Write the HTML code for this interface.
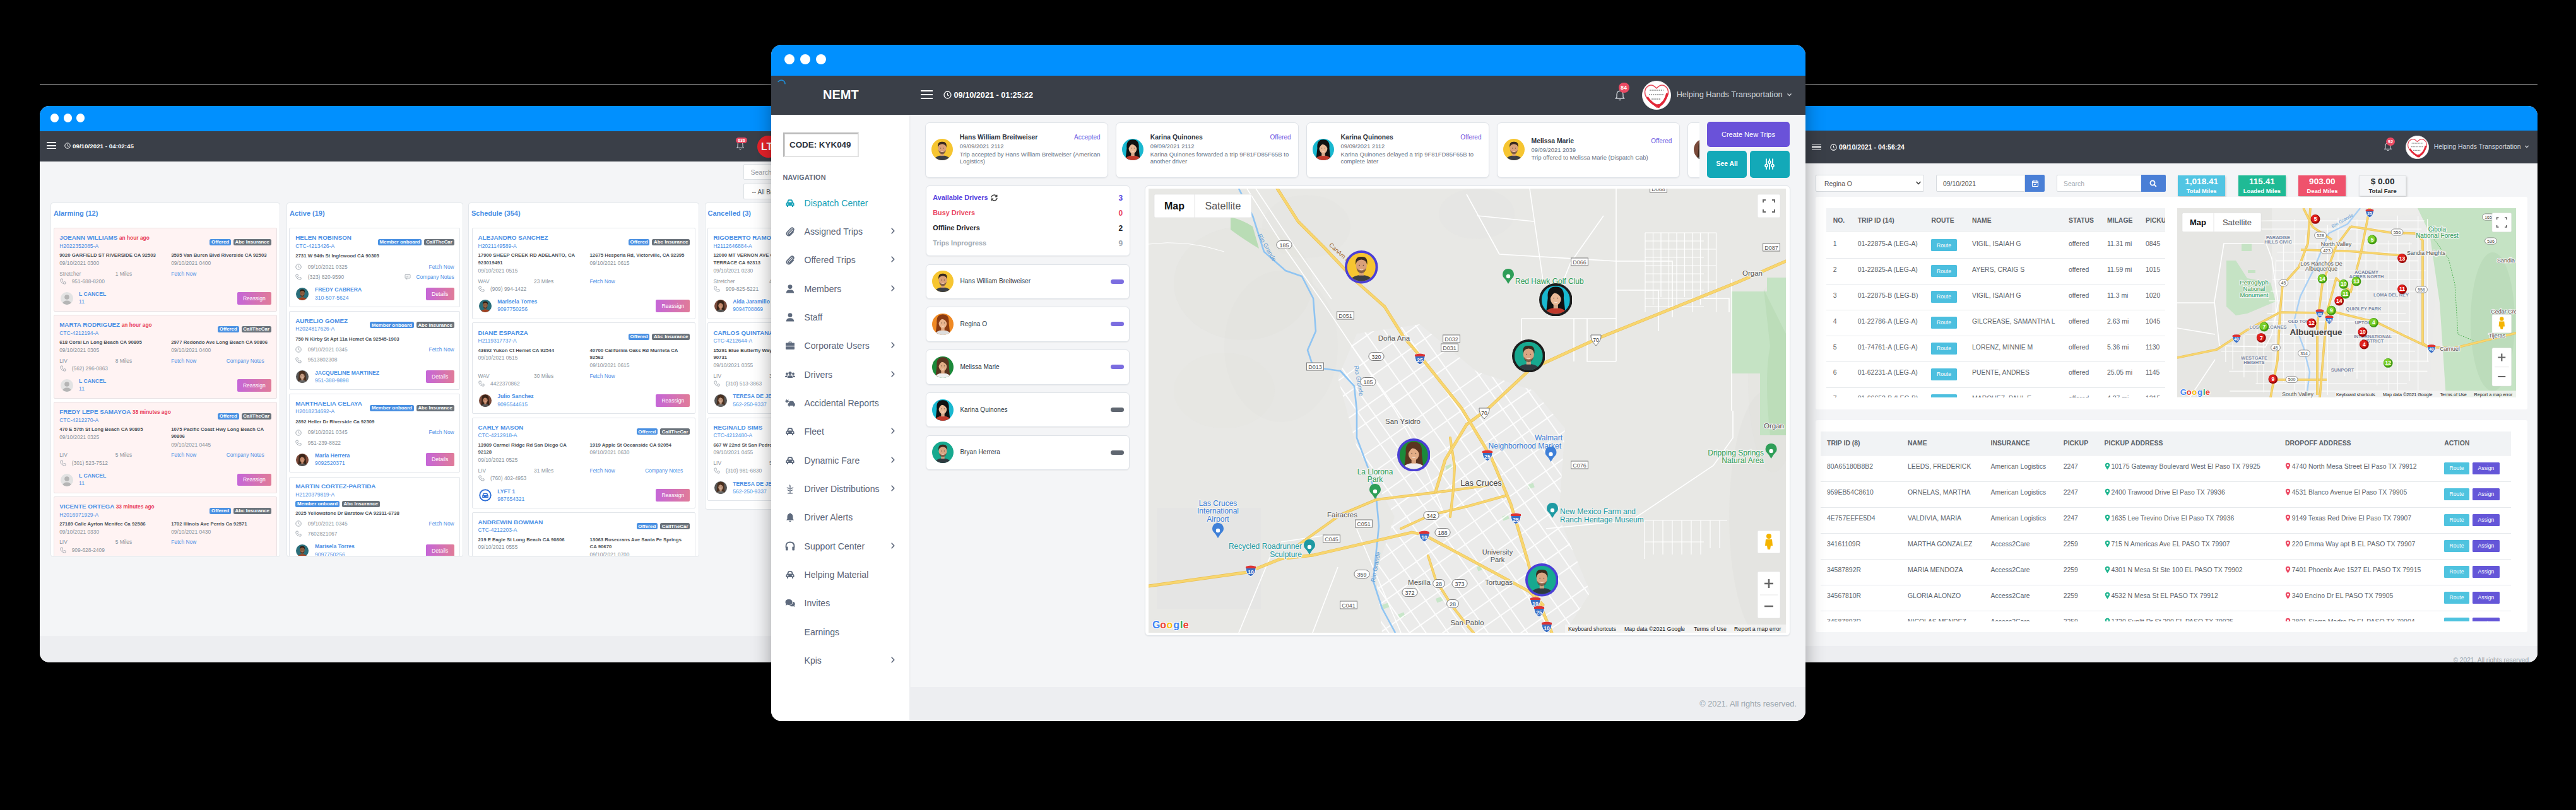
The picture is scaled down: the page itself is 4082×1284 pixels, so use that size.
<!DOCTYPE html>
<html><head><meta charset="utf-8">
<style>
*{box-sizing:border-box;margin:0;padding:0}
html,body{width:4082px;height:1284px;overflow:hidden;background:#000;font-family:"Liberation Sans",sans-serif}
.abs{position:absolute}
.win{position:absolute;overflow:hidden}
.tb{position:absolute;left:0;right:0;top:0;background:#0190fe}
.dot{position:absolute;border-radius:50%;background:#fff}
.hdr{position:absolute;left:0;right:0;background:#3a3f48}
.t{position:absolute;white-space:nowrap}
.card{position:absolute;background:#fff;border:1px solid #dfe3e8;border-radius:7px;box-shadow:0 1px 2px rgba(0,0,0,.06)}
</style></head><body>

<div class="abs" style="left:63px;top:133px;width:3958px;height:1px;background:#a9a9a9"></div>
<div id="lw" class="win" style="left:63px;top:168px;width:1239px;height:882px;border-radius:15px;background:#f4f5f7">
<div class="tb" style="height:39.5px"></div>
<div class="dot" style="left:17.1px;top:12.4px;width:13.2px;height:13.2px"></div>
<div class="dot" style="left:37.8px;top:12.4px;width:13.2px;height:13.2px"></div>
<div class="dot" style="left:58.2px;top:12.4px;width:13.2px;height:13.2px"></div>
<div class="hdr" style="top:39.5px;height:48px"></div>
<div class="abs" style="left:-1px;top:0;width:1240px;height:881px">
<div class="abs" style="left:12.0px;top:57.2px;width:15.0px;height:1.7px;background:#fff;"></div>
<div class="abs" style="left:12.0px;top:61.9px;width:15.0px;height:1.7px;background:#fff;"></div>
<div class="abs" style="left:12.0px;top:66.6px;width:15.0px;height:1.7px;background:#fff;"></div>
<svg class="abs" style="left:40px;top:57.7px" width="10" height="10" viewBox="0 0 10 10"><circle cx="5" cy="5" r="4.2" fill="none" stroke="#fff" stroke-width="1"/><path d="M5 2.5 V5.3 L6.8 6.3" fill="none" stroke="#fff" stroke-width=".9"/></svg>
<div class="t" style="left:53.0px;top:58.5px;font-size:9.8px;line-height:9.8px;color:#fff;font-weight:bold;">09/10/2021 - 04:02:45</div>
<svg class="abs" style="left:1103px;top:54px" width="16" height="17" viewBox="0 0 16 17"><path d="M8 2.5 Q12 3 12 7.5 V10.5 L13.2 12.3 H2.8 L4 10.5 V7.5 Q4 3 8 2.5Z" fill="none" stroke="#c9cdd3" stroke-width="1.1"/><path d="M6.5 14 Q8 15.6 9.5 14" fill="none" stroke="#c9cdd3" stroke-width="1"/></svg>
<div class="abs" style="left:1104px;top:49.8px;width:18px;height:9px;border-radius:4.5px;background:#ea4a63"></div>
<div class="t" style="left:1113.0px;top:51.1px;font-size:7px;line-height:7px;color:#fff;font-weight:bold;transform:translateX(-50%);">636</div>
<div class="abs" style="left:1138.4px;top:47px;width:35px;height:35px;border-radius:50%;background:#e8222a"></div>
<div class="t" style="left:1144.0px;top:56.5px;font-size:16px;line-height:16px;color:#fff;font-weight:bold;">LT</div>
<div class="abs" style="left:1116px;top:92px;width:120px;height:25px;background:#fff;border:1px solid #dde1e5;border-radius:2px"></div>
<div class="t" style="left:1127.5px;top:100.1px;font-size:10.5px;line-height:10.5px;color:#9aa1a8;font-weight:normal;">Search</div>
<div class="abs" style="left:1116px;top:122.8px;width:120px;height:25.7px;background:#fff;border:1px solid #dde1e5;border-radius:2px"></div>
<div class="t" style="left:1129.5px;top:131.5px;font-size:10px;line-height:10px;color:#555;font-weight:normal;">-- All Br</div>
<div class="abs" style="left:18px;top:153px;width:364px;height:561.5px;background:#fff;border:1px solid #e3e7eb;border-radius:4px"></div>
<div class="t" style="left:23.0px;top:165.3px;font-size:11px;line-height:11px;color:#4a8fe5;font-weight:bold;">Alarming (12)</div>
<div class="abs" style="left:392px;top:153px;width:280px;height:561.5px;background:#fff;border:1px solid #e3e7eb;border-radius:4px"></div>
<div class="t" style="left:397.0px;top:165.3px;font-size:11px;line-height:11px;color:#4a8fe5;font-weight:bold;">Active (19)</div>
<div class="abs" style="left:680px;top:153px;width:366px;height:561.5px;background:#fff;border:1px solid #e3e7eb;border-radius:4px"></div>
<div class="t" style="left:685.0px;top:165.3px;font-size:11px;line-height:11px;color:#4a8fe5;font-weight:bold;">Schedule (354)</div>
<div class="abs" style="left:1054.5px;top:153px;width:300px;height:487px;background:#fff;border:1px solid #e3e7eb;border-radius:4px"></div>
<div class="t" style="left:1059.5px;top:165.3px;font-size:11px;line-height:11px;color:#4a8fe5;font-weight:bold;">Cancelled (3)</div>
<div class="abs" style="left:18px;top:153px;width:364px;height:560px;overflow:hidden">
<div class="abs" style="left:5.0px;top:40.3px;width:354.0px;height:132.9px;background:#fff3f3;border:1px solid #e8e1e3;border-radius:2px"></div>
<div class="t" style="left:14.2px;top:51.4px;font-size:9.8px;line-height:9.8px;color:#4a8fe5;font-weight:bold;">JOEANN WILLIAMS <span style="color:#e8405a;font-size:8.4px">an hour ago</span></div>
<div class="t" style="left:14.2px;top:64.8px;font-size:8.5px;line-height:8.5px;color:#4a8fe5;font-weight:normal;">H2022352085-A</div>
<div class="abs" style="left:289.9px;top:58.0px;width:59.9px;height:10px;border-radius:2.5px;background:#6b737b"></div><div class="t" style="left:319.8px;top:59.3px;font-size:7.9px;line-height:7.9px;color:#fff;font-weight:bold;transform:translateX(-50%);">Abc Insurance</div><div class="abs" style="left:252.3px;top:58.0px;width:33.6px;height:10px;border-radius:2.5px;background:#4a90e2"></div><div class="t" style="left:269.1px;top:59.3px;font-size:7.9px;line-height:7.9px;color:#fff;font-weight:bold;transform:translateX(-50%);">Offered</div>
<div class="t" style="left:14.2px;top:80.4px;font-size:7.8px;line-height:7.8px;color:#4d535a;font-weight:bold;">9020 GARFIELD ST RIVERSIDE CA 92503</div>
<div class="t" style="left:14.2px;top:91.9px;font-size:8.4px;line-height:8.4px;color:#8b949c;font-weight:normal;">09/10/2021 0300</div>
<div class="t" style="left:191.2px;top:80.4px;font-size:7.8px;line-height:7.8px;color:#4d535a;font-weight:bold;">3595 Van Buren Blvd Riverside CA 92503</div>
<div class="t" style="left:191.2px;top:91.9px;font-size:8.4px;line-height:8.4px;color:#8b949c;font-weight:normal;">09/10/2021 0400</div>
<div class="t" style="left:14.2px;top:108.6px;font-size:8.4px;line-height:8.4px;color:#8b949c;font-weight:normal;">Stretcher</div>
<div class="t" style="left:102.7px;top:108.6px;font-size:8.4px;line-height:8.4px;color:#8b949c;font-weight:normal;">1 Miles</div>
<div class="t" style="left:191.2px;top:108.6px;font-size:8.4px;line-height:8.4px;color:#4a8fe5;font-weight:normal;">Fetch Now</div>
<svg class="abs" style="left:14.5px;top:120.1px" width="10" height="10" viewBox="0 0 10 10"><path d="M2.2 1 L3.8 1 L4.6 3.2 L3.5 4.2 Q4.4 6 6 6.6 L7 5.5 L9.1 6.3 V7.9 Q9 9.3 7.6 9.2 Q4.2 8.8 2.1 6.4 Q0.7 4.5 0.8 2.4 Q0.9 1.1 2.2 1Z" fill="none" stroke="#9aa2aa" stroke-width=".9"/></svg>
<div class="t" style="left:33.7px;top:120.8px;font-size:8.4px;line-height:8.4px;color:#8b949c;font-weight:normal;">951-688-8200</div>
<svg class="abs" style="left:15.5px;top:141.9px" width="20.0" height="20.0" viewBox="-50 -50 100 100"><clipPath id="cgen225151"><circle r="50"/></clipPath><g clip-path="url(#cgen225151)"><rect x="-50" y="-50" width="100" height="100" fill="#e3e3e3"/><circle cy="-10" r="19" fill="#b5b5b5"/><ellipse cy="42" rx="34" ry="24" fill="#b5b5b5"/></g></svg>
<div class="t" style="left:45.0px;top:141.3px;font-size:8.6px;line-height:8.6px;color:#4a8fe5;font-weight:bold;">L CANCEL</div>
<div class="t" style="left:45.0px;top:153.4px;font-size:8.6px;line-height:8.6px;color:#4a8fe5;font-weight:normal;">11</div>
<div class="abs" style="left:295.7px;top:142.1px;width:54.3px;height:19.5px;border-radius:2px;background:linear-gradient(90deg,#c566d8,#e07b98)"></div><div class="t" style="left:322.8px;top:147.6px;font-size:8.6px;line-height:8.6px;color:#fff;font-weight:normal;transform:translateX(-50%);">Reassign</div>
<div class="abs" style="left:5.0px;top:178.2px;width:354.0px;height:132.9px;background:#fff3f3;border:1px solid #e8e1e3;border-radius:2px"></div>
<div class="t" style="left:14.2px;top:189.3px;font-size:9.8px;line-height:9.8px;color:#4a8fe5;font-weight:bold;">MARTA RODRIGUEZ <span style="color:#e8405a;font-size:8.4px">an hour ago</span></div>
<div class="t" style="left:14.2px;top:202.7px;font-size:8.5px;line-height:8.5px;color:#4a8fe5;font-weight:normal;">CTC-4212194-A</div>
<div class="abs" style="left:302.6px;top:195.9px;width:47.2px;height:10px;border-radius:2.5px;background:#6b737b"></div><div class="t" style="left:326.2px;top:197.2px;font-size:7.9px;line-height:7.9px;color:#fff;font-weight:bold;transform:translateX(-50%);">CallTheCar</div><div class="abs" style="left:265.0px;top:195.9px;width:33.6px;height:10px;border-radius:2.5px;background:#4a90e2"></div><div class="t" style="left:281.8px;top:197.2px;font-size:7.9px;line-height:7.9px;color:#fff;font-weight:bold;transform:translateX(-50%);">Offered</div>
<div class="t" style="left:14.2px;top:218.3px;font-size:7.8px;line-height:7.8px;color:#4d535a;font-weight:bold;">618 Coral Ln Long Beach CA 90805</div>
<div class="t" style="left:14.2px;top:229.8px;font-size:8.4px;line-height:8.4px;color:#8b949c;font-weight:normal;">09/10/2021 0305</div>
<div class="t" style="left:191.2px;top:218.3px;font-size:7.8px;line-height:7.8px;color:#4d535a;font-weight:bold;">2977 Redondo Ave Long Beach CA 90806</div>
<div class="t" style="left:191.2px;top:229.8px;font-size:8.4px;line-height:8.4px;color:#8b949c;font-weight:normal;">09/10/2021 0400</div>
<div class="t" style="left:14.2px;top:246.5px;font-size:8.4px;line-height:8.4px;color:#8b949c;font-weight:normal;">LIV</div>
<div class="t" style="left:102.7px;top:246.5px;font-size:8.4px;line-height:8.4px;color:#8b949c;font-weight:normal;">8 Miles</div>
<div class="t" style="left:191.2px;top:246.5px;font-size:8.4px;line-height:8.4px;color:#4a8fe5;font-weight:normal;">Fetch Now</div>
<div class="t" style="left:338.7px;top:246.5px;font-size:8.4px;line-height:8.4px;color:#4a8fe5;font-weight:normal;transform:translateX(-100%);">Company Notes</div>
<svg class="abs" style="left:14.5px;top:258.0px" width="10" height="10" viewBox="0 0 10 10"><path d="M2.2 1 L3.8 1 L4.6 3.2 L3.5 4.2 Q4.4 6 6 6.6 L7 5.5 L9.1 6.3 V7.9 Q9 9.3 7.6 9.2 Q4.2 8.8 2.1 6.4 Q0.7 4.5 0.8 2.4 Q0.9 1.1 2.2 1Z" fill="none" stroke="#9aa2aa" stroke-width=".9"/></svg>
<div class="t" style="left:33.7px;top:258.7px;font-size:8.4px;line-height:8.4px;color:#8b949c;font-weight:normal;">(562) 296-0863</div>
<svg class="abs" style="left:15.5px;top:279.8px" width="20.0" height="20.0" viewBox="-50 -50 100 100"><clipPath id="cgen225289"><circle r="50"/></clipPath><g clip-path="url(#cgen225289)"><rect x="-50" y="-50" width="100" height="100" fill="#e3e3e3"/><circle cy="-10" r="19" fill="#b5b5b5"/><ellipse cy="42" rx="34" ry="24" fill="#b5b5b5"/></g></svg>
<div class="t" style="left:45.0px;top:279.2px;font-size:8.6px;line-height:8.6px;color:#4a8fe5;font-weight:bold;">L CANCEL</div>
<div class="t" style="left:45.0px;top:291.3px;font-size:8.6px;line-height:8.6px;color:#4a8fe5;font-weight:normal;">11</div>
<div class="abs" style="left:295.7px;top:280.0px;width:54.3px;height:19.5px;border-radius:2px;background:linear-gradient(90deg,#c566d8,#e07b98)"></div><div class="t" style="left:322.8px;top:285.5px;font-size:8.6px;line-height:8.6px;color:#fff;font-weight:normal;transform:translateX(-50%);">Reassign</div>
<div class="abs" style="left:5.0px;top:316.1px;width:354.0px;height:144.9px;background:#fff3f3;border:1px solid #e8e1e3;border-radius:2px"></div>
<div class="t" style="left:14.2px;top:327.2px;font-size:9.8px;line-height:9.8px;color:#4a8fe5;font-weight:bold;">FREDY LEPE SAMAYOA <span style="color:#e8405a;font-size:8.4px">38 minutes ago</span></div>
<div class="t" style="left:14.2px;top:340.6px;font-size:8.5px;line-height:8.5px;color:#4a8fe5;font-weight:normal;">CTC-4212270-A</div>
<div class="abs" style="left:302.6px;top:333.8px;width:47.2px;height:10px;border-radius:2.5px;background:#6b737b"></div><div class="t" style="left:326.2px;top:335.1px;font-size:7.9px;line-height:7.9px;color:#fff;font-weight:bold;transform:translateX(-50%);">CallTheCar</div><div class="abs" style="left:265.0px;top:333.8px;width:33.6px;height:10px;border-radius:2.5px;background:#4a90e2"></div><div class="t" style="left:281.8px;top:335.1px;font-size:7.9px;line-height:7.9px;color:#fff;font-weight:bold;transform:translateX(-50%);">Offered</div>
<div class="t" style="left:14.2px;top:356.2px;font-size:7.8px;line-height:7.8px;color:#4d535a;font-weight:bold;">470 E 57th St Long Beach CA 90805</div>
<div class="t" style="left:14.2px;top:367.7px;font-size:8.4px;line-height:8.4px;color:#8b949c;font-weight:normal;">09/10/2021 0325</div>
<div class="t" style="left:191.2px;top:356.2px;font-size:7.8px;line-height:7.8px;color:#4d535a;font-weight:bold;">1075 Pacific Coast Hwy Long Beach CA</div>
<div class="t" style="left:191.2px;top:367.4px;font-size:7.8px;line-height:7.8px;color:#4d535a;font-weight:bold;">90806</div>
<div class="t" style="left:191.2px;top:379.7px;font-size:8.4px;line-height:8.4px;color:#8b949c;font-weight:normal;">09/10/2021 0445</div>
<div class="t" style="left:14.2px;top:396.4px;font-size:8.4px;line-height:8.4px;color:#8b949c;font-weight:normal;">LIV</div>
<div class="t" style="left:102.7px;top:396.4px;font-size:8.4px;line-height:8.4px;color:#8b949c;font-weight:normal;">5 Miles</div>
<div class="t" style="left:191.2px;top:396.4px;font-size:8.4px;line-height:8.4px;color:#4a8fe5;font-weight:normal;">Fetch Now</div>
<div class="t" style="left:338.7px;top:396.4px;font-size:8.4px;line-height:8.4px;color:#4a8fe5;font-weight:normal;transform:translateX(-100%);">Company Notes</div>
<svg class="abs" style="left:14.5px;top:407.9px" width="10" height="10" viewBox="0 0 10 10"><path d="M2.2 1 L3.8 1 L4.6 3.2 L3.5 4.2 Q4.4 6 6 6.6 L7 5.5 L9.1 6.3 V7.9 Q9 9.3 7.6 9.2 Q4.2 8.8 2.1 6.4 Q0.7 4.5 0.8 2.4 Q0.9 1.1 2.2 1Z" fill="none" stroke="#9aa2aa" stroke-width=".9"/></svg>
<div class="t" style="left:33.7px;top:408.6px;font-size:8.4px;line-height:8.4px;color:#8b949c;font-weight:normal;">(301) 523-7512</div>
<svg class="abs" style="left:15.5px;top:429.7px" width="20.0" height="20.0" viewBox="-50 -50 100 100"><clipPath id="cgen225439"><circle r="50"/></clipPath><g clip-path="url(#cgen225439)"><rect x="-50" y="-50" width="100" height="100" fill="#e3e3e3"/><circle cy="-10" r="19" fill="#b5b5b5"/><ellipse cy="42" rx="34" ry="24" fill="#b5b5b5"/></g></svg>
<div class="t" style="left:45.0px;top:429.1px;font-size:8.6px;line-height:8.6px;color:#4a8fe5;font-weight:bold;">L CANCEL</div>
<div class="t" style="left:45.0px;top:441.2px;font-size:8.6px;line-height:8.6px;color:#4a8fe5;font-weight:normal;">11</div>
<div class="abs" style="left:295.7px;top:429.9px;width:54.3px;height:19.5px;border-radius:2px;background:linear-gradient(90deg,#c566d8,#e07b98)"></div><div class="t" style="left:322.8px;top:435.4px;font-size:8.6px;line-height:8.6px;color:#fff;font-weight:normal;transform:translateX(-50%);">Reassign</div>
<div class="abs" style="left:5.0px;top:466.0px;width:354.0px;height:132.9px;background:#fff3f3;border:1px solid #e8e1e3;border-radius:2px"></div>
<div class="t" style="left:14.2px;top:477.1px;font-size:9.8px;line-height:9.8px;color:#4a8fe5;font-weight:bold;">VICENTE ORTEGA <span style="color:#e8405a;font-size:8.4px">33 minutes ago</span></div>
<div class="t" style="left:14.2px;top:490.5px;font-size:8.5px;line-height:8.5px;color:#4a8fe5;font-weight:normal;">H2016971929-A</div>
<div class="abs" style="left:289.9px;top:483.7px;width:59.9px;height:10px;border-radius:2.5px;background:#6b737b"></div><div class="t" style="left:319.8px;top:485.0px;font-size:7.9px;line-height:7.9px;color:#fff;font-weight:bold;transform:translateX(-50%);">Abc Insurance</div><div class="abs" style="left:252.3px;top:483.7px;width:33.6px;height:10px;border-radius:2.5px;background:#4a90e2"></div><div class="t" style="left:269.1px;top:485.0px;font-size:7.9px;line-height:7.9px;color:#fff;font-weight:bold;transform:translateX(-50%);">Offered</div>
<div class="t" style="left:14.2px;top:506.1px;font-size:7.8px;line-height:7.8px;color:#4d535a;font-weight:bold;">27189 Calle Ayrton Menifee Ca 92586</div>
<div class="t" style="left:14.2px;top:517.6px;font-size:8.4px;line-height:8.4px;color:#8b949c;font-weight:normal;">09/10/2021 0330</div>
<div class="t" style="left:191.2px;top:506.1px;font-size:7.8px;line-height:7.8px;color:#4d535a;font-weight:bold;">1702 Illinois Ave Perris Ca 92571</div>
<div class="t" style="left:191.2px;top:517.6px;font-size:8.4px;line-height:8.4px;color:#8b949c;font-weight:normal;">09/10/2021 0430</div>
<div class="t" style="left:14.2px;top:534.3px;font-size:8.4px;line-height:8.4px;color:#8b949c;font-weight:normal;">LIV</div>
<div class="t" style="left:102.7px;top:534.3px;font-size:8.4px;line-height:8.4px;color:#8b949c;font-weight:normal;">5 Miles</div>
<div class="t" style="left:191.2px;top:534.3px;font-size:8.4px;line-height:8.4px;color:#4a8fe5;font-weight:normal;">Fetch Now</div>
<svg class="abs" style="left:14.5px;top:545.8px" width="10" height="10" viewBox="0 0 10 10"><path d="M2.2 1 L3.8 1 L4.6 3.2 L3.5 4.2 Q4.4 6 6 6.6 L7 5.5 L9.1 6.3 V7.9 Q9 9.3 7.6 9.2 Q4.2 8.8 2.1 6.4 Q0.7 4.5 0.8 2.4 Q0.9 1.1 2.2 1Z" fill="none" stroke="#9aa2aa" stroke-width=".9"/></svg>
<div class="t" style="left:33.7px;top:546.5px;font-size:8.4px;line-height:8.4px;color:#8b949c;font-weight:normal;">909-628-2409</div>
<svg class="abs" style="left:15.5px;top:567.6px" width="20.0" height="20.0" viewBox="-50 -50 100 100"><clipPath id="cgen225577"><circle r="50"/></clipPath><g clip-path="url(#cgen225577)"><rect x="-50" y="-50" width="100" height="100" fill="#e3e3e3"/><circle cy="-10" r="19" fill="#b5b5b5"/><ellipse cy="42" rx="34" ry="24" fill="#b5b5b5"/></g></svg>
<div class="t" style="left:45.0px;top:567.0px;font-size:8.6px;line-height:8.6px;color:#4a8fe5;font-weight:bold;">L CANCEL</div>
<div class="t" style="left:45.0px;top:579.1px;font-size:8.6px;line-height:8.6px;color:#4a8fe5;font-weight:normal;">11</div>
<div class="abs" style="left:295.7px;top:567.8px;width:54.3px;height:19.5px;border-radius:2px;background:linear-gradient(90deg,#c566d8,#e07b98)"></div><div class="t" style="left:322.8px;top:573.3px;font-size:8.6px;line-height:8.6px;color:#fff;font-weight:normal;transform:translateX(-50%);">Reassign</div>
</div>
<div class="abs" style="left:392px;top:153px;width:280px;height:560px;overflow:hidden">
<div class="abs" style="left:4.4px;top:40.3px;width:270.5px;height:125.4px;background:#fff;border:1px solid #e1e5ea;border-radius:2px"></div>
<div class="t" style="left:14.2px;top:51.2px;font-size:9.8px;line-height:9.8px;color:#4a8fe5;font-weight:bold;">HELEN ROBINSON</div>
<div class="t" style="left:14.2px;top:64.5px;font-size:8.5px;line-height:8.5px;color:#4a8fe5;font-weight:normal;">CTC-4213426-A</div>
<div class="abs" style="left:218.4px;top:57.9px;width:47.2px;height:10px;border-radius:2.5px;background:#6b737b"></div><div class="t" style="left:242.0px;top:59.2px;font-size:7.9px;line-height:7.9px;color:#fff;font-weight:bold;transform:translateX(-50%);">CallTheCar</div><div class="abs" style="left:144.8px;top:57.9px;width:69.6px;height:10px;border-radius:2.5px;background:#4a90e2"></div><div class="t" style="left:179.6px;top:59.2px;font-size:7.9px;line-height:7.9px;color:#fff;font-weight:bold;transform:translateX(-50%);">Member onboard</div>
<div class="t" style="left:14.2px;top:81.3px;font-size:7.8px;line-height:7.8px;color:#4d535a;font-weight:bold;">2731 W 94th St Inglewood CA 90305</div>
<svg class="abs" style="left:14.2px;top:96.9px" width="10" height="10" viewBox="0 0 10 10"><circle cx="5" cy="5" r="4.2" fill="none" stroke="#9aa2aa" stroke-width=".9"/><path d="M5 2.6 V5.2 L6.6 6.2" fill="none" stroke="#9aa2aa" stroke-width=".9"/></svg>
<div class="t" style="left:33.8px;top:97.6px;font-size:8.4px;line-height:8.4px;color:#8b949c;font-weight:normal;">09/10/2021 0325</div>
<div class="t" style="left:265.6px;top:97.6px;font-size:8.4px;line-height:8.4px;color:#4a8fe5;font-weight:normal;transform:translateX(-100%);">Fetch Now</div>
<svg class="abs" style="left:14.2px;top:113.1px" width="10" height="10" viewBox="0 0 10 10"><path d="M2.2 1 L3.8 1 L4.6 3.2 L3.5 4.2 Q4.4 6 6 6.6 L7 5.5 L9.1 6.3 V7.9 Q9 9.3 7.6 9.2 Q4.2 8.8 2.1 6.4 Q0.7 4.5 0.8 2.4 Q0.9 1.1 2.2 1Z" fill="none" stroke="#9aa2aa" stroke-width=".9"/></svg>
<div class="t" style="left:33.8px;top:113.8px;font-size:8.4px;line-height:8.4px;color:#8b949c;font-weight:normal;">(323) 820-9590</div>
<svg class="abs" style="left:186.6px;top:113.1px" width="10" height="10" viewBox="0 0 10 10"><path d="M1 1.5 H9 V7 H5.5 L3.5 8.8 V7 H1Z M2.8 3.5 H7.2 M2.8 5 H6" fill="none" stroke="#9aa2aa" stroke-width=".8"/></svg>
<div class="t" style="left:265.6px;top:113.8px;font-size:8.4px;line-height:8.4px;color:#4a8fe5;font-weight:normal;transform:translateX(-100%);">Company Notes</div>
<svg class="abs" style="left:15.3px;top:134.9px" width="20.0" height="20.0" viewBox="-50 -50 100 100"><clipPath id="cgen125144"><circle r="50"/></clipPath><g clip-path="url(#cgen125144)"><rect x="-50" y="-50" width="100" height="100" fill="#2a6e7a"/><ellipse cx="0" cy="52" rx="40" ry="24" fill="#a04020"/><rect x="-8" y="10" width="16" height="20" fill="#8a5a3c" opacity=".9"/><ellipse cx="0" cy="-5" rx="19" ry="24" fill="#8a5a3c"/><path d="M-20 -8 Q-24 -38 0 -36 Q24 -38 20 -8 Q18 -24 0 -26 Q-18 -24 -20 -8Z" fill="#2a1a10"/><path d="M-17 2 Q-16 20 0 22 Q16 20 17 2 Q12 12 0 12 Q-12 12 -17 2Z" fill="#2a1a10" opacity=".55"/><circle cx="-7" cy="-6" r="1.8" fill="#222" opacity=".7"/><circle cx="7" cy="-6" r="1.8" fill="#222" opacity=".7"/><path d="M-6 8 Q0 12 6 8" fill="none" stroke="#fff" stroke-width="2" opacity=".7"/></g></svg>
<div class="t" style="left:44.9px;top:134.2px;font-size:8.6px;line-height:8.6px;color:#4a8fe5;font-weight:bold;">FREDY CABRERA</div>
<div class="t" style="left:44.9px;top:146.5px;font-size:8.6px;line-height:8.6px;color:#4a8fe5;font-weight:normal;">310-507-5624</div>
<div class="abs" style="left:220.9px;top:134.6px;width:44.7px;height:20.4px;border-radius:2px;background:linear-gradient(90deg,#c566d8,#e07b98)"></div><div class="t" style="left:243.2px;top:140.5px;font-size:8.6px;line-height:8.6px;color:#fff;font-weight:normal;transform:translateX(-50%);">Details</div>
<div class="abs" style="left:4.4px;top:171.7px;width:270.5px;height:125.4px;background:#fff;border:1px solid #e1e5ea;border-radius:2px"></div>
<div class="t" style="left:14.2px;top:182.6px;font-size:9.8px;line-height:9.8px;color:#4a8fe5;font-weight:bold;">AURELIO GOMEZ</div>
<div class="t" style="left:14.2px;top:195.9px;font-size:8.5px;line-height:8.5px;color:#4a8fe5;font-weight:normal;">H2024817626-A</div>
<div class="abs" style="left:205.7px;top:189.3px;width:59.9px;height:10px;border-radius:2.5px;background:#6b737b"></div><div class="t" style="left:235.6px;top:190.6px;font-size:7.9px;line-height:7.9px;color:#fff;font-weight:bold;transform:translateX(-50%);">Abc Insurance</div><div class="abs" style="left:132.1px;top:189.3px;width:69.6px;height:10px;border-radius:2.5px;background:#4a90e2"></div><div class="t" style="left:166.9px;top:190.6px;font-size:7.9px;line-height:7.9px;color:#fff;font-weight:bold;transform:translateX(-50%);">Member onboard</div>
<div class="t" style="left:14.2px;top:212.7px;font-size:7.8px;line-height:7.8px;color:#4d535a;font-weight:bold;">750 N Kirby St Apt 11a Hemet Ca 92545-1903</div>
<svg class="abs" style="left:14.2px;top:228.3px" width="10" height="10" viewBox="0 0 10 10"><circle cx="5" cy="5" r="4.2" fill="none" stroke="#9aa2aa" stroke-width=".9"/><path d="M5 2.6 V5.2 L6.6 6.2" fill="none" stroke="#9aa2aa" stroke-width=".9"/></svg>
<div class="t" style="left:33.8px;top:229.0px;font-size:8.4px;line-height:8.4px;color:#8b949c;font-weight:normal;">09/10/2021 0345</div>
<div class="t" style="left:265.6px;top:229.0px;font-size:8.4px;line-height:8.4px;color:#4a8fe5;font-weight:normal;transform:translateX(-100%);">Fetch Now</div>
<svg class="abs" style="left:14.2px;top:244.5px" width="10" height="10" viewBox="0 0 10 10"><path d="M2.2 1 L3.8 1 L4.6 3.2 L3.5 4.2 Q4.4 6 6 6.6 L7 5.5 L9.1 6.3 V7.9 Q9 9.3 7.6 9.2 Q4.2 8.8 2.1 6.4 Q0.7 4.5 0.8 2.4 Q0.9 1.1 2.2 1Z" fill="none" stroke="#9aa2aa" stroke-width=".9"/></svg>
<div class="t" style="left:33.8px;top:245.2px;font-size:8.4px;line-height:8.4px;color:#8b949c;font-weight:normal;">9513802308</div>
<svg class="abs" style="left:15.3px;top:266.3px" width="20.0" height="20.0" viewBox="-50 -50 100 100"><clipPath id="cgen325276"><circle r="50"/></clipPath><g clip-path="url(#cgen325276)"><rect x="-50" y="-50" width="100" height="100" fill="#555"/><path d="M-28 -6 Q-32 -46 0 -46 Q32 -46 28 -6 L34 46 L-34 46 Z" fill="#4a3020"/><ellipse cx="0" cy="52" rx="40" ry="24" fill="#666"/><rect x="-8" y="10" width="16" height="20" fill="#c49a80" opacity=".9"/><ellipse cx="0" cy="-5" rx="19" ry="24" fill="#c49a80"/><path d="M-20 -2 Q-20 -34 2 -32 Q22 -32 20 -2 Q14 -22 -4 -24 Q-14 -20 -20 -2Z" fill="#4a3020"/><circle cx="-7" cy="-6" r="1.8" fill="#222" opacity=".7"/><circle cx="7" cy="-6" r="1.8" fill="#222" opacity=".7"/><path d="M-6 8 Q0 12 6 8" fill="none" stroke="#fff" stroke-width="2" opacity=".7"/></g></svg>
<div class="t" style="left:44.9px;top:265.6px;font-size:8.6px;line-height:8.6px;color:#4a8fe5;font-weight:bold;">JACQUELINE MARTINEZ</div>
<div class="t" style="left:44.9px;top:277.9px;font-size:8.6px;line-height:8.6px;color:#4a8fe5;font-weight:normal;">951-388-9898</div>
<div class="abs" style="left:220.9px;top:266.0px;width:44.7px;height:20.4px;border-radius:2px;background:linear-gradient(90deg,#c566d8,#e07b98)"></div><div class="t" style="left:243.2px;top:271.9px;font-size:8.6px;line-height:8.6px;color:#fff;font-weight:normal;transform:translateX(-50%);">Details</div>
<div class="abs" style="left:4.4px;top:303.1px;width:270.5px;height:125.4px;background:#fff;border:1px solid #e1e5ea;border-radius:2px"></div>
<div class="t" style="left:14.2px;top:314.0px;font-size:9.8px;line-height:9.8px;color:#4a8fe5;font-weight:bold;">MARTHAELIA CELAYA</div>
<div class="t" style="left:14.2px;top:327.3px;font-size:8.5px;line-height:8.5px;color:#4a8fe5;font-weight:normal;">H2018234692-A</div>
<div class="abs" style="left:205.7px;top:320.7px;width:59.9px;height:10px;border-radius:2.5px;background:#6b737b"></div><div class="t" style="left:235.6px;top:322.0px;font-size:7.9px;line-height:7.9px;color:#fff;font-weight:bold;transform:translateX(-50%);">Abc Insurance</div><div class="abs" style="left:132.1px;top:320.7px;width:69.6px;height:10px;border-radius:2.5px;background:#4a90e2"></div><div class="t" style="left:166.9px;top:322.0px;font-size:7.9px;line-height:7.9px;color:#fff;font-weight:bold;transform:translateX(-50%);">Member onboard</div>
<div class="t" style="left:14.2px;top:344.1px;font-size:7.8px;line-height:7.8px;color:#4d535a;font-weight:bold;">2892 Heller Dr Riverside Ca 92509</div>
<svg class="abs" style="left:14.2px;top:359.7px" width="10" height="10" viewBox="0 0 10 10"><circle cx="5" cy="5" r="4.2" fill="none" stroke="#9aa2aa" stroke-width=".9"/><path d="M5 2.6 V5.2 L6.6 6.2" fill="none" stroke="#9aa2aa" stroke-width=".9"/></svg>
<div class="t" style="left:33.8px;top:360.4px;font-size:8.4px;line-height:8.4px;color:#8b949c;font-weight:normal;">09/10/2021 0345</div>
<div class="t" style="left:265.6px;top:360.4px;font-size:8.4px;line-height:8.4px;color:#4a8fe5;font-weight:normal;transform:translateX(-100%);">Fetch Now</div>
<svg class="abs" style="left:14.2px;top:375.9px" width="10" height="10" viewBox="0 0 10 10"><path d="M2.2 1 L3.8 1 L4.6 3.2 L3.5 4.2 Q4.4 6 6 6.6 L7 5.5 L9.1 6.3 V7.9 Q9 9.3 7.6 9.2 Q4.2 8.8 2.1 6.4 Q0.7 4.5 0.8 2.4 Q0.9 1.1 2.2 1Z" fill="none" stroke="#9aa2aa" stroke-width=".9"/></svg>
<div class="t" style="left:33.8px;top:376.6px;font-size:8.4px;line-height:8.4px;color:#8b949c;font-weight:normal;">951-239-8822</div>
<svg class="abs" style="left:15.3px;top:397.7px" width="20.0" height="20.0" viewBox="-50 -50 100 100"><clipPath id="cgen425407"><circle r="50"/></clipPath><g clip-path="url(#cgen425407)"><rect x="-50" y="-50" width="100" height="100" fill="#7a4a3a"/><path d="M-28 -6 Q-32 -46 0 -46 Q32 -46 28 -6 L34 46 L-34 46 Z" fill="#3a2418"/><ellipse cx="0" cy="52" rx="40" ry="24" fill="#555"/><rect x="-8" y="10" width="16" height="20" fill="#c68a6a" opacity=".9"/><ellipse cx="0" cy="-5" rx="19" ry="24" fill="#c68a6a"/><path d="M-20 -2 Q-20 -34 2 -32 Q22 -32 20 -2 Q14 -22 -4 -24 Q-14 -20 -20 -2Z" fill="#3a2418"/><circle cx="-7" cy="-6" r="1.8" fill="#222" opacity=".7"/><circle cx="7" cy="-6" r="1.8" fill="#222" opacity=".7"/><path d="M-6 8 Q0 12 6 8" fill="none" stroke="#fff" stroke-width="2" opacity=".7"/></g></svg>
<div class="t" style="left:44.9px;top:397.0px;font-size:8.6px;line-height:8.6px;color:#4a8fe5;font-weight:bold;">Maria Herrera</div>
<div class="t" style="left:44.9px;top:409.3px;font-size:8.6px;line-height:8.6px;color:#4a8fe5;font-weight:normal;">9092520371</div>
<div class="abs" style="left:220.9px;top:397.4px;width:44.7px;height:20.4px;border-radius:2px;background:linear-gradient(90deg,#c566d8,#e07b98)"></div><div class="t" style="left:243.2px;top:403.3px;font-size:8.6px;line-height:8.6px;color:#fff;font-weight:normal;transform:translateX(-50%);">Details</div>
<div class="abs" style="left:4.4px;top:434.5px;width:270.5px;height:147.8px;background:#fff;border:1px solid #e1e5ea;border-radius:2px"></div>
<div class="t" style="left:14.2px;top:445.4px;font-size:9.8px;line-height:9.8px;color:#4a8fe5;font-weight:bold;">MARTIN CORTEZ-PARTIDA</div>
<div class="t" style="left:14.2px;top:458.7px;font-size:8.5px;line-height:8.5px;color:#4a8fe5;font-weight:normal;">H2120379819-A</div>
<div class="abs" style="left:14.2px;top:472.6px;width:69.6px;height:10px;border-radius:2.5px;background:#4a90e2"></div><div class="t" style="left:49.0px;top:473.9px;font-size:7.9px;line-height:7.9px;color:#fff;font-weight:bold;transform:translateX(-50%);">Member onboard</div><div class="abs" style="left:87.8px;top:472.6px;width:59.9px;height:10px;border-radius:2.5px;background:#6b737b"></div><div class="t" style="left:117.7px;top:473.9px;font-size:7.9px;line-height:7.9px;color:#fff;font-weight:bold;transform:translateX(-50%);">Abc Insurance</div>
<div class="t" style="left:14.2px;top:488.6px;font-size:7.8px;line-height:7.8px;color:#4d535a;font-weight:bold;">2025 Yellowstone Dr Barstow CA 92311-6738</div>
<svg class="abs" style="left:14.2px;top:504.1px" width="10" height="10" viewBox="0 0 10 10"><circle cx="5" cy="5" r="4.2" fill="none" stroke="#9aa2aa" stroke-width=".9"/><path d="M5 2.6 V5.2 L6.6 6.2" fill="none" stroke="#9aa2aa" stroke-width=".9"/></svg>
<div class="t" style="left:33.8px;top:504.8px;font-size:8.4px;line-height:8.4px;color:#8b949c;font-weight:normal;">09/10/2021 0345</div>
<div class="t" style="left:265.6px;top:504.8px;font-size:8.4px;line-height:8.4px;color:#4a8fe5;font-weight:normal;transform:translateX(-100%);">Fetch Now</div>
<svg class="abs" style="left:14.2px;top:519.8px" width="10" height="10" viewBox="0 0 10 10"><path d="M2.2 1 L3.8 1 L4.6 3.2 L3.5 4.2 Q4.4 6 6 6.6 L7 5.5 L9.1 6.3 V7.9 Q9 9.3 7.6 9.2 Q4.2 8.8 2.1 6.4 Q0.7 4.5 0.8 2.4 Q0.9 1.1 2.2 1Z" fill="none" stroke="#9aa2aa" stroke-width=".9"/></svg>
<div class="t" style="left:33.8px;top:520.5px;font-size:8.4px;line-height:8.4px;color:#8b949c;font-weight:normal;">7602821067</div>
<svg class="abs" style="left:15.3px;top:542.1px" width="20.0" height="20.0" viewBox="-50 -50 100 100"><clipPath id="cgen125552"><circle r="50"/></clipPath><g clip-path="url(#cgen125552)"><rect x="-50" y="-50" width="100" height="100" fill="#2a6e7a"/><ellipse cx="0" cy="52" rx="40" ry="24" fill="#a04020"/><rect x="-8" y="10" width="16" height="20" fill="#8a5a3c" opacity=".9"/><ellipse cx="0" cy="-5" rx="19" ry="24" fill="#8a5a3c"/><path d="M-20 -8 Q-24 -38 0 -36 Q24 -38 20 -8 Q18 -24 0 -26 Q-18 -24 -20 -8Z" fill="#2a1a10"/><path d="M-17 2 Q-16 20 0 22 Q16 20 17 2 Q12 12 0 12 Q-12 12 -17 2Z" fill="#2a1a10" opacity=".55"/><circle cx="-7" cy="-6" r="1.8" fill="#222" opacity=".7"/><circle cx="7" cy="-6" r="1.8" fill="#222" opacity=".7"/><path d="M-6 8 Q0 12 6 8" fill="none" stroke="#fff" stroke-width="2" opacity=".7"/></g></svg>
<div class="t" style="left:44.9px;top:541.4px;font-size:8.6px;line-height:8.6px;color:#4a8fe5;font-weight:bold;">Marisela Torres</div>
<div class="t" style="left:44.9px;top:553.7px;font-size:8.6px;line-height:8.6px;color:#4a8fe5;font-weight:normal;">9097750256</div>
<div class="abs" style="left:220.9px;top:541.8px;width:44.7px;height:20.4px;border-radius:2px;background:linear-gradient(90deg,#c566d8,#e07b98)"></div><div class="t" style="left:243.2px;top:547.7px;font-size:8.6px;line-height:8.6px;color:#fff;font-weight:normal;transform:translateX(-50%);">Details</div>
</div>
<div class="abs" style="left:680px;top:153px;width:366px;height:560px;overflow:hidden">
<div class="abs" style="left:6.3px;top:40.3px;width:354.2px;height:144.9px;background:#fff;border:1px solid #e1e5ea;border-radius:2px"></div>
<div class="t" style="left:15.5px;top:51.4px;font-size:9.8px;line-height:9.8px;color:#4a8fe5;font-weight:bold;">ALEJANDRO SANCHEZ</div>
<div class="t" style="left:15.5px;top:64.8px;font-size:8.5px;line-height:8.5px;color:#4a8fe5;font-weight:normal;">H2021149589-A</div>
<div class="abs" style="left:291.4px;top:58.0px;width:59.9px;height:10px;border-radius:2.5px;background:#6b737b"></div><div class="t" style="left:321.3px;top:59.3px;font-size:7.9px;line-height:7.9px;color:#fff;font-weight:bold;transform:translateX(-50%);">Abc Insurance</div><div class="abs" style="left:253.8px;top:58.0px;width:33.6px;height:10px;border-radius:2.5px;background:#4a90e2"></div><div class="t" style="left:270.6px;top:59.3px;font-size:7.9px;line-height:7.9px;color:#fff;font-weight:bold;transform:translateX(-50%);">Offered</div>
<div class="t" style="left:15.5px;top:80.4px;font-size:7.8px;line-height:7.8px;color:#4d535a;font-weight:bold;">17900 SHEEP CREEK RD ADELANTO, CA</div>
<div class="t" style="left:15.5px;top:91.6px;font-size:7.8px;line-height:7.8px;color:#4d535a;font-weight:bold;">923019491</div>
<div class="t" style="left:15.5px;top:103.9px;font-size:8.4px;line-height:8.4px;color:#8b949c;font-weight:normal;">09/10/2021 0515</div>
<div class="t" style="left:192.5px;top:80.4px;font-size:7.8px;line-height:7.8px;color:#4d535a;font-weight:bold;">12675 Hesperia Rd, Victorville, CA 92395</div>
<div class="t" style="left:192.5px;top:91.9px;font-size:8.4px;line-height:8.4px;color:#8b949c;font-weight:normal;">09/10/2021 0615</div>
<div class="t" style="left:15.5px;top:120.6px;font-size:8.4px;line-height:8.4px;color:#8b949c;font-weight:normal;">WAV</div>
<div class="t" style="left:104.0px;top:120.6px;font-size:8.4px;line-height:8.4px;color:#8b949c;font-weight:normal;">23 Miles</div>
<div class="t" style="left:192.5px;top:120.6px;font-size:8.4px;line-height:8.4px;color:#4a8fe5;font-weight:normal;">Fetch Now</div>
<svg class="abs" style="left:15.8px;top:132.1px" width="10" height="10" viewBox="0 0 10 10"><path d="M2.2 1 L3.8 1 L4.6 3.2 L3.5 4.2 Q4.4 6 6 6.6 L7 5.5 L9.1 6.3 V7.9 Q9 9.3 7.6 9.2 Q4.2 8.8 2.1 6.4 Q0.7 4.5 0.8 2.4 Q0.9 1.1 2.2 1Z" fill="none" stroke="#9aa2aa" stroke-width=".9"/></svg>
<div class="t" style="left:35.0px;top:132.8px;font-size:8.4px;line-height:8.4px;color:#8b949c;font-weight:normal;">(909) 994-1422</div>
<svg class="abs" style="left:16.8px;top:153.9px" width="20.0" height="20.0" viewBox="-50 -50 100 100"><clipPath id="cgen126163"><circle r="50"/></clipPath><g clip-path="url(#cgen126163)"><rect x="-50" y="-50" width="100" height="100" fill="#2a6e7a"/><ellipse cx="0" cy="52" rx="40" ry="24" fill="#a04020"/><rect x="-8" y="10" width="16" height="20" fill="#8a5a3c" opacity=".9"/><ellipse cx="0" cy="-5" rx="19" ry="24" fill="#8a5a3c"/><path d="M-20 -8 Q-24 -38 0 -36 Q24 -38 20 -8 Q18 -24 0 -26 Q-18 -24 -20 -8Z" fill="#2a1a10"/><path d="M-17 2 Q-16 20 0 22 Q16 20 17 2 Q12 12 0 12 Q-12 12 -17 2Z" fill="#2a1a10" opacity=".55"/><circle cx="-7" cy="-6" r="1.8" fill="#222" opacity=".7"/><circle cx="7" cy="-6" r="1.8" fill="#222" opacity=".7"/><path d="M-6 8 Q0 12 6 8" fill="none" stroke="#fff" stroke-width="2" opacity=".7"/></g></svg>
<div class="t" style="left:46.3px;top:153.3px;font-size:8.6px;line-height:8.6px;color:#4a8fe5;font-weight:bold;">Marisela Torres</div>
<div class="t" style="left:46.3px;top:165.4px;font-size:8.6px;line-height:8.6px;color:#4a8fe5;font-weight:normal;">9097750256</div>
<div class="abs" style="left:297.2px;top:154.1px;width:54.3px;height:19.5px;border-radius:2px;background:linear-gradient(90deg,#c566d8,#e07b98)"></div><div class="t" style="left:324.3px;top:159.6px;font-size:8.6px;line-height:8.6px;color:#fff;font-weight:normal;transform:translateX(-50%);">Reassign</div>
<div class="abs" style="left:6.3px;top:190.4px;width:354.2px;height:144.9px;background:#fff;border:1px solid #e1e5ea;border-radius:2px"></div>
<div class="t" style="left:15.5px;top:201.5px;font-size:9.8px;line-height:9.8px;color:#4a8fe5;font-weight:bold;">DIANE ESPARZA</div>
<div class="t" style="left:15.5px;top:214.9px;font-size:8.5px;line-height:8.5px;color:#4a8fe5;font-weight:normal;">H2119317737-A</div>
<div class="abs" style="left:291.4px;top:208.1px;width:59.9px;height:10px;border-radius:2.5px;background:#6b737b"></div><div class="t" style="left:321.3px;top:209.4px;font-size:7.9px;line-height:7.9px;color:#fff;font-weight:bold;transform:translateX(-50%);">Abc Insurance</div><div class="abs" style="left:253.8px;top:208.1px;width:33.6px;height:10px;border-radius:2.5px;background:#4a90e2"></div><div class="t" style="left:270.6px;top:209.4px;font-size:7.9px;line-height:7.9px;color:#fff;font-weight:bold;transform:translateX(-50%);">Offered</div>
<div class="t" style="left:15.5px;top:230.5px;font-size:7.8px;line-height:7.8px;color:#4d535a;font-weight:bold;">43692 Yukon Ct Hemet CA 92544</div>
<div class="t" style="left:15.5px;top:242.0px;font-size:8.4px;line-height:8.4px;color:#8b949c;font-weight:normal;">09/10/2021 0515</div>
<div class="t" style="left:192.5px;top:230.5px;font-size:7.8px;line-height:7.8px;color:#4d535a;font-weight:bold;">40700 California Oaks Rd Murrieta CA</div>
<div class="t" style="left:192.5px;top:241.7px;font-size:7.8px;line-height:7.8px;color:#4d535a;font-weight:bold;">92562</div>
<div class="t" style="left:192.5px;top:254.0px;font-size:8.4px;line-height:8.4px;color:#8b949c;font-weight:normal;">09/10/2021 0615</div>
<div class="t" style="left:15.5px;top:270.7px;font-size:8.4px;line-height:8.4px;color:#8b949c;font-weight:normal;">WAV</div>
<div class="t" style="left:104.0px;top:270.7px;font-size:8.4px;line-height:8.4px;color:#8b949c;font-weight:normal;">30 Miles</div>
<div class="t" style="left:192.5px;top:270.7px;font-size:8.4px;line-height:8.4px;color:#4a8fe5;font-weight:normal;">Fetch Now</div>
<svg class="abs" style="left:15.8px;top:282.2px" width="10" height="10" viewBox="0 0 10 10"><path d="M2.2 1 L3.8 1 L4.6 3.2 L3.5 4.2 Q4.4 6 6 6.6 L7 5.5 L9.1 6.3 V7.9 Q9 9.3 7.6 9.2 Q4.2 8.8 2.1 6.4 Q0.7 4.5 0.8 2.4 Q0.9 1.1 2.2 1Z" fill="none" stroke="#9aa2aa" stroke-width=".9"/></svg>
<div class="t" style="left:35.0px;top:282.9px;font-size:8.4px;line-height:8.4px;color:#8b949c;font-weight:normal;">4422370862</div>
<svg class="abs" style="left:16.8px;top:304.0px" width="20.0" height="20.0" viewBox="-50 -50 100 100"><clipPath id="cgen426314"><circle r="50"/></clipPath><g clip-path="url(#cgen426314)"><rect x="-50" y="-50" width="100" height="100" fill="#7a4a3a"/><path d="M-28 -6 Q-32 -46 0 -46 Q32 -46 28 -6 L34 46 L-34 46 Z" fill="#3a2418"/><ellipse cx="0" cy="52" rx="40" ry="24" fill="#555"/><rect x="-8" y="10" width="16" height="20" fill="#c68a6a" opacity=".9"/><ellipse cx="0" cy="-5" rx="19" ry="24" fill="#c68a6a"/><path d="M-20 -2 Q-20 -34 2 -32 Q22 -32 20 -2 Q14 -22 -4 -24 Q-14 -20 -20 -2Z" fill="#3a2418"/><circle cx="-7" cy="-6" r="1.8" fill="#222" opacity=".7"/><circle cx="7" cy="-6" r="1.8" fill="#222" opacity=".7"/><path d="M-6 8 Q0 12 6 8" fill="none" stroke="#fff" stroke-width="2" opacity=".7"/></g></svg>
<div class="t" style="left:46.3px;top:303.4px;font-size:8.6px;line-height:8.6px;color:#4a8fe5;font-weight:bold;">Julio Sanchez</div>
<div class="t" style="left:46.3px;top:315.5px;font-size:8.6px;line-height:8.6px;color:#4a8fe5;font-weight:normal;">9095544615</div>
<div class="abs" style="left:297.2px;top:304.2px;width:54.3px;height:19.5px;border-radius:2px;background:linear-gradient(90deg,#c566d8,#e07b98)"></div><div class="t" style="left:324.3px;top:309.7px;font-size:8.6px;line-height:8.6px;color:#fff;font-weight:normal;transform:translateX(-50%);">Reassign</div>
<div class="abs" style="left:6.3px;top:340.5px;width:354.2px;height:144.9px;background:#fff;border:1px solid #e1e5ea;border-radius:2px"></div>
<div class="t" style="left:15.5px;top:351.6px;font-size:9.8px;line-height:9.8px;color:#4a8fe5;font-weight:bold;">CARLY MASON</div>
<div class="t" style="left:15.5px;top:365.0px;font-size:8.5px;line-height:8.5px;color:#4a8fe5;font-weight:normal;">CTC-4212918-A</div>
<div class="abs" style="left:304.1px;top:358.2px;width:47.2px;height:10px;border-radius:2.5px;background:#6b737b"></div><div class="t" style="left:327.7px;top:359.5px;font-size:7.9px;line-height:7.9px;color:#fff;font-weight:bold;transform:translateX(-50%);">CallTheCar</div><div class="abs" style="left:266.5px;top:358.2px;width:33.6px;height:10px;border-radius:2.5px;background:#4a90e2"></div><div class="t" style="left:283.3px;top:359.5px;font-size:7.9px;line-height:7.9px;color:#fff;font-weight:bold;transform:translateX(-50%);">Offered</div>
<div class="t" style="left:15.5px;top:380.6px;font-size:7.8px;line-height:7.8px;color:#4d535a;font-weight:bold;">13989 Carmel Ridge Rd San Diego CA</div>
<div class="t" style="left:15.5px;top:391.8px;font-size:7.8px;line-height:7.8px;color:#4d535a;font-weight:bold;">92128</div>
<div class="t" style="left:15.5px;top:404.1px;font-size:8.4px;line-height:8.4px;color:#8b949c;font-weight:normal;">09/10/2021 0525</div>
<div class="t" style="left:192.5px;top:380.6px;font-size:7.8px;line-height:7.8px;color:#4d535a;font-weight:bold;">1919 Apple St Oceanside CA 92054</div>
<div class="t" style="left:192.5px;top:392.1px;font-size:8.4px;line-height:8.4px;color:#8b949c;font-weight:normal;">09/10/2021 0630</div>
<div class="t" style="left:15.5px;top:420.8px;font-size:8.4px;line-height:8.4px;color:#8b949c;font-weight:normal;">LIV</div>
<div class="t" style="left:104.0px;top:420.8px;font-size:8.4px;line-height:8.4px;color:#8b949c;font-weight:normal;">31 Miles</div>
<div class="t" style="left:192.5px;top:420.8px;font-size:8.4px;line-height:8.4px;color:#4a8fe5;font-weight:normal;">Fetch Now</div>
<div class="t" style="left:340.2px;top:420.8px;font-size:8.4px;line-height:8.4px;color:#4a8fe5;font-weight:normal;transform:translateX(-100%);">Company Notes</div>
<svg class="abs" style="left:15.8px;top:432.3px" width="10" height="10" viewBox="0 0 10 10"><path d="M2.2 1 L3.8 1 L4.6 3.2 L3.5 4.2 Q4.4 6 6 6.6 L7 5.5 L9.1 6.3 V7.9 Q9 9.3 7.6 9.2 Q4.2 8.8 2.1 6.4 Q0.7 4.5 0.8 2.4 Q0.9 1.1 2.2 1Z" fill="none" stroke="#9aa2aa" stroke-width=".9"/></svg>
<div class="t" style="left:35.0px;top:433.0px;font-size:8.4px;line-height:8.4px;color:#8b949c;font-weight:normal;">(760) 402-4953</div>
<svg class="abs" style="left:16.8px;top:454.1px" width="20.0" height="20.0" viewBox="-50 -50 100 100"><clipPath id="clyft26464"><circle r="50"/></clipPath><g clip-path="url(#clyft26464)"><rect x="-50" y="-50" width="100" height="100" fill="#fff"/><circle r="44" fill="none" stroke="#2f6fd6" stroke-width="10"/><path d="M-24 4 L-16 -16 H16 L24 4 V20 H-24Z" fill="#2f6fd6"/><rect x="-12" y="-10" width="24" height="9" fill="#fff"/><circle cx="-14" cy="10" r="4" fill="#fff"/><circle cx="14" cy="10" r="4" fill="#fff"/></g></svg>
<div class="t" style="left:46.3px;top:453.5px;font-size:8.6px;line-height:8.6px;color:#4a8fe5;font-weight:bold;">LYFT 1</div>
<div class="t" style="left:46.3px;top:465.6px;font-size:8.6px;line-height:8.6px;color:#4a8fe5;font-weight:normal;">987654321</div>
<div class="abs" style="left:297.2px;top:454.3px;width:54.3px;height:19.5px;border-radius:2px;background:linear-gradient(90deg,#c566d8,#e07b98)"></div><div class="t" style="left:324.3px;top:459.8px;font-size:8.6px;line-height:8.6px;color:#fff;font-weight:normal;transform:translateX(-50%);">Reassign</div>
<div class="abs" style="left:6.3px;top:490.6px;width:354.2px;height:144.9px;background:#fff;border:1px solid #e1e5ea;border-radius:2px"></div>
<div class="t" style="left:15.5px;top:501.7px;font-size:9.8px;line-height:9.8px;color:#4a8fe5;font-weight:bold;">ANDREWIN BOWMAN</div>
<div class="t" style="left:15.5px;top:515.1px;font-size:8.5px;line-height:8.5px;color:#4a8fe5;font-weight:normal;">CTC-4212203-A</div>
<div class="abs" style="left:304.1px;top:508.3px;width:47.2px;height:10px;border-radius:2.5px;background:#6b737b"></div><div class="t" style="left:327.7px;top:509.6px;font-size:7.9px;line-height:7.9px;color:#fff;font-weight:bold;transform:translateX(-50%);">CallTheCar</div><div class="abs" style="left:266.5px;top:508.3px;width:33.6px;height:10px;border-radius:2.5px;background:#4a90e2"></div><div class="t" style="left:283.3px;top:509.6px;font-size:7.9px;line-height:7.9px;color:#fff;font-weight:bold;transform:translateX(-50%);">Offered</div>
<div class="t" style="left:15.5px;top:530.7px;font-size:7.8px;line-height:7.8px;color:#4d535a;font-weight:bold;">219 E Eagle St Long Beach CA 90806</div>
<div class="t" style="left:15.5px;top:542.2px;font-size:8.4px;line-height:8.4px;color:#8b949c;font-weight:normal;">09/10/2021 0555</div>
<div class="t" style="left:192.5px;top:530.7px;font-size:7.8px;line-height:7.8px;color:#4d535a;font-weight:bold;">13063 Rosecrans Ave Santa Fe Springs</div>
<div class="t" style="left:192.5px;top:541.9px;font-size:7.8px;line-height:7.8px;color:#4d535a;font-weight:bold;">CA 90670</div>
<div class="t" style="left:192.5px;top:554.2px;font-size:8.4px;line-height:8.4px;color:#8b949c;font-weight:normal;">09/10/2021 0700</div>
<div class="t" style="left:15.5px;top:570.9px;font-size:8.4px;line-height:8.4px;color:#8b949c;font-weight:normal;">LIV</div>
<div class="t" style="left:104.0px;top:570.9px;font-size:8.4px;line-height:8.4px;color:#8b949c;font-weight:normal;">6 Miles</div>
<div class="t" style="left:192.5px;top:570.9px;font-size:8.4px;line-height:8.4px;color:#4a8fe5;font-weight:normal;">Fetch Now</div>
<svg class="abs" style="left:15.8px;top:582.4px" width="10" height="10" viewBox="0 0 10 10"><path d="M2.2 1 L3.8 1 L4.6 3.2 L3.5 4.2 Q4.4 6 6 6.6 L7 5.5 L9.1 6.3 V7.9 Q9 9.3 7.6 9.2 Q4.2 8.8 2.1 6.4 Q0.7 4.5 0.8 2.4 Q0.9 1.1 2.2 1Z" fill="none" stroke="#9aa2aa" stroke-width=".9"/></svg>
<div class="t" style="left:35.0px;top:583.1px;font-size:8.4px;line-height:8.4px;color:#8b949c;font-weight:normal;">(562) 310-1120</div>
<svg class="abs" style="left:16.8px;top:604.2px" width="20.0" height="20.0" viewBox="-50 -50 100 100"><clipPath id="cgen126614"><circle r="50"/></clipPath><g clip-path="url(#cgen126614)"><rect x="-50" y="-50" width="100" height="100" fill="#2a6e7a"/><ellipse cx="0" cy="52" rx="40" ry="24" fill="#a04020"/><rect x="-8" y="10" width="16" height="20" fill="#8a5a3c" opacity=".9"/><ellipse cx="0" cy="-5" rx="19" ry="24" fill="#8a5a3c"/><path d="M-20 -8 Q-24 -38 0 -36 Q24 -38 20 -8 Q18 -24 0 -26 Q-18 -24 -20 -8Z" fill="#2a1a10"/><path d="M-17 2 Q-16 20 0 22 Q16 20 17 2 Q12 12 0 12 Q-12 12 -17 2Z" fill="#2a1a10" opacity=".55"/><circle cx="-7" cy="-6" r="1.8" fill="#222" opacity=".7"/><circle cx="7" cy="-6" r="1.8" fill="#222" opacity=".7"/><path d="M-6 8 Q0 12 6 8" fill="none" stroke="#fff" stroke-width="2" opacity=".7"/></g></svg>
<div class="t" style="left:46.3px;top:603.6px;font-size:8.6px;line-height:8.6px;color:#4a8fe5;font-weight:bold;">Marisela Torres</div>
<div class="t" style="left:46.3px;top:615.7px;font-size:8.6px;line-height:8.6px;color:#4a8fe5;font-weight:normal;">9097750256</div>
<div class="abs" style="left:297.2px;top:604.4px;width:54.3px;height:19.5px;border-radius:2px;background:linear-gradient(90deg,#c566d8,#e07b98)"></div><div class="t" style="left:324.3px;top:609.9px;font-size:8.6px;line-height:8.6px;color:#fff;font-weight:normal;transform:translateX(-50%);">Reassign</div>
</div>
<div class="abs" style="left:1054.5px;top:153px;width:300px;height:486px;overflow:hidden">
<div class="abs" style="left:4.7px;top:40.3px;width:290.0px;height:144.9px;background:#fff;border:1px solid #e1e5ea;border-radius:2px"></div>
<div class="t" style="left:13.9px;top:51.4px;font-size:9.8px;line-height:9.8px;color:#4a8fe5;font-weight:bold;">RIGOBERTO RAMOS</div>
<div class="t" style="left:13.9px;top:64.8px;font-size:8.5px;line-height:8.5px;color:#4a8fe5;font-weight:normal;">H2112646884-A</div>
<div class="abs" style="left:225.6px;top:58.0px;width:59.9px;height:10px;border-radius:2.5px;background:#6b737b"></div><div class="t" style="left:255.5px;top:59.3px;font-size:7.9px;line-height:7.9px;color:#fff;font-weight:bold;transform:translateX(-50%);">Abc Insurance</div><div class="abs" style="left:188.0px;top:58.0px;width:33.6px;height:10px;border-radius:2.5px;background:#4a90e2"></div><div class="t" style="left:204.8px;top:59.3px;font-size:7.9px;line-height:7.9px;color:#fff;font-weight:bold;transform:translateX(-50%);">Offered</div>
<div class="t" style="left:13.9px;top:80.4px;font-size:7.8px;line-height:7.8px;color:#4d535a;font-weight:bold;">12000 MT VERNON AVE GRAND</div>
<div class="t" style="left:13.9px;top:91.6px;font-size:7.8px;line-height:7.8px;color:#4d535a;font-weight:bold;">TERRACE CA 92313</div>
<div class="t" style="left:13.9px;top:103.9px;font-size:8.4px;line-height:8.4px;color:#8b949c;font-weight:normal;">09/10/2021 0230</div>
<div class="t" style="left:13.9px;top:120.6px;font-size:8.4px;line-height:8.4px;color:#8b949c;font-weight:normal;">Stretcher</div>
<div class="t" style="left:102.4px;top:120.6px;font-size:8.4px;line-height:8.4px;color:#8b949c;font-weight:normal;">4 Miles</div>
<svg class="abs" style="left:14.2px;top:132.1px" width="10" height="10" viewBox="0 0 10 10"><path d="M2.2 1 L3.8 1 L4.6 3.2 L3.5 4.2 Q4.4 6 6 6.6 L7 5.5 L9.1 6.3 V7.9 Q9 9.3 7.6 9.2 Q4.2 8.8 2.1 6.4 Q0.7 4.5 0.8 2.4 Q0.9 1.1 2.2 1Z" fill="none" stroke="#9aa2aa" stroke-width=".9"/></svg>
<div class="t" style="left:33.4px;top:132.8px;font-size:8.4px;line-height:8.4px;color:#8b949c;font-weight:normal;">909-825-5221</div>
<svg class="abs" style="left:15.2px;top:153.9px" width="20.0" height="20.0" viewBox="-50 -50 100 100"><clipPath id="cgen425163"><circle r="50"/></clipPath><g clip-path="url(#cgen425163)"><rect x="-50" y="-50" width="100" height="100" fill="#7a4a3a"/><path d="M-28 -6 Q-32 -46 0 -46 Q32 -46 28 -6 L34 46 L-34 46 Z" fill="#3a2418"/><ellipse cx="0" cy="52" rx="40" ry="24" fill="#555"/><rect x="-8" y="10" width="16" height="20" fill="#c68a6a" opacity=".9"/><ellipse cx="0" cy="-5" rx="19" ry="24" fill="#c68a6a"/><path d="M-20 -2 Q-20 -34 2 -32 Q22 -32 20 -2 Q14 -22 -4 -24 Q-14 -20 -20 -2Z" fill="#3a2418"/><circle cx="-7" cy="-6" r="1.8" fill="#222" opacity=".7"/><circle cx="7" cy="-6" r="1.8" fill="#222" opacity=".7"/><path d="M-6 8 Q0 12 6 8" fill="none" stroke="#fff" stroke-width="2" opacity=".7"/></g></svg>
<div class="t" style="left:44.7px;top:153.3px;font-size:8.6px;line-height:8.6px;color:#4a8fe5;font-weight:bold;">Aida Jaramillo</div>
<div class="t" style="left:44.7px;top:165.4px;font-size:8.6px;line-height:8.6px;color:#4a8fe5;font-weight:normal;">9094708869</div>
<div class="abs" style="left:231.4px;top:154.1px;width:54.3px;height:19.5px;border-radius:2px;background:linear-gradient(90deg,#c566d8,#e07b98)"></div><div class="t" style="left:258.5px;top:159.6px;font-size:8.6px;line-height:8.6px;color:#fff;font-weight:normal;transform:translateX(-50%);">Reassign</div>
<div class="abs" style="left:4.7px;top:190.4px;width:290.0px;height:144.9px;background:#fff;border:1px solid #e1e5ea;border-radius:2px"></div>
<div class="t" style="left:13.9px;top:201.5px;font-size:9.8px;line-height:9.8px;color:#4a8fe5;font-weight:bold;">CARLOS QUINTANA</div>
<div class="t" style="left:13.9px;top:214.9px;font-size:8.5px;line-height:8.5px;color:#4a8fe5;font-weight:normal;">CTC-4212644-A</div>
<div class="abs" style="left:238.3px;top:208.1px;width:47.2px;height:10px;border-radius:2.5px;background:#6b737b"></div><div class="t" style="left:261.9px;top:209.4px;font-size:7.9px;line-height:7.9px;color:#fff;font-weight:bold;transform:translateX(-50%);">CallTheCar</div><div class="abs" style="left:200.7px;top:208.1px;width:33.6px;height:10px;border-radius:2.5px;background:#4a90e2"></div><div class="t" style="left:217.5px;top:209.4px;font-size:7.9px;line-height:7.9px;color:#fff;font-weight:bold;transform:translateX(-50%);">Offered</div>
<div class="t" style="left:13.9px;top:230.5px;font-size:7.8px;line-height:7.8px;color:#4d535a;font-weight:bold;">15291 Blue Butterfly Way Harbor City CA</div>
<div class="t" style="left:13.9px;top:241.7px;font-size:7.8px;line-height:7.8px;color:#4d535a;font-weight:bold;">90731</div>
<div class="t" style="left:13.9px;top:254.0px;font-size:8.4px;line-height:8.4px;color:#8b949c;font-weight:normal;">09/10/2021 0355</div>
<div class="t" style="left:13.9px;top:270.7px;font-size:8.4px;line-height:8.4px;color:#8b949c;font-weight:normal;">LIV</div>
<div class="t" style="left:102.4px;top:270.7px;font-size:8.4px;line-height:8.4px;color:#8b949c;font-weight:normal;">3 Miles</div>
<svg class="abs" style="left:14.2px;top:282.2px" width="10" height="10" viewBox="0 0 10 10"><path d="M2.2 1 L3.8 1 L4.6 3.2 L3.5 4.2 Q4.4 6 6 6.6 L7 5.5 L9.1 6.3 V7.9 Q9 9.3 7.6 9.2 Q4.2 8.8 2.1 6.4 Q0.7 4.5 0.8 2.4 Q0.9 1.1 2.2 1Z" fill="none" stroke="#9aa2aa" stroke-width=".9"/></svg>
<div class="t" style="left:33.4px;top:282.9px;font-size:8.4px;line-height:8.4px;color:#8b949c;font-weight:normal;">(310) 513-3863</div>
<svg class="abs" style="left:15.2px;top:304.0px" width="20.0" height="20.0" viewBox="-50 -50 100 100"><clipPath id="cgen325314"><circle r="50"/></clipPath><g clip-path="url(#cgen325314)"><rect x="-50" y="-50" width="100" height="100" fill="#555"/><path d="M-28 -6 Q-32 -46 0 -46 Q32 -46 28 -6 L34 46 L-34 46 Z" fill="#4a3020"/><ellipse cx="0" cy="52" rx="40" ry="24" fill="#666"/><rect x="-8" y="10" width="16" height="20" fill="#c49a80" opacity=".9"/><ellipse cx="0" cy="-5" rx="19" ry="24" fill="#c49a80"/><path d="M-20 -2 Q-20 -34 2 -32 Q22 -32 20 -2 Q14 -22 -4 -24 Q-14 -20 -20 -2Z" fill="#4a3020"/><circle cx="-7" cy="-6" r="1.8" fill="#222" opacity=".7"/><circle cx="7" cy="-6" r="1.8" fill="#222" opacity=".7"/><path d="M-6 8 Q0 12 6 8" fill="none" stroke="#fff" stroke-width="2" opacity=".7"/></g></svg>
<div class="t" style="left:44.7px;top:303.4px;font-size:8.6px;line-height:8.6px;color:#4a8fe5;font-weight:bold;">TERESA DE JESUS</div>
<div class="t" style="left:44.7px;top:315.5px;font-size:8.6px;line-height:8.6px;color:#4a8fe5;font-weight:normal;">562-250-9337</div>
<div class="abs" style="left:231.4px;top:304.2px;width:54.3px;height:19.5px;border-radius:2px;background:linear-gradient(90deg,#c566d8,#e07b98)"></div><div class="t" style="left:258.5px;top:309.7px;font-size:8.6px;line-height:8.6px;color:#fff;font-weight:normal;transform:translateX(-50%);">Reassign</div>
<div class="abs" style="left:4.7px;top:340.5px;width:290.0px;height:132.9px;background:#fff;border:1px solid #e1e5ea;border-radius:2px"></div>
<div class="t" style="left:13.9px;top:351.6px;font-size:9.8px;line-height:9.8px;color:#4a8fe5;font-weight:bold;">REGINALD SIMS</div>
<div class="t" style="left:13.9px;top:365.0px;font-size:8.5px;line-height:8.5px;color:#4a8fe5;font-weight:normal;">CTC-4212480-A</div>
<div class="abs" style="left:238.3px;top:358.2px;width:47.2px;height:10px;border-radius:2.5px;background:#6b737b"></div><div class="t" style="left:261.9px;top:359.5px;font-size:7.9px;line-height:7.9px;color:#fff;font-weight:bold;transform:translateX(-50%);">CallTheCar</div><div class="abs" style="left:200.7px;top:358.2px;width:33.6px;height:10px;border-radius:2.5px;background:#4a90e2"></div><div class="t" style="left:217.5px;top:359.5px;font-size:7.9px;line-height:7.9px;color:#fff;font-weight:bold;transform:translateX(-50%);">Offered</div>
<div class="t" style="left:13.9px;top:380.6px;font-size:7.8px;line-height:7.8px;color:#4d535a;font-weight:bold;">667 W 22nd St San Pedro CA 90731</div>
<div class="t" style="left:13.9px;top:392.1px;font-size:8.4px;line-height:8.4px;color:#8b949c;font-weight:normal;">09/10/2021 0455</div>
<div class="t" style="left:13.9px;top:408.8px;font-size:8.4px;line-height:8.4px;color:#8b949c;font-weight:normal;">LIV</div>
<div class="t" style="left:102.4px;top:408.8px;font-size:8.4px;line-height:8.4px;color:#8b949c;font-weight:normal;">5 Miles</div>
<svg class="abs" style="left:14.2px;top:420.3px" width="10" height="10" viewBox="0 0 10 10"><path d="M2.2 1 L3.8 1 L4.6 3.2 L3.5 4.2 Q4.4 6 6 6.6 L7 5.5 L9.1 6.3 V7.9 Q9 9.3 7.6 9.2 Q4.2 8.8 2.1 6.4 Q0.7 4.5 0.8 2.4 Q0.9 1.1 2.2 1Z" fill="none" stroke="#9aa2aa" stroke-width=".9"/></svg>
<div class="t" style="left:33.4px;top:421.0px;font-size:8.4px;line-height:8.4px;color:#8b949c;font-weight:normal;">(310) 981-6830</div>
<svg class="abs" style="left:15.2px;top:442.1px" width="20.0" height="20.0" viewBox="-50 -50 100 100"><clipPath id="cgen325452"><circle r="50"/></clipPath><g clip-path="url(#cgen325452)"><rect x="-50" y="-50" width="100" height="100" fill="#555"/><path d="M-28 -6 Q-32 -46 0 -46 Q32 -46 28 -6 L34 46 L-34 46 Z" fill="#4a3020"/><ellipse cx="0" cy="52" rx="40" ry="24" fill="#666"/><rect x="-8" y="10" width="16" height="20" fill="#c49a80" opacity=".9"/><ellipse cx="0" cy="-5" rx="19" ry="24" fill="#c49a80"/><path d="M-20 -2 Q-20 -34 2 -32 Q22 -32 20 -2 Q14 -22 -4 -24 Q-14 -20 -20 -2Z" fill="#4a3020"/><circle cx="-7" cy="-6" r="1.8" fill="#222" opacity=".7"/><circle cx="7" cy="-6" r="1.8" fill="#222" opacity=".7"/><path d="M-6 8 Q0 12 6 8" fill="none" stroke="#fff" stroke-width="2" opacity=".7"/></g></svg>
<div class="t" style="left:44.7px;top:441.5px;font-size:8.6px;line-height:8.6px;color:#4a8fe5;font-weight:bold;">TERESA DE JESUS</div>
<div class="t" style="left:44.7px;top:453.6px;font-size:8.6px;line-height:8.6px;color:#4a8fe5;font-weight:normal;">562-250-9337</div>
<div class="abs" style="left:231.4px;top:442.3px;width:54.3px;height:19.5px;border-radius:2px;background:linear-gradient(90deg,#c566d8,#e07b98)"></div><div class="t" style="left:258.5px;top:447.8px;font-size:8.6px;line-height:8.6px;color:#fff;font-weight:normal;transform:translateX(-50%);">Reassign</div>
</div>
<div class="abs" style="left:0.0px;top:840.0px;width:1240.0px;height:42.0px;background:#edeef1;"></div>
</div>
</div>
<div id="rw" class="win" style="left:2780px;top:168px;width:1241px;height:881.5px;border-radius:15px;background:#f4f5f7">
<div class="tb" style="height:39px"></div>
<div class="hdr" style="top:39px;height:51.5px"></div>
<div class="abs" style="left:91.0px;top:59.5px;width:15.0px;height:1.7px;background:#fff;"></div>
<div class="abs" style="left:91.0px;top:64.2px;width:15.0px;height:1.7px;background:#fff;"></div>
<div class="abs" style="left:91.0px;top:68.8px;width:15.0px;height:1.7px;background:#fff;"></div>
<svg class="abs" style="left:120px;top:59.5px" width="11" height="11" viewBox="0 0 11 11"><circle cx="5.5" cy="5.5" r="4.6" fill="none" stroke="#fff" stroke-width="1.1"/><path d="M5.5 2.8 V5.8 L7.3 6.9" fill="none" stroke="#fff" stroke-width="1"/></svg>
<div class="t" style="left:134.0px;top:60.1px;font-size:10.5px;line-height:10.5px;color:#fff;font-weight:bold;">09/10/2021 - 04:56:24</div>
<svg class="abs" style="left:996px;top:56px" width="16" height="17" viewBox="0 0 16 17"><path d="M8 2.5 Q12 3 12 7.5 V10.5 L13.2 12.3 H2.8 L4 10.5 V7.5 Q4 3 8 2.5Z" fill="none" stroke="#c9cdd3" stroke-width="1.1"/><path d="M6.5 14 Q8 15.6 9.5 14" fill="none" stroke="#c9cdd3" stroke-width="1"/></svg>
<div class="abs" style="left:1000.8px;top:50.0px;width:14.5px;height:13.0px;background:#ea4a63;border-radius:7px"></div>
<div class="t" style="left:1008.0px;top:53.2px;font-size:7.5px;line-height:7.5px;color:#fff;font-weight:bold;transform:translateX(-50%);">92</div>
<svg class="abs" style="left:1031.5px;top:46.80000000000001px" width="37" height="37" viewBox="0 0 46 46"><circle cx="23" cy="23" r="22.5" fill="#fff" stroke="#eee" stroke-width="1"/><path d="M23 12 Q14 2 6 12 Q1 22 12 32 L23 42 L34 32 Q45 22 40 12 Q32 2 23 12Z" fill="none" stroke="#e64a5a" stroke-width="1.5"/><path d="M8 26 Q16 38 26 40 Q36 36 40 20" fill="none" stroke="#e22838" stroke-width="3.5"/><path d="M12 15 H34 M11 22 H35 M15 29 H30" stroke="#555" stroke-width="1" stroke-dasharray="2 1"/><circle cx="26" cy="40" r="3" fill="#e22838"/></svg>
<div class="t" style="left:1076.7px;top:60.2px;font-size:10.43px;line-height:10.43px;color:#d3d6db;font-weight:normal;">Helping Hands Transportation</div>
<svg class="abs" style="left:1220px;top:61px" width="8" height="7" viewBox="0 0 8 7"><path d="M1.3 2 L4 4.7 L6.7 2" fill="none" stroke="#d3d6db" stroke-width="1.1"/></svg>
<div class="abs" style="left:97.0px;top:108.7px;width:172.0px;height:27.7px;background:#fff;border:1px solid #d6dade;border-radius:2px"></div>
<div class="t" style="left:111.0px;top:118.8px;font-size:10.4px;line-height:10.4px;color:#555;font-weight:normal;">Regina O</div>
<svg class="abs" style="left:255px;top:118px" width="10" height="8" viewBox="0 0 10 8"><path d="M1.5 2 L5 5.5 L8.5 2" fill="none" stroke="#444" stroke-width="1.6"/></svg>
<div class="abs" style="left:288.0px;top:108.7px;width:141.0px;height:27.7px;background:#fff;border:1px solid #d6dade;border-radius:2px 0 0 2px"></div>
<div class="t" style="left:299.0px;top:118.8px;font-size:10.4px;line-height:10.4px;color:#555;font-weight:normal;">09/10/2021</div>
<div class="abs" style="left:428.5px;top:108.7px;width:31.5px;height:27.7px;background:#4a7fd6;border-radius:0 2px 2px 0"></div>
<svg class="abs" style="left:438.5px;top:116.5px" width="12" height="12" viewBox="0 0 12 12"><rect x="1.5" y="2" width="9" height="8.5" rx="1" fill="none" stroke="#fff" stroke-width="1.2"/><path d="M1.5 4.5 H10.5 M3.8 1 V3 M8.2 1 V3 M4 7 L5.5 8.3 L8 5.8" fill="none" stroke="#fff" stroke-width="1.1"/></svg>
<div class="abs" style="left:479.0px;top:108.7px;width:135.0px;height:27.7px;background:#fff;border:1px solid #d6dade;border-radius:2px 0 0 2px"></div>
<div class="t" style="left:490.0px;top:118.8px;font-size:10.4px;line-height:10.4px;color:#a3a9af;font-weight:normal;">Search</div>
<div class="abs" style="left:613.0px;top:108.7px;width:38.5px;height:27.7px;background:#4a7fd6;border-radius:0 2px 2px 0"></div>
<svg class="abs" style="left:626px;top:116.5px" width="12" height="12" viewBox="0 0 12 12"><circle cx="5" cy="5" r="3.6" fill="none" stroke="#fff" stroke-width="1.7"/><path d="M7.7 7.7 L10.8 10.8" stroke="#fff" stroke-width="1.9"/></svg>
<div class="abs" style="left:671.1px;top:109.5px;width:75.2px;height:33.5px;background:#52c5e3;box-shadow:1px 2px 3px rgba(0,0,0,.18)"></div>
<div class="t" style="left:708.7px;top:113.1px;font-size:13.6px;line-height:13.6px;color:#fff;font-weight:bold;transform:translateX(-50%);">1,018.41</div>
<div class="t" style="left:708.7px;top:129.8px;font-size:9.4px;line-height:9.4px;color:#fff;font-weight:bold;transform:translateX(-50%);">Total Miles</div>
<div class="abs" style="left:766.8px;top:109.5px;width:75.1px;height:33.5px;background:#1fba95;box-shadow:1px 2px 3px rgba(0,0,0,.18)"></div>
<div class="t" style="left:804.4px;top:113.1px;font-size:13.6px;line-height:13.6px;color:#fff;font-weight:bold;transform:translateX(-50%);">115.41</div>
<div class="t" style="left:804.4px;top:129.8px;font-size:9.4px;line-height:9.4px;color:#fff;font-weight:bold;transform:translateX(-50%);">Loaded Miles</div>
<div class="abs" style="left:862.4px;top:109.5px;width:74.9px;height:33.5px;background:#ef526c;box-shadow:1px 2px 3px rgba(0,0,0,.18)"></div>
<div class="t" style="left:899.9px;top:113.1px;font-size:13.6px;line-height:13.6px;color:#fff;font-weight:bold;transform:translateX(-50%);">903.00</div>
<div class="t" style="left:899.9px;top:129.8px;font-size:9.4px;line-height:9.4px;color:#fff;font-weight:bold;transform:translateX(-50%);">Dead Miles</div>
<div class="abs" style="left:957.9px;top:109.5px;width:75.3px;height:33.5px;background:#f4f5f7;box-shadow:1px 2px 3px rgba(0,0,0,.18);border:1px solid #e2e4e7"></div>
<div class="t" style="left:995.6px;top:113.1px;font-size:13.6px;line-height:13.6px;color:#2a2f35;font-weight:bold;transform:translateX(-50%);">$ 0.00</div>
<div class="t" style="left:995.6px;top:129.8px;font-size:9.4px;line-height:9.4px;color:#2a2f35;font-weight:bold;transform:translateX(-50%);">Total Fare</div>
<div class="abs" style="left:97.0px;top:144.0px;width:1128.0px;height:336.8px;background:#fff;border-radius:3px"></div>
<div class="abs" style="left:114.4px;top:162.0px;width:536.6px;height:37.4px;background:#f1f3f5;border-bottom:1px solid #e3e6e9"></div>
<div class="abs" style="left:114.40000000000009px;top:162px;width:536.6px;height:299.6px;overflow:hidden">
<div class="t" style="left:10.4px;top:14.7px;font-size:10.4px;line-height:10.4px;color:#5b6168;font-weight:bold;">NO.</div>
<div class="t" style="left:49.3px;top:14.7px;font-size:10.4px;line-height:10.4px;color:#5b6168;font-weight:bold;">TRIP ID (14)</div>
<div class="t" style="left:166.0px;top:14.7px;font-size:10.4px;line-height:10.4px;color:#5b6168;font-weight:bold;">ROUTE</div>
<div class="t" style="left:230.6px;top:14.7px;font-size:10.4px;line-height:10.4px;color:#5b6168;font-weight:bold;">NAME</div>
<div class="t" style="left:383.6px;top:14.7px;font-size:10.4px;line-height:10.4px;color:#5b6168;font-weight:bold;">STATUS</div>
<div class="t" style="left:444.6px;top:14.7px;font-size:10.4px;line-height:10.4px;color:#5b6168;font-weight:bold;">MILAGE</div>
<div class="t" style="left:505.6px;top:14.7px;font-size:10.4px;line-height:10.4px;color:#5b6168;font-weight:bold;">PICKUP</div>
<div class="t" style="left:10.4px;top:51.7px;font-size:10.45px;line-height:10.45px;color:#5d646b;font-weight:normal;">1</div>
<div class="t" style="left:49.3px;top:51.7px;font-size:10.45px;line-height:10.45px;color:#5d646b;font-weight:normal;">01-22875-A (LEG-A)</div>
<div class="abs" style="left:165.8px;top:48.8px;width:40.5px;height:19.3px;background:#4cbfdf;border-radius:1.5px"></div>
<div class="t" style="left:186.1px;top:54.5px;font-size:8.6px;line-height:8.6px;color:#fff;font-weight:normal;transform:translateX(-50%);">Route</div>
<div class="t" style="left:230.6px;top:51.7px;font-size:10.45px;line-height:10.45px;color:#5d646b;font-weight:normal;">VIGIL, ISAIAH G</div>
<div class="t" style="left:383.6px;top:51.7px;font-size:10.45px;line-height:10.45px;color:#5d646b;font-weight:normal;">offered</div>
<div class="t" style="left:444.6px;top:51.7px;font-size:10.45px;line-height:10.45px;color:#5d646b;font-weight:normal;">11.31 mi</div>
<div class="t" style="left:505.6px;top:51.7px;font-size:10.45px;line-height:10.45px;color:#5d646b;font-weight:normal;">0845</div>
<div class="abs" style="left:0.0px;top:79.0px;width:536.6px;height:1.0px;background:#e6e9ec;"></div>
<div class="t" style="left:10.4px;top:92.6px;font-size:10.45px;line-height:10.45px;color:#5d646b;font-weight:normal;">2</div>
<div class="t" style="left:49.3px;top:92.6px;font-size:10.45px;line-height:10.45px;color:#5d646b;font-weight:normal;">01-22825-A (LEG-A)</div>
<div class="abs" style="left:165.8px;top:89.8px;width:40.5px;height:19.3px;background:#4cbfdf;border-radius:1.5px"></div>
<div class="t" style="left:186.1px;top:95.5px;font-size:8.6px;line-height:8.6px;color:#fff;font-weight:normal;transform:translateX(-50%);">Route</div>
<div class="t" style="left:230.6px;top:92.6px;font-size:10.45px;line-height:10.45px;color:#5d646b;font-weight:normal;">AYERS, CRAIG S</div>
<div class="t" style="left:383.6px;top:92.6px;font-size:10.45px;line-height:10.45px;color:#5d646b;font-weight:normal;">offered</div>
<div class="t" style="left:444.6px;top:92.6px;font-size:10.45px;line-height:10.45px;color:#5d646b;font-weight:normal;">11.59 mi</div>
<div class="t" style="left:505.6px;top:92.6px;font-size:10.45px;line-height:10.45px;color:#5d646b;font-weight:normal;">1015</div>
<div class="abs" style="left:0.0px;top:119.9px;width:536.6px;height:1.0px;background:#e6e9ec;"></div>
<div class="t" style="left:10.4px;top:133.6px;font-size:10.45px;line-height:10.45px;color:#5d646b;font-weight:normal;">3</div>
<div class="t" style="left:49.3px;top:133.6px;font-size:10.45px;line-height:10.45px;color:#5d646b;font-weight:normal;">01-22875-B (LEG-B)</div>
<div class="abs" style="left:165.8px;top:130.7px;width:40.5px;height:19.3px;background:#4cbfdf;border-radius:1.5px"></div>
<div class="t" style="left:186.1px;top:136.4px;font-size:8.6px;line-height:8.6px;color:#fff;font-weight:normal;transform:translateX(-50%);">Route</div>
<div class="t" style="left:230.6px;top:133.6px;font-size:10.45px;line-height:10.45px;color:#5d646b;font-weight:normal;">VIGIL, ISAIAH G</div>
<div class="t" style="left:383.6px;top:133.6px;font-size:10.45px;line-height:10.45px;color:#5d646b;font-weight:normal;">offered</div>
<div class="t" style="left:444.6px;top:133.6px;font-size:10.45px;line-height:10.45px;color:#5d646b;font-weight:normal;">11.3 mi</div>
<div class="t" style="left:505.6px;top:133.6px;font-size:10.45px;line-height:10.45px;color:#5d646b;font-weight:normal;">1020</div>
<div class="abs" style="left:0.0px;top:160.9px;width:536.6px;height:1.0px;background:#e6e9ec;"></div>
<div class="t" style="left:10.4px;top:174.5px;font-size:10.45px;line-height:10.45px;color:#5d646b;font-weight:normal;">4</div>
<div class="t" style="left:49.3px;top:174.5px;font-size:10.45px;line-height:10.45px;color:#5d646b;font-weight:normal;">01-22786-A (LEG-A)</div>
<div class="abs" style="left:165.8px;top:171.7px;width:40.5px;height:19.3px;background:#4cbfdf;border-radius:1.5px"></div>
<div class="t" style="left:186.1px;top:177.4px;font-size:8.6px;line-height:8.6px;color:#fff;font-weight:normal;transform:translateX(-50%);">Route</div>
<div class="t" style="left:230.6px;top:174.5px;font-size:10.45px;line-height:10.45px;color:#5d646b;font-weight:normal;">GILCREASE, SAMANTHA L</div>
<div class="t" style="left:383.6px;top:174.5px;font-size:10.45px;line-height:10.45px;color:#5d646b;font-weight:normal;">offered</div>
<div class="t" style="left:444.6px;top:174.5px;font-size:10.45px;line-height:10.45px;color:#5d646b;font-weight:normal;">2.63 mi</div>
<div class="t" style="left:505.6px;top:174.5px;font-size:10.45px;line-height:10.45px;color:#5d646b;font-weight:normal;">1045</div>
<div class="abs" style="left:0.0px;top:201.9px;width:536.6px;height:1.0px;background:#e6e9ec;"></div>
<div class="t" style="left:10.4px;top:215.5px;font-size:10.45px;line-height:10.45px;color:#5d646b;font-weight:normal;">5</div>
<div class="t" style="left:49.3px;top:215.5px;font-size:10.45px;line-height:10.45px;color:#5d646b;font-weight:normal;">01-74761-A (LEG-A)</div>
<div class="abs" style="left:165.8px;top:212.6px;width:40.5px;height:19.3px;background:#4cbfdf;border-radius:1.5px"></div>
<div class="t" style="left:186.1px;top:218.3px;font-size:8.6px;line-height:8.6px;color:#fff;font-weight:normal;transform:translateX(-50%);">Route</div>
<div class="t" style="left:230.6px;top:215.5px;font-size:10.45px;line-height:10.45px;color:#5d646b;font-weight:normal;">LORENZ, MINNIE M</div>
<div class="t" style="left:383.6px;top:215.5px;font-size:10.45px;line-height:10.45px;color:#5d646b;font-weight:normal;">offered</div>
<div class="t" style="left:444.6px;top:215.5px;font-size:10.45px;line-height:10.45px;color:#5d646b;font-weight:normal;">5.36 mi</div>
<div class="t" style="left:505.6px;top:215.5px;font-size:10.45px;line-height:10.45px;color:#5d646b;font-weight:normal;">1130</div>
<div class="abs" style="left:0.0px;top:242.8px;width:536.6px;height:1.0px;background:#e6e9ec;"></div>
<div class="t" style="left:10.4px;top:256.4px;font-size:10.45px;line-height:10.45px;color:#5d646b;font-weight:normal;">6</div>
<div class="t" style="left:49.3px;top:256.4px;font-size:10.45px;line-height:10.45px;color:#5d646b;font-weight:normal;">01-62231-A (LEG-A)</div>
<div class="abs" style="left:165.8px;top:253.5px;width:40.5px;height:19.3px;background:#4cbfdf;border-radius:1.5px"></div>
<div class="t" style="left:186.1px;top:259.3px;font-size:8.6px;line-height:8.6px;color:#fff;font-weight:normal;transform:translateX(-50%);">Route</div>
<div class="t" style="left:230.6px;top:256.4px;font-size:10.45px;line-height:10.45px;color:#5d646b;font-weight:normal;">PUENTE, ANDRES</div>
<div class="t" style="left:383.6px;top:256.4px;font-size:10.45px;line-height:10.45px;color:#5d646b;font-weight:normal;">offered</div>
<div class="t" style="left:444.6px;top:256.4px;font-size:10.45px;line-height:10.45px;color:#5d646b;font-weight:normal;">25.05 mi</div>
<div class="t" style="left:505.6px;top:256.4px;font-size:10.45px;line-height:10.45px;color:#5d646b;font-weight:normal;">1145</div>
<div class="abs" style="left:0.0px;top:283.8px;width:536.6px;height:1.0px;background:#e6e9ec;"></div>
<div class="t" style="left:10.4px;top:297.4px;font-size:10.45px;line-height:10.45px;color:#5d646b;font-weight:normal;">7</div>
<div class="t" style="left:49.3px;top:297.4px;font-size:10.45px;line-height:10.45px;color:#5d646b;font-weight:normal;">01-66652-B (LEG-B)</div>
<div class="abs" style="left:165.8px;top:294.5px;width:40.5px;height:19.3px;background:#4cbfdf;border-radius:1.5px"></div>
<div class="t" style="left:186.1px;top:300.2px;font-size:8.6px;line-height:8.6px;color:#fff;font-weight:normal;transform:translateX(-50%);">Route</div>
<div class="t" style="left:230.6px;top:297.4px;font-size:10.45px;line-height:10.45px;color:#5d646b;font-weight:normal;">MARQUEZ, PAUL E</div>
<div class="t" style="left:383.6px;top:297.4px;font-size:10.45px;line-height:10.45px;color:#5d646b;font-weight:normal;">offered</div>
<div class="t" style="left:444.6px;top:297.4px;font-size:10.45px;line-height:10.45px;color:#5d646b;font-weight:normal;">4.27 mi</div>
<div class="t" style="left:505.6px;top:297.4px;font-size:10.45px;line-height:10.45px;color:#5d646b;font-weight:normal;">1215</div>
<div class="abs" style="left:0.0px;top:324.7px;width:536.6px;height:1.0px;background:#e6e9ec;"></div>
</div>
<svg class="abs" style="left:670px;top:162px" width="537" height="299.6" viewBox="0 0 537 299.6" font-family="Liberation Sans, sans-serif">
<rect width="537" height="299.6" fill="#e6e6e3"/>
<polygon points="150,0 400,0 420,150 430,300 150,300" fill="#ececea"/>
<path d="M381 0 H537 V300 H426 L416 150 L400 40Z" fill="#c5e3c4"/>
<path d="M400 40 L430 80 L440 120 L445 200 L470 210" fill="none" stroke="#4caf50" stroke-width="1" stroke-dasharray="2 2"/>
<ellipse cx="500" cy="180" rx="35" ry="110" fill="#b3d6b1" opacity=".5"/>
<path d="M78 83 L93 83 L111 111 L148 118 L156 148 L111 167 L93 170 L78 156Z" fill="#c5e3c4"/>
<path d="M102 55 H118 V68 H102Z M112 98 H124 V103 H112Z" fill="#c5e3c4"/>
<path d="M74 56 H141 L150 80 L160 150 L150 200 L140 220 L67 218 L59 148Z" fill="none" stroke="#fff" stroke-width="1.6"/>
<clipPath id="rurb"><polygon points="120,20 400,10 410,120 400,300 60,300 60,230 140,180 160,60"/></clipPath>
<g clip-path="url(#rurb)" stroke="#fff" stroke-width="1.3" fill="none" opacity=".85">
<path d="M57.9 32.7 V262.2"/>
<path d="M76.8 37.5 V243.9"/>
<path d="M88.1 50.2 V255.6"/>
<path d="M105.9 59.7 V268.2"/>
<path d="M126.7 28.6 V278.3"/>
<path d="M137.2 38.1 V292.1"/>
<path d="M156.2 44.5 V280.3"/>
<path d="M168.5 45.5 V275.5"/>
<path d="M186.4 1.9 V291.9"/>
<path d="M203.8 43.1 V292.7"/>
<path d="M221.7 55.3 V263.7"/>
<path d="M238.4 26.7 V296.1"/>
<path d="M255.0 5.8 V248.2"/>
<path d="M265.7 57.9 V266.2"/>
<path d="M285.0 18.1 V270.4"/>
<path d="M299.1 21.1 V275.1"/>
<path d="M316.7 54.3 V280.9"/>
<path d="M335.4 51.4 V299.5"/>
<path d="M349.4 9.8 V291.6"/>
<path d="M367.7 54.3 V274.1"/>
<path d="M381.7 12.7 V289.9"/>
<path d="M396.6 17.1 V243.8"/>
<path d="M414.8 59.4 V245.3"/>
<path d="M430.4 24.6 V249.0"/>
<path d="M442.4 46.1 V292.4"/>
<path d="M456.4 36.9 V242.7"/>
<path d="M477.7 19.9 V292.9"/>
<path d="M495.8 30.3 V299.9"/>
<path d="M506.5 4.6 V276.0"/>
<path d="M520.3 11.8 V264.5"/>
<path d="M540.9 9.4 V242.5"/>
<path d="M558.9 18.8 V297.5"/>
<path d="M575.2 22.7 V267.6"/>
<path d="M588.2 38.6 V275.7"/>
<path d="M604.5 37.2 V296.4"/>
<path d="M620.1 25.9 V283.2"/>
<path d="M633.9 18.1 V298.7"/>
<path d="M652.2 32.9 V240.7"/>
<path d="M667.3 34.8 V241.2"/>
<path d="M684.9 37.9 V243.6"/>
<path d="M97.3 6.0 H387.5"/>
<path d="M116.6 19.8 H391.7"/>
<path d="M64.8 33.2 H387.3"/>
<path d="M80.1 56.7 H371.9"/>
<path d="M85.6 69.7 H365.5"/>
<path d="M89.5 83.5 H381.7"/>
<path d="M90.2 99.4 H394.1"/>
<path d="M105.5 113.2 H391.5"/>
<path d="M77.8 131.5 H396.3"/>
<path d="M75.0 146.9 H370.5"/>
<path d="M68.1 166.6 H362.5"/>
<path d="M126.7 179.7 H370.7"/>
<path d="M73.5 199.8 H363.6"/>
<path d="M130.8 214.2 H371.6"/>
<path d="M69.7 226.8 H377.1"/>
<path d="M124.5 242.5 H398.7"/>
<path d="M82.3 258.5 H396.5"/>
<path d="M124.5 278.1 H364.2"/>
<path d="M83.4 290.0 H395.6"/>
<path d="M87.7 307.2 H369.2"/>
</g>
<g stroke="#fff" stroke-width="1.6" fill="none"><path d="M0 150 H60 M20 300 L60 240 M60 200 L0 190"/></g>
<path d="M290 0 L270 25 L240 40 L215 100 L195 140 L185 180 L200 220 L210 260 L205 300" fill="none" stroke="#a9d0f5" stroke-width="2.4"/>
<path d="M0.0 237.0 L63.0 224.0 L111.0 193.0 L163.0 165.0 L226.0 166.0 L251.0 165.0 L316.0 181.0 L397.0 220.0 L438.0 222.0 L537.0 198.0" fill="none" stroke="#e8bf53" stroke-width="3.5999999999999996" stroke-linejoin="round"/><path d="M0.0 237.0 L63.0 224.0 L111.0 193.0 L163.0 165.0 L226.0 166.0 L251.0 165.0 L316.0 181.0 L397.0 220.0 L438.0 222.0 L537.0 198.0" fill="none" stroke="#f8d66f" stroke-width="2.4" stroke-linejoin="round"/>
<path d="M148.0 300.0 L159.0 241.0 L163.0 165.0 L167.0 122.0 L193.0 93.0 L207.0 56.0 L211.0 0.0" fill="none" stroke="#e8bf53" stroke-width="3.5999999999999996" stroke-linejoin="round"/><path d="M148.0 300.0 L159.0 241.0 L163.0 165.0 L167.0 122.0 L193.0 93.0 L207.0 56.0 L211.0 0.0" fill="none" stroke="#f8d66f" stroke-width="2.4" stroke-linejoin="round"/>
<path d="M152.0 272.0 L237.0 272.0" fill="none" stroke="#e8bf53" stroke-width="3.5999999999999996" stroke-linejoin="round"/><path d="M152.0 272.0 L237.0 272.0" fill="none" stroke="#f8d66f" stroke-width="2.4" stroke-linejoin="round"/>
<path d="M226.0 300.0 L237.0 167.0 L252.0 111.0 L275.0 133.0 L291.0 72.0 L305.0 0.0" fill="none" stroke="#e8bf53" stroke-width="3.5999999999999996" stroke-linejoin="round"/><path d="M226.0 300.0 L237.0 167.0 L252.0 111.0 L275.0 133.0 L291.0 72.0 L305.0 0.0" fill="none" stroke="#f8d66f" stroke-width="2.4" stroke-linejoin="round"/>
<path d="M222.0 296.0 L222.0 185.0 L230.0 120.0 L252.0 60.0 L275.0 29.0" fill="none" stroke="#e8bf53" stroke-width="3.5999999999999996" stroke-linejoin="round"/><path d="M222.0 296.0 L222.0 185.0 L230.0 120.0 L252.0 60.0 L275.0 29.0" fill="none" stroke="#f8d66f" stroke-width="2.4" stroke-linejoin="round"/>
<path d="M196.0 66.0 L270.0 68.0 L356.0 75.0" fill="none" stroke="#e8bf53" stroke-width="3.5999999999999996" stroke-linejoin="round"/><path d="M196.0 66.0 L270.0 68.0 L356.0 75.0" fill="none" stroke="#f8d66f" stroke-width="2.4" stroke-linejoin="round"/>
<path d="M275.0 29.0 L340.0 39.0 L377.0 40.0 L389.0 51.0 L389.0 214.0 L401.0 222.0" fill="none" stroke="#e8bf53" stroke-width="3.5999999999999996" stroke-linejoin="round"/><path d="M275.0 29.0 L340.0 39.0 L377.0 40.0 L389.0 51.0 L389.0 214.0 L401.0 222.0" fill="none" stroke="#f8d66f" stroke-width="2.4" stroke-linejoin="round"/>
<path d="M200.0 0.0 L215.0 30.0 L245.0 50.0" fill="none" stroke="#e8bf53" stroke-width="3.5999999999999996" stroke-linejoin="round"/><path d="M200.0 0.0 L215.0 30.0 L245.0 50.0" fill="none" stroke="#f8d66f" stroke-width="2.4" stroke-linejoin="round"/>
<g transform="translate(227,43) scale(.78) translate(-227,-43)"><rect x="214.9" y="36.5" width="24.2" height="13" rx="6.5" fill="#fff" stroke="#777" stroke-width="1"/><text x="227.0" y="46.6" font-size="9" fill="#444" text-anchor="middle">528</text></g>
<g transform="translate(237,67) scale(.78) translate(-237,-67)"><rect x="224.9" y="60.5" width="24.2" height="13" rx="6.5" fill="#fff" stroke="#777" stroke-width="1"/><text x="237.0" y="70.6" font-size="9" fill="#444" text-anchor="middle">423</text></g>
<g transform="translate(168.5,118.5) scale(.78) translate(-168.5,-118.5)"><rect x="159.1" y="112.0" width="18.8" height="13" rx="6.5" fill="#fff" stroke="#777" stroke-width="1"/><text x="168.5" y="122.1" font-size="9" fill="#444" text-anchor="middle">45</text></g>
<g transform="translate(226,167) scale(.78) translate(-226,-167)"><path d="M218 160 Q226 157 234 160 Q235 171 226 176 Q217 171 218 160Z" fill="#3a6fc4" stroke="#fff" stroke-width="1"/><path d="M218 160 Q226 157 234 160 L234.2 163 H217.8Z" fill="#d33"/><text x="226.0" y="171.5" font-size="8.5" font-weight="bold" fill="#fff" text-anchor="middle">40</text></g>
<g transform="translate(241,177) scale(.78) translate(-241,-177)"><path d="M233 170 Q241 167 249 170 Q250 181 241 186 Q232 181 233 170Z" fill="#3a6fc4" stroke="#fff" stroke-width="1"/><path d="M233 170 Q241 167 249 170 L249.2 173 H232.8Z" fill="#d33"/><text x="241.0" y="181.5" font-size="8.5" font-weight="bold" fill="#fff" text-anchor="middle">25</text></g>
<g transform="translate(94,207) scale(.78) translate(-94,-207)"><path d="M86 200 Q94 197 102 200 Q103 211 94 216 Q85 211 86 200Z" fill="#3a6fc4" stroke="#fff" stroke-width="1"/><path d="M86 200 Q94 197 102 200 L102.2 203 H85.8Z" fill="#d33"/><text x="94.0" y="211.5" font-size="8.5" font-weight="bold" fill="#fff" text-anchor="middle">40</text></g>
<g transform="translate(156,221) scale(.78) translate(-156,-221)"><rect x="146.6" y="214.5" width="18.8" height="13" rx="6.5" fill="#fff" stroke="#777" stroke-width="1"/><text x="156.0" y="224.6" font-size="9" fill="#444" text-anchor="middle">45</text></g>
<g transform="translate(201,230) scale(.78) translate(-201,-230)"><rect x="188.9" y="223.5" width="24.2" height="13" rx="6.5" fill="#fff" stroke="#777" stroke-width="1"/><text x="201.0" y="233.6" font-size="9" fill="#444" text-anchor="middle">314</text></g>
<g transform="translate(181.5,271.5) scale(.78) translate(-181.5,-271.5)"><rect x="169.4" y="265.0" width="24.2" height="13" rx="6.5" fill="#fff" stroke="#777" stroke-width="1"/><text x="181.5" y="275.1" font-size="9" fill="#444" text-anchor="middle">500</text></g>
<g transform="translate(305,8) scale(.78) translate(-305,-8)"><path d="M297 1 Q305 -2 313 1 Q314 12 305 17 Q296 12 297 1Z" fill="#3a6fc4" stroke="#fff" stroke-width="1"/><path d="M297 1 Q305 -2 313 1 L313.2 4 H296.8Z" fill="#d33"/><text x="305.0" y="12.5" font-size="8.5" font-weight="bold" fill="#fff" text-anchor="middle">25</text></g>
<g transform="translate(348.5,38) scale(.78) translate(-348.5,-38)"><rect x="336.4" y="31.5" width="24.2" height="13" rx="6.5" fill="#fff" stroke="#777" stroke-width="1"/><text x="348.5" y="41.6" font-size="9" fill="#444" text-anchor="middle">556</text></g>
<g transform="translate(387,129) scale(.78) translate(-387,-129)"><rect x="374.9" y="122.5" width="24.2" height="13" rx="6.5" fill="#fff" stroke="#777" stroke-width="1"/><text x="387.0" y="132.6" font-size="9" fill="#444" text-anchor="middle">556</text></g>
<g transform="translate(493,14) scale(.78) translate(-493,-14)"><rect x="480.9" y="7.5" width="24.2" height="13" rx="6.5" fill="#fff" stroke="#777" stroke-width="1"/><text x="493.0" y="17.6" font-size="9" fill="#444" text-anchor="middle">165</text></g>
<g transform="translate(497,52) scale(.78) translate(-497,-52)"><rect x="484.9" y="45.5" width="24.2" height="13" rx="6.5" fill="#fff" stroke="#777" stroke-width="1"/><text x="497.0" y="55.6" font-size="9" fill="#444" text-anchor="middle">536</text></g>
<g transform="translate(403,223) scale(.78) translate(-403,-223)"><path d="M395 216 Q403 213 411 216 Q412 227 403 232 Q394 227 395 216Z" fill="#3a6fc4" stroke="#fff" stroke-width="1"/><path d="M395 216 Q403 213 411 216 L411.2 219 H394.8Z" fill="#d33"/><text x="403.0" y="227.5" font-size="8.5" font-weight="bold" fill="#fff" text-anchor="middle">40</text></g>
<text x="160.0" y="49.0" font-size="7.5" fill="#7c8aa6" text-anchor="middle" font-weight="bold" stroke="#f2f2f0" stroke-width="2.5" paint-order="stroke">PARADISE</text>
<text x="160.0" y="56.0" font-size="7.5" fill="#7c8aa6" text-anchor="middle" font-weight="bold" stroke="#f2f2f0" stroke-width="2.5" paint-order="stroke">HILLS CIVIC</text>
<text x="252.0" y="60.0" font-size="9" fill="#555" text-anchor="middle" font-weight="normal" stroke="#f2f2f0" stroke-width="2.5" paint-order="stroke">North Valley</text>
<text x="228.5" y="91.0" font-size="9" fill="#555" text-anchor="middle" font-weight="normal" stroke="#f2f2f0" stroke-width="2.5" paint-order="stroke">Los Ranchos De</text>
<text x="228.5" y="99.5" font-size="9" fill="#555" text-anchor="middle" font-weight="normal" stroke="#f2f2f0" stroke-width="2.5" paint-order="stroke">Albuquerque</text>
<text x="122.0" y="121.0" font-size="9.5" fill="#2f9e58" text-anchor="middle" font-weight="normal" stroke="#f2f2f0" stroke-width="2.5" paint-order="stroke">Petroglyph</text>
<text x="122.0" y="131.0" font-size="9.5" fill="#2f9e58" text-anchor="middle" font-weight="normal" stroke="#f2f2f0" stroke-width="2.5" paint-order="stroke">National</text>
<text x="122.0" y="141.5" font-size="9.5" fill="#2f9e58" text-anchor="middle" font-weight="normal" stroke="#f2f2f0" stroke-width="2.5" paint-order="stroke">Monument</text>
<text x="144.0" y="191.0" font-size="7.5" fill="#7c8aa6" text-anchor="middle" font-weight="bold" stroke="#f2f2f0" stroke-width="2.5" paint-order="stroke">LOS VOLCANES</text>
<text x="196.0" y="182.5" font-size="7.5" fill="#7c8aa6" text-anchor="middle" font-weight="bold" stroke="#f2f2f0" stroke-width="2.5" paint-order="stroke">OLD TOWN</text>
<text x="220.0" y="201.0" font-size="13.5" fill="#444" text-anchor="middle" font-weight="bold" stroke="#f2f2f0" stroke-width="2.5" paint-order="stroke">Albuquerque</text>
<text x="122.0" y="240.0" font-size="7.5" fill="#7c8aa6" text-anchor="middle" font-weight="bold" stroke="#f2f2f0" stroke-width="2.5" paint-order="stroke">WESTGATE</text>
<text x="122.0" y="247.0" font-size="7.5" fill="#7c8aa6" text-anchor="middle" font-weight="bold" stroke="#f2f2f0" stroke-width="2.5" paint-order="stroke">HEIGHTS</text>
<text x="262.0" y="259.0" font-size="7.5" fill="#7c8aa6" text-anchor="middle" font-weight="bold" stroke="#f2f2f0" stroke-width="2.5" paint-order="stroke">SUNPORT</text>
<text x="191.0" y="298.0" font-size="9" fill="#555" text-anchor="middle" font-weight="normal" stroke="#f2f2f0" stroke-width="2.5" paint-order="stroke">South Valley</text>
<text x="412.0" y="37.0" font-size="10" fill="#2f9e58" text-anchor="middle" font-weight="normal" stroke="#f2f2f0" stroke-width="2.5" paint-order="stroke">Cibola</text>
<text x="412.0" y="47.5" font-size="10" fill="#2f9e58" text-anchor="middle" font-weight="normal" stroke="#f2f2f0" stroke-width="2.5" paint-order="stroke">National Forest</text>
<text x="394.5" y="74.5" font-size="9" fill="#555" text-anchor="middle" font-weight="normal" stroke="#f2f2f0" stroke-width="2.5" paint-order="stroke">Sandia Heights</text>
<text x="300.0" y="104.0" font-size="7.5" fill="#7c8aa6" text-anchor="middle" font-weight="bold" stroke="#f2f2f0" stroke-width="2.5" paint-order="stroke">ACADEMY</text>
<text x="300.0" y="111.0" font-size="7.5" fill="#7c8aa6" text-anchor="middle" font-weight="bold" stroke="#f2f2f0" stroke-width="2.5" paint-order="stroke">ACRES NORTH</text>
<text x="339.0" y="140.0" font-size="7.5" fill="#7c8aa6" text-anchor="middle" font-weight="bold" stroke="#f2f2f0" stroke-width="2.5" paint-order="stroke">LOMA DEL REY</text>
<text x="295.5" y="162.5" font-size="7.5" fill="#7c8aa6" text-anchor="middle" font-weight="bold" stroke="#f2f2f0" stroke-width="2.5" paint-order="stroke">QUIGLEY PARK</text>
<text x="298.0" y="184.5" font-size="7.5" fill="#7c8aa6" text-anchor="middle" font-weight="bold" stroke="#f2f2f0" stroke-width="2.5" paint-order="stroke">UPTOWN</text>
<text x="310.0" y="206.0" font-size="7.5" fill="#7c8aa6" text-anchor="middle" font-weight="bold" stroke="#f2f2f0" stroke-width="2.5" paint-order="stroke">INTERNATIONAL</text>
<text x="310.0" y="213.5" font-size="7.5" fill="#7c8aa6" text-anchor="middle" font-weight="bold" stroke="#f2f2f0" stroke-width="2.5" paint-order="stroke">DISTRICT</text>
<text x="521.0" y="86.5" font-size="9" fill="#555" text-anchor="middle" font-weight="normal" stroke="#f2f2f0" stroke-width="2.5" paint-order="stroke">Sandia</text>
<text x="518.0" y="167.5" font-size="9" fill="#555" text-anchor="middle" font-weight="normal" stroke="#f2f2f0" stroke-width="2.5" paint-order="stroke">Cedar Cre</text>
<text x="507.0" y="205.0" font-size="9" fill="#555" text-anchor="middle" font-weight="normal" stroke="#f2f2f0" stroke-width="2.5" paint-order="stroke">Tijeras</text>
<text x="432.0" y="226.0" font-size="9" fill="#555" text-anchor="middle" font-weight="normal" stroke="#f2f2f0" stroke-width="2.5" paint-order="stroke">Carnuel</text>
<g transform="translate(263,22) rotate(-30)"><text x="0.0" y="0.0" font-size="7.5" fill="#5f9bd5" text-anchor="middle" font-weight="normal">Rio Grande</text></g>
<circle cx="219.0" cy="17.4" r="7.4" fill="#9c0a0a"/><circle cx="218.0" cy="16.4" r="6" fill="#e0201c"/><text x="219.0" y="20.4" font-size="8.5" font-weight="bold" fill="#fff" text-anchor="middle">5</text>
<circle cx="230.0" cy="111.9" r="7.4" fill="#3f9a12"/><circle cx="229.0" cy="110.9" r="6" fill="#7ccf2a"/><text x="230.0" y="114.9" font-size="8.5" font-weight="bold" fill="#fff" text-anchor="middle">14</text>
<circle cx="263.7" cy="120.4" r="7.4" fill="#3f9a12"/><circle cx="262.7" cy="119.4" r="6" fill="#7ccf2a"/><text x="263.7" y="123.4" font-size="8.5" font-weight="bold" fill="#fff" text-anchor="middle">10</text>
<circle cx="266.7" cy="136.0" r="7.4" fill="#3f9a12"/><circle cx="265.7" cy="135.0" r="6" fill="#7ccf2a"/><text x="266.7" y="139.0" font-size="8.5" font-weight="bold" fill="#fff" text-anchor="middle">11</text>
<circle cx="256.7" cy="147.0" r="7.4" fill="#9c0a0a"/><circle cx="255.7" cy="146.0" r="6" fill="#e0201c"/><text x="256.7" y="150.0" font-size="8.5" font-weight="bold" fill="#fff" text-anchor="middle">14</text>
<circle cx="244.4" cy="162.2" r="7.4" fill="#3f9a12"/><circle cx="243.4" cy="161.2" r="6" fill="#7ccf2a"/><text x="244.4" y="165.2" font-size="8.5" font-weight="bold" fill="#fff" text-anchor="middle">9</text>
<circle cx="213.0" cy="182.2" r="7.4" fill="#9c0a0a"/><circle cx="212.0" cy="181.2" r="6" fill="#e0201c"/><text x="213.0" y="185.2" font-size="8.5" font-weight="bold" fill="#fff" text-anchor="middle">12</text>
<circle cx="137.8" cy="188.0" r="7.4" fill="#3f9a12"/><circle cx="136.8" cy="187.0" r="6" fill="#7ccf2a"/><text x="137.8" y="191.0" font-size="8.5" font-weight="bold" fill="#fff" text-anchor="middle">7</text>
<circle cx="133.3" cy="205.6" r="7.4" fill="#9c0a0a"/><circle cx="132.3" cy="204.6" r="6" fill="#e0201c"/><text x="133.3" y="208.6" font-size="8.5" font-weight="bold" fill="#fff" text-anchor="middle">7</text>
<circle cx="151.9" cy="271.0" r="7.4" fill="#9c0a0a"/><circle cx="150.9" cy="270.0" r="6" fill="#e0201c"/><text x="151.9" y="274.0" font-size="8.5" font-weight="bold" fill="#fff" text-anchor="middle">9</text>
<circle cx="309.0" cy="49.9" r="7.4" fill="#3f9a12"/><circle cx="308.0" cy="48.9" r="6" fill="#7ccf2a"/><text x="309.0" y="52.9" font-size="8.5" font-weight="bold" fill="#fff" text-anchor="middle">5</text>
<circle cx="356.6" cy="79.6" r="7.4" fill="#9c0a0a"/><circle cx="355.6" cy="78.6" r="6" fill="#e0201c"/><text x="356.6" y="82.6" font-size="8.5" font-weight="bold" fill="#fff" text-anchor="middle">13</text>
<circle cx="284.0" cy="115.9" r="7.4" fill="#3f9a12"/><circle cx="283.0" cy="114.9" r="6" fill="#7ccf2a"/><text x="284.0" y="118.9" font-size="8.5" font-weight="bold" fill="#fff" text-anchor="middle">13</text>
<circle cx="356.6" cy="128.5" r="7.4" fill="#9c0a0a"/><circle cx="355.6" cy="127.5" r="6" fill="#e0201c"/><text x="356.6" y="131.5" font-size="8.5" font-weight="bold" fill="#fff" text-anchor="middle">11</text>
<circle cx="311.4" cy="181.4" r="7.4" fill="#3f9a12"/><circle cx="310.4" cy="180.4" r="6" fill="#7ccf2a"/><text x="311.4" y="184.4" font-size="8.5" font-weight="bold" fill="#fff" text-anchor="middle">4</text>
<circle cx="293.9" cy="196.5" r="7.4" fill="#9c0a0a"/><circle cx="292.9" cy="195.5" r="6" fill="#e0201c"/><text x="293.9" y="199.5" font-size="8.5" font-weight="bold" fill="#fff" text-anchor="middle">10</text>
<circle cx="296.3" cy="216.0" r="7.4" fill="#9c0a0a"/><circle cx="295.3" cy="215.0" r="6" fill="#e0201c"/><text x="296.3" y="219.0" font-size="8.5" font-weight="bold" fill="#fff" text-anchor="middle">4</text>
<circle cx="334.2" cy="245.4" r="7.4" fill="#3f9a12"/><circle cx="333.2" cy="244.4" r="6" fill="#7ccf2a"/><text x="334.2" y="248.4" font-size="8.5" font-weight="bold" fill="#fff" text-anchor="middle">12</text>
<rect x="8" y="7.4" width="125" height="30" fill="#fff" rx="2" stroke="#ddd" stroke-width=".5"/>
<line x1="58" y1="7.4" x2="58" y2="37.4" stroke="#e6e6e6"/>
<text x="33" y="27" font-size="13" font-weight="bold" fill="#111" text-anchor="middle">Map</text>
<text x="95" y="27" font-size="13" fill="#565656" text-anchor="middle">Satellite</text>
<rect x="499" y="7.5" width="30.7" height="30.2" fill="#fff" rx="2" stroke="#ddd" stroke-width=".5"/>
<path d="M506.5 18 V15 H509.5 M519 15 H522 V18 M522 27 V30 H519 M509.5 30 H506.5 V27" fill="none" stroke="#666" stroke-width="1.7"/>
<rect x="499" y="168.4" width="30.7" height="29.3" fill="#fff" rx="2" stroke="#ddd" stroke-width=".5"/>
<circle cx="514.3" cy="175.5" r="3.2" fill="#f4b400"/><path d="M510.3 179.5 H518.3 L519 187.5 H516.8 L516 192 H512.6 L511.8 187.5 H509.6Z" fill="#f4b400"/>
<rect x="499" y="221.4" width="30.7" height="60.6" fill="#fff" rx="2" stroke="#ddd" stroke-width=".5"/>
<line x1="503" y1="251.7" x2="525.7" y2="251.7" stroke="#e6e6e6"/>
<path d="M508.3 236.5 H520.3 M514.3 230.5 V242.5 M508.3 267 H520.3" stroke="#666" stroke-width="2.2"/>
<g transform="translate(4.8,296) scale(0.82)" font-size="16" font-weight="bold" stroke="#fff" stroke-width="2" paint-order="stroke"><text x="0" y="0" fill="#4285f4">G</text><text x="12.2" y="0" fill="#ea4335">o</text><text x="22.5" y="0" fill="#fbbc05">o</text><text x="33.3" y="0" fill="#4285f4">g</text><text x="44" y="0" fill="#34a853">l</text><text x="48.7" y="0" fill="#ea4335">e</text></g>
<rect x="250.7" y="289.4" width="286.3" height="11" fill="#f5f5f5" opacity=".8"/>
<text y="298" font-size="7.2" fill="#222"><tspan x="252">Keyboard shortcuts</tspan><tspan x="326">Map data ©2021 Google</tspan><tspan x="416.5">Terms of Use</tspan><tspan x="470.6">Report a map error</tspan></text>
</svg>
<div class="abs" style="left:97.0px;top:498.0px;width:1128.0px;height:335.5px;background:#fff;border-radius:3px"></div>
<div class="abs" style="left:105px;top:516px;width:1094.4px;height:301px;overflow:hidden">
<div class="abs" style="left:0.0px;top:0.0px;width:1094.4px;height:37.5px;background:#f1f3f5;border-bottom:1px solid #e3e6e9"></div>
<div class="t" style="left:10.0px;top:13.9px;font-size:10.45px;line-height:10.45px;color:#5b6168;font-weight:bold;">TRIP ID (8)</div>
<div class="t" style="left:138.0px;top:13.9px;font-size:10.45px;line-height:10.45px;color:#5b6168;font-weight:bold;">NAME</div>
<div class="t" style="left:269.6px;top:13.9px;font-size:10.45px;line-height:10.45px;color:#5b6168;font-weight:bold;">INSURANCE</div>
<div class="t" style="left:384.7px;top:13.9px;font-size:10.45px;line-height:10.45px;color:#5b6168;font-weight:bold;">PICKUP</div>
<div class="t" style="left:449.6px;top:13.9px;font-size:10.45px;line-height:10.45px;color:#5b6168;font-weight:bold;">PICKUP ADDRESS</div>
<div class="t" style="left:736.0px;top:13.9px;font-size:10.45px;line-height:10.45px;color:#5b6168;font-weight:bold;">DROPOFF ADDRESS</div>
<div class="t" style="left:988.3px;top:13.9px;font-size:10.45px;line-height:10.45px;color:#5b6168;font-weight:bold;">ACTION</div>
<div class="t" style="left:10.0px;top:50.6px;font-size:10.45px;line-height:10.45px;color:#5d646b;font-weight:normal;">80A65180B8B2</div>
<div class="t" style="left:138.0px;top:50.6px;font-size:10.45px;line-height:10.45px;color:#5d646b;font-weight:normal;">LEEDS, FREDERICK</div>
<div class="t" style="left:269.6px;top:50.6px;font-size:10.45px;line-height:10.45px;color:#5d646b;font-weight:normal;">American Logistics</div>
<div class="t" style="left:384.7px;top:50.6px;font-size:10.45px;line-height:10.45px;color:#5d646b;font-weight:normal;">2247</div>
<svg class="abs" style="left:449.6px;top:49.1px" width="9" height="12" viewBox="0 0 9 12"><path d="M4.5 11.5 Q1 7 .8 4.5 A3.7 3.7 0 0 1 8.2 4.5 Q8 7 4.5 11.5Z" fill="#1fb58f"/><circle cx="4.5" cy="4.4" r="1.5" fill="#fff"/></svg>
<div class="t" style="left:460.5px;top:50.6px;font-size:10.45px;line-height:10.45px;color:#5d646b;font-weight:normal;">10175 Gateway Boulevard West El Paso TX 79925</div>
<svg class="abs" style="left:735.6px;top:49.1px" width="9" height="12" viewBox="0 0 9 12"><path d="M4.5 11.5 Q1 7 .8 4.5 A3.7 3.7 0 0 1 8.2 4.5 Q8 7 4.5 11.5Z" fill="#ec4a64"/><circle cx="4.5" cy="4.4" r="1.5" fill="#fff"/></svg>
<div class="t" style="left:746.8px;top:50.6px;font-size:10.45px;line-height:10.45px;color:#5d646b;font-weight:normal;">4740 North Mesa Street El Paso TX 79912</div>
<div class="abs" style="left:988.0px;top:49.0px;width:40.0px;height:19.3px;background:#4fc3df;border-radius:1.5px"></div>
<div class="t" style="left:1008.0px;top:54.1px;font-size:8.6px;line-height:8.6px;color:#fff;font-weight:normal;transform:translateX(-50%);">Route</div>
<div class="abs" style="left:1033.0px;top:49.0px;width:43.0px;height:19.3px;background:#6456d8;border-radius:1.5px"></div>
<div class="t" style="left:1054.5px;top:54.1px;font-size:8.6px;line-height:8.6px;color:#fff;font-weight:normal;transform:translateX(-50%);">Assign</div>
<div class="abs" style="left:0.0px;top:79.1px;width:1094.4px;height:1.0px;background:#e6e9ec;"></div>
<div class="t" style="left:10.0px;top:91.6px;font-size:10.45px;line-height:10.45px;color:#5d646b;font-weight:normal;">959EB54C8610</div>
<div class="t" style="left:138.0px;top:91.6px;font-size:10.45px;line-height:10.45px;color:#5d646b;font-weight:normal;">ORNELAS, MARTHA</div>
<div class="t" style="left:269.6px;top:91.6px;font-size:10.45px;line-height:10.45px;color:#5d646b;font-weight:normal;">American Logistics</div>
<div class="t" style="left:384.7px;top:91.6px;font-size:10.45px;line-height:10.45px;color:#5d646b;font-weight:normal;">2247</div>
<svg class="abs" style="left:449.6px;top:90.1px" width="9" height="12" viewBox="0 0 9 12"><path d="M4.5 11.5 Q1 7 .8 4.5 A3.7 3.7 0 0 1 8.2 4.5 Q8 7 4.5 11.5Z" fill="#1fb58f"/><circle cx="4.5" cy="4.4" r="1.5" fill="#fff"/></svg>
<div class="t" style="left:460.5px;top:91.6px;font-size:10.45px;line-height:10.45px;color:#5d646b;font-weight:normal;">2400 Trawood Drive El Paso TX 79936</div>
<svg class="abs" style="left:735.6px;top:90.1px" width="9" height="12" viewBox="0 0 9 12"><path d="M4.5 11.5 Q1 7 .8 4.5 A3.7 3.7 0 0 1 8.2 4.5 Q8 7 4.5 11.5Z" fill="#ec4a64"/><circle cx="4.5" cy="4.4" r="1.5" fill="#fff"/></svg>
<div class="t" style="left:746.8px;top:91.6px;font-size:10.45px;line-height:10.45px;color:#5d646b;font-weight:normal;">4531 Blanco Avenue El Paso TX 79905</div>
<div class="abs" style="left:988.0px;top:90.0px;width:40.0px;height:19.3px;background:#4fc3df;border-radius:1.5px"></div>
<div class="t" style="left:1008.0px;top:95.2px;font-size:8.6px;line-height:8.6px;color:#fff;font-weight:normal;transform:translateX(-50%);">Route</div>
<div class="abs" style="left:1033.0px;top:90.0px;width:43.0px;height:19.3px;background:#6456d8;border-radius:1.5px"></div>
<div class="t" style="left:1054.5px;top:95.2px;font-size:8.6px;line-height:8.6px;color:#fff;font-weight:normal;transform:translateX(-50%);">Assign</div>
<div class="abs" style="left:0.0px;top:120.1px;width:1094.4px;height:1.0px;background:#e6e9ec;"></div>
<div class="t" style="left:10.0px;top:132.7px;font-size:10.45px;line-height:10.45px;color:#5d646b;font-weight:normal;">4E757EEFE5D4</div>
<div class="t" style="left:138.0px;top:132.7px;font-size:10.45px;line-height:10.45px;color:#5d646b;font-weight:normal;">VALDIVIA, MARIA</div>
<div class="t" style="left:269.6px;top:132.7px;font-size:10.45px;line-height:10.45px;color:#5d646b;font-weight:normal;">American Logistics</div>
<div class="t" style="left:384.7px;top:132.7px;font-size:10.45px;line-height:10.45px;color:#5d646b;font-weight:normal;">2247</div>
<svg class="abs" style="left:449.6px;top:131.2px" width="9" height="12" viewBox="0 0 9 12"><path d="M4.5 11.5 Q1 7 .8 4.5 A3.7 3.7 0 0 1 8.2 4.5 Q8 7 4.5 11.5Z" fill="#1fb58f"/><circle cx="4.5" cy="4.4" r="1.5" fill="#fff"/></svg>
<div class="t" style="left:460.5px;top:132.7px;font-size:10.45px;line-height:10.45px;color:#5d646b;font-weight:normal;">1635 Lee Trevino Drive El Paso TX 79936</div>
<svg class="abs" style="left:735.6px;top:131.2px" width="9" height="12" viewBox="0 0 9 12"><path d="M4.5 11.5 Q1 7 .8 4.5 A3.7 3.7 0 0 1 8.2 4.5 Q8 7 4.5 11.5Z" fill="#ec4a64"/><circle cx="4.5" cy="4.4" r="1.5" fill="#fff"/></svg>
<div class="t" style="left:746.8px;top:132.7px;font-size:10.45px;line-height:10.45px;color:#5d646b;font-weight:normal;">9149 Texas Red Drive El Paso TX 79907</div>
<div class="abs" style="left:988.0px;top:131.1px;width:40.0px;height:19.3px;background:#4fc3df;border-radius:1.5px"></div>
<div class="t" style="left:1008.0px;top:136.2px;font-size:8.6px;line-height:8.6px;color:#fff;font-weight:normal;transform:translateX(-50%);">Route</div>
<div class="abs" style="left:1033.0px;top:131.1px;width:43.0px;height:19.3px;background:#6456d8;border-radius:1.5px"></div>
<div class="t" style="left:1054.5px;top:136.2px;font-size:8.6px;line-height:8.6px;color:#fff;font-weight:normal;transform:translateX(-50%);">Assign</div>
<div class="abs" style="left:0.0px;top:161.2px;width:1094.4px;height:1.0px;background:#e6e9ec;"></div>
<div class="t" style="left:10.0px;top:173.7px;font-size:10.45px;line-height:10.45px;color:#5d646b;font-weight:normal;">34161109R</div>
<div class="t" style="left:138.0px;top:173.7px;font-size:10.45px;line-height:10.45px;color:#5d646b;font-weight:normal;">MARTHA GONZALEZ</div>
<div class="t" style="left:269.6px;top:173.7px;font-size:10.45px;line-height:10.45px;color:#5d646b;font-weight:normal;">Access2Care</div>
<div class="t" style="left:384.7px;top:173.7px;font-size:10.45px;line-height:10.45px;color:#5d646b;font-weight:normal;">2259</div>
<svg class="abs" style="left:449.6px;top:172.2px" width="9" height="12" viewBox="0 0 9 12"><path d="M4.5 11.5 Q1 7 .8 4.5 A3.7 3.7 0 0 1 8.2 4.5 Q8 7 4.5 11.5Z" fill="#1fb58f"/><circle cx="4.5" cy="4.4" r="1.5" fill="#fff"/></svg>
<div class="t" style="left:460.5px;top:173.7px;font-size:10.45px;line-height:10.45px;color:#5d646b;font-weight:normal;">715 N Americas Ave EL PASO TX 79907</div>
<svg class="abs" style="left:735.6px;top:172.2px" width="9" height="12" viewBox="0 0 9 12"><path d="M4.5 11.5 Q1 7 .8 4.5 A3.7 3.7 0 0 1 8.2 4.5 Q8 7 4.5 11.5Z" fill="#ec4a64"/><circle cx="4.5" cy="4.4" r="1.5" fill="#fff"/></svg>
<div class="t" style="left:746.8px;top:173.7px;font-size:10.45px;line-height:10.45px;color:#5d646b;font-weight:normal;">220 Emma Way apt B EL PASO TX 79907</div>
<div class="abs" style="left:988.0px;top:172.1px;width:40.0px;height:19.3px;background:#4fc3df;border-radius:1.5px"></div>
<div class="t" style="left:1008.0px;top:177.3px;font-size:8.6px;line-height:8.6px;color:#fff;font-weight:normal;transform:translateX(-50%);">Route</div>
<div class="abs" style="left:1033.0px;top:172.1px;width:43.0px;height:19.3px;background:#6456d8;border-radius:1.5px"></div>
<div class="t" style="left:1054.5px;top:177.3px;font-size:8.6px;line-height:8.6px;color:#fff;font-weight:normal;transform:translateX(-50%);">Assign</div>
<div class="abs" style="left:0.0px;top:202.2px;width:1094.4px;height:1.0px;background:#e6e9ec;"></div>
<div class="t" style="left:10.0px;top:214.8px;font-size:10.45px;line-height:10.45px;color:#5d646b;font-weight:normal;">34587892R</div>
<div class="t" style="left:138.0px;top:214.8px;font-size:10.45px;line-height:10.45px;color:#5d646b;font-weight:normal;">MARIA MENDOZA</div>
<div class="t" style="left:269.6px;top:214.8px;font-size:10.45px;line-height:10.45px;color:#5d646b;font-weight:normal;">Access2Care</div>
<div class="t" style="left:384.7px;top:214.8px;font-size:10.45px;line-height:10.45px;color:#5d646b;font-weight:normal;">2259</div>
<svg class="abs" style="left:449.6px;top:213.3px" width="9" height="12" viewBox="0 0 9 12"><path d="M4.5 11.5 Q1 7 .8 4.5 A3.7 3.7 0 0 1 8.2 4.5 Q8 7 4.5 11.5Z" fill="#1fb58f"/><circle cx="4.5" cy="4.4" r="1.5" fill="#fff"/></svg>
<div class="t" style="left:460.5px;top:214.8px;font-size:10.45px;line-height:10.45px;color:#5d646b;font-weight:normal;">4301 N Mesa St Ste 100 EL PASO TX 79902</div>
<svg class="abs" style="left:735.6px;top:213.3px" width="9" height="12" viewBox="0 0 9 12"><path d="M4.5 11.5 Q1 7 .8 4.5 A3.7 3.7 0 0 1 8.2 4.5 Q8 7 4.5 11.5Z" fill="#ec4a64"/><circle cx="4.5" cy="4.4" r="1.5" fill="#fff"/></svg>
<div class="t" style="left:746.8px;top:214.8px;font-size:10.45px;line-height:10.45px;color:#5d646b;font-weight:normal;">7401 Phoenix Ave 1527 EL PASO TX 79915</div>
<div class="abs" style="left:988.0px;top:213.2px;width:40.0px;height:19.3px;background:#4fc3df;border-radius:1.5px"></div>
<div class="t" style="left:1008.0px;top:218.3px;font-size:8.6px;line-height:8.6px;color:#fff;font-weight:normal;transform:translateX(-50%);">Route</div>
<div class="abs" style="left:1033.0px;top:213.2px;width:43.0px;height:19.3px;background:#6456d8;border-radius:1.5px"></div>
<div class="t" style="left:1054.5px;top:218.3px;font-size:8.6px;line-height:8.6px;color:#fff;font-weight:normal;transform:translateX(-50%);">Assign</div>
<div class="abs" style="left:0.0px;top:243.3px;width:1094.4px;height:1.0px;background:#e6e9ec;"></div>
<div class="t" style="left:10.0px;top:255.8px;font-size:10.45px;line-height:10.45px;color:#5d646b;font-weight:normal;">34567810R</div>
<div class="t" style="left:138.0px;top:255.8px;font-size:10.45px;line-height:10.45px;color:#5d646b;font-weight:normal;">GLORIA ALONZO</div>
<div class="t" style="left:269.6px;top:255.8px;font-size:10.45px;line-height:10.45px;color:#5d646b;font-weight:normal;">Access2Care</div>
<div class="t" style="left:384.7px;top:255.8px;font-size:10.45px;line-height:10.45px;color:#5d646b;font-weight:normal;">2259</div>
<svg class="abs" style="left:449.6px;top:254.4px" width="9" height="12" viewBox="0 0 9 12"><path d="M4.5 11.5 Q1 7 .8 4.5 A3.7 3.7 0 0 1 8.2 4.5 Q8 7 4.5 11.5Z" fill="#1fb58f"/><circle cx="4.5" cy="4.4" r="1.5" fill="#fff"/></svg>
<div class="t" style="left:460.5px;top:255.8px;font-size:10.45px;line-height:10.45px;color:#5d646b;font-weight:normal;">4532 N Mesa St EL PASO TX 79912</div>
<svg class="abs" style="left:735.6px;top:254.4px" width="9" height="12" viewBox="0 0 9 12"><path d="M4.5 11.5 Q1 7 .8 4.5 A3.7 3.7 0 0 1 8.2 4.5 Q8 7 4.5 11.5Z" fill="#ec4a64"/><circle cx="4.5" cy="4.4" r="1.5" fill="#fff"/></svg>
<div class="t" style="left:746.8px;top:255.8px;font-size:10.45px;line-height:10.45px;color:#5d646b;font-weight:normal;">340 Encino Dr EL PASO TX 79905</div>
<div class="abs" style="left:988.0px;top:254.2px;width:40.0px;height:19.3px;background:#4fc3df;border-radius:1.5px"></div>
<div class="t" style="left:1008.0px;top:259.4px;font-size:8.6px;line-height:8.6px;color:#fff;font-weight:normal;transform:translateX(-50%);">Route</div>
<div class="abs" style="left:1033.0px;top:254.2px;width:43.0px;height:19.3px;background:#6456d8;border-radius:1.5px"></div>
<div class="t" style="left:1054.5px;top:259.4px;font-size:8.6px;line-height:8.6px;color:#fff;font-weight:normal;transform:translateX(-50%);">Assign</div>
<div class="abs" style="left:0.0px;top:284.4px;width:1094.4px;height:1.0px;background:#e6e9ec;"></div>
<div class="t" style="left:10.0px;top:296.9px;font-size:10.45px;line-height:10.45px;color:#5d646b;font-weight:normal;">34587893R</div>
<div class="t" style="left:138.0px;top:296.9px;font-size:10.45px;line-height:10.45px;color:#5d646b;font-weight:normal;">NICOLAS MENDEZ</div>
<div class="t" style="left:269.6px;top:296.9px;font-size:10.45px;line-height:10.45px;color:#5d646b;font-weight:normal;">Access2Care</div>
<div class="t" style="left:384.7px;top:296.9px;font-size:10.45px;line-height:10.45px;color:#5d646b;font-weight:normal;">2259</div>
<svg class="abs" style="left:449.6px;top:295.4px" width="9" height="12" viewBox="0 0 9 12"><path d="M4.5 11.5 Q1 7 .8 4.5 A3.7 3.7 0 0 1 8.2 4.5 Q8 7 4.5 11.5Z" fill="#1fb58f"/><circle cx="4.5" cy="4.4" r="1.5" fill="#fff"/></svg>
<div class="t" style="left:460.5px;top:296.9px;font-size:10.45px;line-height:10.45px;color:#5d646b;font-weight:normal;">1720 Sunlit Dr St 200 EL PASO TX 79925</div>
<svg class="abs" style="left:735.6px;top:295.4px" width="9" height="12" viewBox="0 0 9 12"><path d="M4.5 11.5 Q1 7 .8 4.5 A3.7 3.7 0 0 1 8.2 4.5 Q8 7 4.5 11.5Z" fill="#ec4a64"/><circle cx="4.5" cy="4.4" r="1.5" fill="#fff"/></svg>
<div class="t" style="left:746.8px;top:296.9px;font-size:10.45px;line-height:10.45px;color:#5d646b;font-weight:normal;">2801 Sierra Madre Dr EL PASO TX 79904</div>
<div class="abs" style="left:988.0px;top:295.3px;width:40.0px;height:19.3px;background:#4fc3df;border-radius:1.5px"></div>
<div class="t" style="left:1008.0px;top:300.4px;font-size:8.6px;line-height:8.6px;color:#fff;font-weight:normal;transform:translateX(-50%);">Route</div>
<div class="abs" style="left:1033.0px;top:295.3px;width:43.0px;height:19.3px;background:#6456d8;border-radius:1.5px"></div>
<div class="t" style="left:1054.5px;top:300.4px;font-size:8.6px;line-height:8.6px;color:#fff;font-weight:normal;transform:translateX(-50%);">Assign</div>
<div class="abs" style="left:0.0px;top:325.4px;width:1094.4px;height:1.0px;background:#e6e9ec;"></div>
</div>
<div class="abs" style="left:0.0px;top:856.0px;width:1241.0px;height:25.5px;background:#edeef1;"></div>
<div class="t" style="left:1230.0px;top:874.4px;font-size:10.2px;line-height:10.2px;color:#9ba6ae;font-weight:normal;transform:translateX(-100%);">&copy; 2021. All rights reserved.</div>
</div>
<div id="cw" class="win" style="left:1222px;top:71px;width:1639px;height:1072px;border-radius:16px;background:#f4f5f7;box-shadow:0 0 30px rgba(0,0,0,.35)">
<div class="tb" style="height:49px"></div>
<div class="dot" style="left:20.9px;top:15.4px;width:16px;height:16px"></div>
<div class="dot" style="left:45.9px;top:15.4px;width:16px;height:16px"></div>
<div class="dot" style="left:70.7px;top:15.4px;width:16px;height:16px"></div>
<div class="hdr" style="top:49px;height:61.6px"></div>
<svg class="abs" style="left:8px;top:53px" width="18" height="18" viewBox="0 0 18 18"><path d="M3.2 5.5 A6 6 0 0 1 14 8.8" fill="none" stroke="#1f8fd8" stroke-width="1.6" stroke-linecap="round"/></svg>
<div class="t" style="left:82.0px;top:69.3px;font-size:20px;line-height:20px;color:#fff;font-weight:bold;">NEMT</div>
<div class="abs" style="left:237.0px;top:72.2px;width:19.0px;height:2.1px;background:#fff;"></div>
<div class="abs" style="left:237.0px;top:78.0px;width:19.0px;height:2.1px;background:#fff;"></div>
<div class="abs" style="left:237.0px;top:83.8px;width:19.0px;height:2.1px;background:#fff;"></div>
<svg class="abs" style="left:273px;top:72.5px" width="13" height="13" viewBox="0 0 13 13"><circle cx="6.5" cy="6.5" r="5.5" fill="none" stroke="#fff" stroke-width="1.3"/><path d="M6.5 3.3 V6.8 L8.6 8" fill="none" stroke="#fff" stroke-width="1.2"/></svg>
<div class="t" style="left:289.5px;top:73.5px;font-size:12.7px;line-height:12.7px;color:#fff;font-weight:bold;">09/10/2021 - 01:25:22</div>
<svg class="abs" style="left:1335px;top:70px" width="20" height="20" viewBox="0 0 20 20"><path d="M10 3 Q15 3.5 15 9 V13 L16.5 15 H3.5 L5 13 V9 Q5 3.5 10 3Z" fill="none" stroke="#c9cdd3" stroke-width="1.4"/><path d="M8.3 16.8 Q10 18.6 11.7 16.8" fill="none" stroke="#c9cdd3" stroke-width="1.3"/></svg>
<div class="abs" style="left:1342.5px;top:60px;width:17px;height:16px;border-radius:8px;background:#ea4a63"></div>
<div class="t" style="left:1351.0px;top:63.8px;font-size:9px;line-height:9px;color:#fff;font-weight:bold;transform:translateX(-50%);">84</div>
<svg class="abs" style="left:1380px;top:56.7px" width="46" height="46" viewBox="0 0 46 46"><circle cx="23" cy="23" r="22.5" fill="#fff" stroke="#eee" stroke-width="1"/><path d="M23 12 Q14 2 6 12 Q1 22 12 32 L23 42 L34 32 Q45 22 40 12 Q32 2 23 12Z" fill="none" stroke="#e64a5a" stroke-width="1.5"/><path d="M8 26 Q16 38 26 40 Q36 36 40 20" fill="none" stroke="#e22838" stroke-width="3.5"/><path d="M12 15 H34 M11 22 H35 M15 29 H30" stroke="#555" stroke-width="1" stroke-dasharray="2 1"/><circle cx="26" cy="40" r="3" fill="#e22838"/></svg>
<div class="t" style="left:1434.7px;top:72.6px;font-size:12.7px;line-height:12.7px;color:#d3d6db;font-weight:normal;">Helping Hands Transportation</div>
<svg class="abs" style="left:1609px;top:75px" width="9" height="8" viewBox="0 0 9 8"><path d="M1.5 2.5 L4.5 5.5 L7.5 2.5" fill="none" stroke="#d3d6db" stroke-width="1.3"/></svg>
<div class="abs" style="left:0;top:110.6px;width:219px;height:962px;background:#fff;box-shadow:1px 0 3px rgba(0,0,0,.05)"></div>
<div class="abs" style="left:18.7px;top:138.6px;width:120.5px;height:39px;border:2px solid;border-color:#b9b9b9 #e3e3e3 #e3e3e3 #b9b9b9;background:#fff;box-shadow:inset 1px 1px 0 #d6d6d6"></div>
<div class="t" style="left:29.0px;top:152.3px;font-size:13.4px;line-height:13.4px;color:#2e3440;font-weight:bold;">CODE: KYK049</div>
<div class="t" style="left:18.5px;top:204.5px;font-size:10.8px;line-height:10.8px;color:#5e6a7d;font-weight:bold;letter-spacing:.2px">NAVIGATION</div>
<svg class="abs" style="left:20.6px;top:241.6px" width="18" height="18" viewBox="0 0 18 18" fill="#17a2b8"><path d="M4 8 L5.5 4.2 Q6 3.2 7 3.2 H11 Q12 3.2 12.5 4.2 L14 8 Q15.5 8.5 15.5 10 V13 H14 V15 H12 V13 H6 V15 H4 V13 H2.5 V10 Q2.5 8.5 4 8Z M6.2 7.6 H11.8 L10.9 5 H7.1Z" fill-rule="evenodd"/><circle cx="5.3" cy="10.5" r="1" fill="#fff"/><circle cx="12.7" cy="10.5" r="1" fill="#fff"/></svg>
<div class="t" style="left:52.5px;top:243.7px;font-size:14.1px;line-height:14.1px;color:#17a2b8;font-weight:normal;">Dispatch Center</div>
<svg class="abs" style="left:20.6px;top:286.9px" width="18" height="18" viewBox="0 0 18 18" fill="#5e6a7d"><path d="M12.5 5.5 L6.5 11.5 Q5.5 12.8 6.6 13.6 Q7.6 14.3 8.6 13.2 L14 7.6 Q15.8 5.5 14 3.8 Q12.2 2.2 10.2 4.2 L4.6 9.8 Q2.2 12.6 4.6 14.8 Q7 16.8 9.6 14.3 L14.2 9.6" fill="none" stroke="#5e6a7d" stroke-width="1.7" stroke-linecap="round"/></svg>
<div class="t" style="left:52.5px;top:289.0px;font-size:14.1px;line-height:14.1px;color:#5a6478;font-weight:normal;">Assigned Trips</div>
<svg class="abs" style="left:188.6px;top:289.9px" width="8" height="10" viewBox="0 0 8 10"><path d="M2.2 1.2 L5.8 5 L2.2 8.8" fill="none" stroke="#5a6478" stroke-width="1.6" stroke-linecap="round" stroke-linejoin="round"/></svg>
<svg class="abs" style="left:20.6px;top:332.3px" width="18" height="18" viewBox="0 0 18 18" fill="#5e6a7d"><path d="M12.5 5.5 L6.5 11.5 Q5.5 12.8 6.6 13.6 Q7.6 14.3 8.6 13.2 L14 7.6 Q15.8 5.5 14 3.8 Q12.2 2.2 10.2 4.2 L4.6 9.8 Q2.2 12.6 4.6 14.8 Q7 16.8 9.6 14.3 L14.2 9.6" fill="none" stroke="#5e6a7d" stroke-width="1.7" stroke-linecap="round"/></svg>
<div class="t" style="left:52.5px;top:334.3px;font-size:14.1px;line-height:14.1px;color:#5a6478;font-weight:normal;">Offered Trips</div>
<svg class="abs" style="left:188.6px;top:335.3px" width="8" height="10" viewBox="0 0 8 10"><path d="M2.2 1.2 L5.8 5 L2.2 8.8" fill="none" stroke="#5a6478" stroke-width="1.6" stroke-linecap="round" stroke-linejoin="round"/></svg>
<svg class="abs" style="left:20.6px;top:377.6px" width="18" height="18" viewBox="0 0 18 18" fill="#5e6a7d"><circle cx="9" cy="5.6" r="3.4"/><path d="M2.8 15.5 Q2.8 10.2 9 10.2 Q15.2 10.2 15.2 15.5Z"/></svg>
<div class="t" style="left:52.5px;top:379.7px;font-size:14.1px;line-height:14.1px;color:#5a6478;font-weight:normal;">Members</div>
<svg class="abs" style="left:188.6px;top:380.6px" width="8" height="10" viewBox="0 0 8 10"><path d="M2.2 1.2 L5.8 5 L2.2 8.8" fill="none" stroke="#5a6478" stroke-width="1.6" stroke-linecap="round" stroke-linejoin="round"/></svg>
<svg class="abs" style="left:20.6px;top:423.0px" width="18" height="18" viewBox="0 0 18 18" fill="#5e6a7d"><circle cx="9" cy="5.6" r="3.4"/><path d="M2.8 15.5 Q2.8 10.2 9 10.2 Q15.2 10.2 15.2 15.5Z"/></svg>
<div class="t" style="left:52.5px;top:425.0px;font-size:14.1px;line-height:14.1px;color:#5a6478;font-weight:normal;">Staff</div>
<svg class="abs" style="left:20.6px;top:468.3px" width="18" height="18" viewBox="0 0 18 18" fill="#5e6a7d"><path d="M6.5 4.5 V3.2 Q6.5 2.5 7.2 2.5 H10.8 Q11.5 2.5 11.5 3.2 V4.5 H15 Q16 4.5 16 5.5 V14 Q16 15 15 15 H3 Q2 15 2 14 V5.5 Q2 4.5 3 4.5Z M7.8 4.5 H10.2 V3.6 H7.8Z" fill-rule="evenodd"/><rect x="2" y="9" width="14" height="1.2" fill="#fff"/></svg>
<div class="t" style="left:52.5px;top:470.4px;font-size:14.1px;line-height:14.1px;color:#5a6478;font-weight:normal;">Corporate Users</div>
<svg class="abs" style="left:188.6px;top:471.3px" width="8" height="10" viewBox="0 0 8 10"><path d="M2.2 1.2 L5.8 5 L2.2 8.8" fill="none" stroke="#5a6478" stroke-width="1.6" stroke-linecap="round" stroke-linejoin="round"/></svg>
<svg class="abs" style="left:20.6px;top:513.6px" width="18" height="18" viewBox="0 0 18 18" fill="#5e6a7d"><circle cx="9" cy="6.5" r="2.6"/><circle cx="4" cy="7.5" r="1.9"/><circle cx="14" cy="7.5" r="1.9"/><path d="M4.8 14 Q4.8 10 9 10 Q13.2 10 13.2 14Z"/><path d="M0.8 13 Q0.8 10.2 4 10.2 Q5 10.2 5.5 10.6 Q4 11.8 4 13Z"/><path d="M17.2 13 Q17.2 10.2 14 10.2 Q13 10.2 12.5 10.6 Q14 11.8 14 13Z"/></svg>
<div class="t" style="left:52.5px;top:515.7px;font-size:14.1px;line-height:14.1px;color:#5a6478;font-weight:normal;">Drivers</div>
<svg class="abs" style="left:188.6px;top:516.6px" width="8" height="10" viewBox="0 0 8 10"><path d="M2.2 1.2 L5.8 5 L2.2 8.8" fill="none" stroke="#5a6478" stroke-width="1.6" stroke-linecap="round" stroke-linejoin="round"/></svg>
<svg class="abs" style="left:20.6px;top:559.0px" width="18" height="18" viewBox="0 0 18 18" fill="#5e6a7d"><path d="M7 9 L8 6.5 Q8.4 5.8 9.2 5.8 H13.2 Q14 5.8 14.4 6.5 L15.5 9 Q16.8 9.4 16.8 10.6 V13 H15.6 V14.6 H14 V13 H8.4 V14.6 H6.8 V13 H5.6 V10.6 Q5.6 9.4 7 9Z"/><path d="M1 4 L3 5 L3.5 2.5 L4.8 4.8 L6.8 3.2 L6 5.8 L8 6.5 L5.5 7 L6 9 L4 7.6 L2.6 9.2 L2.8 7 L1 7 L2.5 5.8Z"/></svg>
<div class="t" style="left:52.5px;top:561.0px;font-size:14.1px;line-height:14.1px;color:#5a6478;font-weight:normal;">Accidental Reports</div>
<svg class="abs" style="left:20.6px;top:604.3px" width="18" height="18" viewBox="0 0 18 18" fill="#5e6a7d"><path d="M4 8 L5.5 4.2 Q6 3.2 7 3.2 H11 Q12 3.2 12.5 4.2 L14 8 Q15.5 8.5 15.5 10 V13 H14 V15 H12 V13 H6 V15 H4 V13 H2.5 V10 Q2.5 8.5 4 8Z M6.2 7.6 H11.8 L10.9 5 H7.1Z" fill-rule="evenodd"/><circle cx="5.3" cy="10.5" r="1" fill="#fff"/><circle cx="12.7" cy="10.5" r="1" fill="#fff"/></svg>
<div class="t" style="left:52.5px;top:606.4px;font-size:14.1px;line-height:14.1px;color:#5a6478;font-weight:normal;">Fleet</div>
<svg class="abs" style="left:188.6px;top:607.3px" width="8" height="10" viewBox="0 0 8 10"><path d="M2.2 1.2 L5.8 5 L2.2 8.8" fill="none" stroke="#5a6478" stroke-width="1.6" stroke-linecap="round" stroke-linejoin="round"/></svg>
<svg class="abs" style="left:20.6px;top:649.7px" width="18" height="18" viewBox="0 0 18 18" fill="#5e6a7d"><path d="M4 8 L5.5 4.2 Q6 3.2 7 3.2 H11 Q12 3.2 12.5 4.2 L14 8 Q15.5 8.5 15.5 10 V13 H14 V15 H12 V13 H6 V15 H4 V13 H2.5 V10 Q2.5 8.5 4 8Z M6.2 7.6 H11.8 L10.9 5 H7.1Z" fill-rule="evenodd"/><circle cx="5.3" cy="10.5" r="1" fill="#fff"/><circle cx="12.7" cy="10.5" r="1" fill="#fff"/></svg>
<div class="t" style="left:52.5px;top:651.7px;font-size:14.1px;line-height:14.1px;color:#5a6478;font-weight:normal;">Dynamic Fare</div>
<svg class="abs" style="left:188.6px;top:652.7px" width="8" height="10" viewBox="0 0 8 10"><path d="M2.2 1.2 L5.8 5 L2.2 8.8" fill="none" stroke="#5a6478" stroke-width="1.6" stroke-linecap="round" stroke-linejoin="round"/></svg>
<svg class="abs" style="left:20.6px;top:695.0px" width="18" height="18" viewBox="0 0 18 18" fill="#5e6a7d"><path d="M9 16 V5" stroke="#5e6a7d" stroke-width="1.2" fill="none"/><path d="M9 9 Q5 9 3.5 6.5 Q7 6 9 9Z M9 9 Q13 9 14.5 6.5 Q11 6 9 9Z M9 12.5 Q5.5 12.5 4 10.2 Q7.2 9.8 9 12.5Z M9 12.5 Q12.5 12.5 14 10.2 Q10.8 9.8 9 12.5Z M9 6 Q7 4.5 8.2 2 Q10.8 4 9 6Z"/><path d="M5 16 H13" stroke="#5e6a7d" stroke-width="1.2"/></svg>
<div class="t" style="left:52.5px;top:697.1px;font-size:14.1px;line-height:14.1px;color:#5a6478;font-weight:normal;">Driver Distributions</div>
<svg class="abs" style="left:188.6px;top:698.0px" width="8" height="10" viewBox="0 0 8 10"><path d="M2.2 1.2 L5.8 5 L2.2 8.8" fill="none" stroke="#5a6478" stroke-width="1.6" stroke-linecap="round" stroke-linejoin="round"/></svg>
<svg class="abs" style="left:20.6px;top:740.3px" width="18" height="18" viewBox="0 0 18 18" fill="#5e6a7d"><path d="M9 2 Q9.8 2 9.8 2.9 Q13.5 3.8 13.5 8 V11.5 L15 13.5 H3 L4.5 11.5 V8 Q4.5 3.8 8.2 2.9 Q8.2 2 9 2Z"/><path d="M7.2 14.5 H10.8 Q10.5 16.2 9 16.2 Q7.5 16.2 7.2 14.5Z"/></svg>
<div class="t" style="left:52.5px;top:742.4px;font-size:14.1px;line-height:14.1px;color:#5a6478;font-weight:normal;">Driver Alerts</div>
<svg class="abs" style="left:20.6px;top:785.7px" width="18" height="18" viewBox="0 0 18 18" fill="#5e6a7d"><path d="M2.5 11 V9 Q2.5 2.5 9 2.5 Q15.5 2.5 15.5 9 V11" fill="none" stroke="#5e6a7d" stroke-width="1.8"/><rect x="2" y="9.5" width="3.6" height="6" rx="1"/><rect x="12.4" y="9.5" width="3.6" height="6" rx="1"/></svg>
<div class="t" style="left:52.5px;top:787.7px;font-size:14.1px;line-height:14.1px;color:#5a6478;font-weight:normal;">Support Center</div>
<svg class="abs" style="left:188.6px;top:788.7px" width="8" height="10" viewBox="0 0 8 10"><path d="M2.2 1.2 L5.8 5 L2.2 8.8" fill="none" stroke="#5a6478" stroke-width="1.6" stroke-linecap="round" stroke-linejoin="round"/></svg>
<svg class="abs" style="left:20.6px;top:831.0px" width="18" height="18" viewBox="0 0 18 18" fill="#5e6a7d"><path d="M4 8 L5.5 4.2 Q6 3.2 7 3.2 H11 Q12 3.2 12.5 4.2 L14 8 Q15.5 8.5 15.5 10 V13 H14 V15 H12 V13 H6 V15 H4 V13 H2.5 V10 Q2.5 8.5 4 8Z M6.2 7.6 H11.8 L10.9 5 H7.1Z" fill-rule="evenodd"/><circle cx="5.3" cy="10.5" r="1" fill="#fff"/><circle cx="12.7" cy="10.5" r="1" fill="#fff"/></svg>
<div class="t" style="left:52.5px;top:833.1px;font-size:14.1px;line-height:14.1px;color:#5a6478;font-weight:normal;">Helping Material</div>
<svg class="abs" style="left:20.6px;top:876.4px" width="18" height="18" viewBox="0 0 18 18" fill="#5e6a7d"><path d="M1.5 7.5 Q1.5 3 7 3 Q12.5 3 12.5 7.5 Q12.5 12 7 12 Q5.8 12 4.8 11.6 L2 13 L2.8 10.6 Q1.5 9.3 1.5 7.5Z"/><path d="M13.5 6.8 Q16.8 7.6 16.8 10.5 Q16.8 12 15.8 13 L16.5 15 L14 13.9 Q13 14.3 11.8 14.3 Q8.8 14.3 7.6 12.8 Q13.6 12.4 13.5 6.8Z"/></svg>
<div class="t" style="left:52.5px;top:878.4px;font-size:14.1px;line-height:14.1px;color:#5a6478;font-weight:normal;">Invites</div>
<div class="t" style="left:52.5px;top:923.8px;font-size:14.1px;line-height:14.1px;color:#5a6478;font-weight:normal;">Earnings</div>
<div class="t" style="left:52.5px;top:969.1px;font-size:14.1px;line-height:14.1px;color:#5a6478;font-weight:normal;">Kpis</div>
<svg class="abs" style="left:188.6px;top:970.0px" width="8" height="10" viewBox="0 0 8 10"><path d="M2.2 1.2 L5.8 5 L2.2 8.8" fill="none" stroke="#5a6478" stroke-width="1.6" stroke-linecap="round" stroke-linejoin="round"/></svg>
<div class="abs" style="left:219px;top:110.6px;width:1252px;height:110px;overflow:hidden">
<div class="card" style="left:25.0px;top:12.0px;width:290px;height:88px"></div>
<svg class="abs" style="left:35.3px;top:38.4px" width="34.0" height="34.0" viewBox="-50 -50 100 100"><clipPath id="chans5255"><circle r="50"/></clipPath><g clip-path="url(#chans5255)"><rect x="-50" y="-50" width="100" height="100" fill="#f6c531"/><ellipse cx="0" cy="52" rx="40" ry="24" fill="#3c3f44"/><rect x="-8" y="10" width="16" height="20" fill="#d9a07a" opacity=".9"/><ellipse cx="0" cy="-5" rx="19" ry="24" fill="#d9a07a"/><path d="M-20 -8 Q-24 -38 0 -36 Q24 -38 20 -8 Q18 -24 0 -26 Q-18 -24 -20 -8Z" fill="#3a2a20"/><path d="M-17 2 Q-16 20 0 22 Q16 20 17 2 Q12 12 0 12 Q-12 12 -17 2Z" fill="#3a2a20" opacity=".55"/><circle cx="-7" cy="-6" r="1.8" fill="#222" opacity=".7"/><circle cx="7" cy="-6" r="1.8" fill="#222" opacity=".7"/><path d="M-6 8 Q0 12 6 8" fill="none" stroke="#fff" stroke-width="2" opacity=".7"/></g></svg>
<div class="t" style="left:79.8px;top:31.6px;font-size:10.4px;line-height:10.4px;color:#2e3440;font-weight:bold;">Hans William Breitweiser</div>
<div class="t" style="left:302.7px;top:31.9px;font-size:10px;line-height:10px;color:#6d55e0;font-weight:normal;transform:translateX(-100%);">Accepted</div>
<div class="t" style="left:79.8px;top:45.5px;font-size:9.4px;line-height:9.4px;color:#667080;font-weight:normal;">09/09/2021 2112</div>
<div class="t" style="left:79.8px;top:58.3px;font-size:9.48px;line-height:9.48px;color:#667080;font-weight:normal;">Trip accepted by Hans William Breitweiser (American</div>
<div class="t" style="left:79.8px;top:69.4px;font-size:9.48px;line-height:9.48px;color:#667080;font-weight:normal;">Logistics)</div>
<div class="card" style="left:326.9px;top:12.0px;width:290px;height:88px"></div>
<svg class="abs" style="left:337.2px;top:38.4px" width="34.0" height="34.0" viewBox="-50 -50 100 100"><clipPath id="ckarina35455"><circle r="50"/></clipPath><g clip-path="url(#ckarina35455)"><rect x="-50" y="-50" width="100" height="100" fill="#19b8d0"/><path d="M-28 -6 Q-32 -46 0 -46 Q32 -46 28 -6 L34 46 L-34 46 Z" fill="#111"/><ellipse cx="0" cy="52" rx="40" ry="24" fill="#c0392b"/><rect x="-8" y="10" width="16" height="20" fill="#e8b896" opacity=".9"/><ellipse cx="0" cy="-5" rx="19" ry="24" fill="#e8b896"/><path d="M-20 -2 Q-20 -34 2 -32 Q22 -32 20 -2 Q14 -22 -4 -24 Q-14 -20 -20 -2Z" fill="#111"/><circle cx="-7" cy="-6" r="1.8" fill="#222" opacity=".7"/><circle cx="7" cy="-6" r="1.8" fill="#222" opacity=".7"/><path d="M-6 8 Q0 12 6 8" fill="none" stroke="#fff" stroke-width="2" opacity=".7"/></g></svg>
<div class="t" style="left:381.7px;top:31.6px;font-size:10.4px;line-height:10.4px;color:#2e3440;font-weight:bold;">Karina Quinones</div>
<div class="t" style="left:604.6px;top:31.9px;font-size:10px;line-height:10px;color:#6d55e0;font-weight:normal;transform:translateX(-100%);">Offered</div>
<div class="t" style="left:381.7px;top:45.5px;font-size:9.4px;line-height:9.4px;color:#667080;font-weight:normal;">09/09/2021 2112</div>
<div class="t" style="left:381.7px;top:58.3px;font-size:9.48px;line-height:9.48px;color:#667080;font-weight:normal;">Karina Quinones forwarded a trip 9F81FD85F65B to</div>
<div class="t" style="left:381.7px;top:69.4px;font-size:9.48px;line-height:9.48px;color:#667080;font-weight:normal;">another driver</div>
<div class="card" style="left:628.8px;top:12.0px;width:290px;height:88px"></div>
<svg class="abs" style="left:639.1px;top:38.4px" width="34.0" height="34.0" viewBox="-50 -50 100 100"><clipPath id="ckarina65655"><circle r="50"/></clipPath><g clip-path="url(#ckarina65655)"><rect x="-50" y="-50" width="100" height="100" fill="#19b8d0"/><path d="M-28 -6 Q-32 -46 0 -46 Q32 -46 28 -6 L34 46 L-34 46 Z" fill="#111"/><ellipse cx="0" cy="52" rx="40" ry="24" fill="#c0392b"/><rect x="-8" y="10" width="16" height="20" fill="#e8b896" opacity=".9"/><ellipse cx="0" cy="-5" rx="19" ry="24" fill="#e8b896"/><path d="M-20 -2 Q-20 -34 2 -32 Q22 -32 20 -2 Q14 -22 -4 -24 Q-14 -20 -20 -2Z" fill="#111"/><circle cx="-7" cy="-6" r="1.8" fill="#222" opacity=".7"/><circle cx="7" cy="-6" r="1.8" fill="#222" opacity=".7"/><path d="M-6 8 Q0 12 6 8" fill="none" stroke="#fff" stroke-width="2" opacity=".7"/></g></svg>
<div class="t" style="left:683.6px;top:31.6px;font-size:10.4px;line-height:10.4px;color:#2e3440;font-weight:bold;">Karina Quinones</div>
<div class="t" style="left:906.5px;top:31.9px;font-size:10px;line-height:10px;color:#6d55e0;font-weight:normal;transform:translateX(-100%);">Offered</div>
<div class="t" style="left:683.6px;top:45.5px;font-size:9.4px;line-height:9.4px;color:#667080;font-weight:normal;">09/09/2021 2112</div>
<div class="t" style="left:683.6px;top:58.3px;font-size:9.48px;line-height:9.48px;color:#667080;font-weight:normal;">Karina Quinones delayed a trip 9F81FD85F65B to</div>
<div class="t" style="left:683.6px;top:69.4px;font-size:9.48px;line-height:9.48px;color:#667080;font-weight:normal;">complete later</div>
<div class="card" style="left:930.7px;top:12.0px;width:290px;height:88px"></div>
<svg class="abs" style="left:941.0px;top:38.4px" width="34.0" height="34.0" viewBox="-50 -50 100 100"><clipPath id="chans95755"><circle r="50"/></clipPath><g clip-path="url(#chans95755)"><rect x="-50" y="-50" width="100" height="100" fill="#f6c531"/><ellipse cx="0" cy="52" rx="40" ry="24" fill="#3c3f44"/><rect x="-8" y="10" width="16" height="20" fill="#d9a07a" opacity=".9"/><ellipse cx="0" cy="-5" rx="19" ry="24" fill="#d9a07a"/><path d="M-20 -8 Q-24 -38 0 -36 Q24 -38 20 -8 Q18 -24 0 -26 Q-18 -24 -20 -8Z" fill="#3a2a20"/><path d="M-17 2 Q-16 20 0 22 Q16 20 17 2 Q12 12 0 12 Q-12 12 -17 2Z" fill="#3a2a20" opacity=".55"/><circle cx="-7" cy="-6" r="1.8" fill="#222" opacity=".7"/><circle cx="7" cy="-6" r="1.8" fill="#222" opacity=".7"/><path d="M-6 8 Q0 12 6 8" fill="none" stroke="#fff" stroke-width="2" opacity=".7"/></g></svg>
<div class="t" style="left:985.5px;top:37.1px;font-size:10.4px;line-height:10.4px;color:#2e3440;font-weight:bold;">Melissa Marie</div>
<div class="t" style="left:1208.4px;top:37.4px;font-size:10px;line-height:10px;color:#6d55e0;font-weight:normal;transform:translateX(-100%);">Offered</div>
<div class="t" style="left:985.5px;top:51.0px;font-size:9.4px;line-height:9.4px;color:#667080;font-weight:normal;">09/09/2021 2039</div>
<div class="t" style="left:985.5px;top:63.8px;font-size:9.48px;line-height:9.48px;color:#667080;font-weight:normal;">Trip offered to Melissa Marie (Dispatch Cab)</div>
<div class="card" style="left:1232.6px;top:12.0px;width:290px;height:88px"></div>
<svg class="abs" style="left:1242.9px;top:38.4px" width="34.0" height="34.0" viewBox="-50 -50 100 100"><clipPath id="cgen4125955"><circle r="50"/></clipPath><g clip-path="url(#cgen4125955)"><rect x="-50" y="-50" width="100" height="100" fill="#7a4a3a"/><path d="M-28 -6 Q-32 -46 0 -46 Q32 -46 28 -6 L34 46 L-34 46 Z" fill="#3a2418"/><ellipse cx="0" cy="52" rx="40" ry="24" fill="#555"/><rect x="-8" y="10" width="16" height="20" fill="#c68a6a" opacity=".9"/><ellipse cx="0" cy="-5" rx="19" ry="24" fill="#c68a6a"/><path d="M-20 -2 Q-20 -34 2 -32 Q22 -32 20 -2 Q14 -22 -4 -24 Q-14 -20 -20 -2Z" fill="#3a2418"/><circle cx="-7" cy="-6" r="1.8" fill="#222" opacity=".7"/><circle cx="7" cy="-6" r="1.8" fill="#222" opacity=".7"/><path d="M-6 8 Q0 12 6 8" fill="none" stroke="#fff" stroke-width="2" opacity=".7"/></g></svg>
</div>
<div class="abs" style="left:1482.8px;top:122.3px;width:131.3px;height:39.4px;background:#6a52d9;border-radius:5px"></div>
<div class="t" style="left:1548.5px;top:136.6px;font-size:11px;line-height:11px;color:#fff;font-weight:normal;transform:translateX(-50%);">Create New Trips</div>
<div class="abs" style="left:1483px;top:168.2px;width:63.3px;height:42.4px;background:#13a9b8;border-radius:5px"></div>
<div class="t" style="left:1514.6px;top:184.4px;font-size:10.4px;line-height:10.4px;color:#fff;font-weight:bold;transform:translateX(-50%);">See All</div>
<div class="abs" style="left:1550.5px;top:168.2px;width:63.4px;height:42.4px;background:#13a9b8;border-radius:5px"></div>
<svg class="abs" style="left:1572px;top:179px" width="20" height="20" viewBox="0 0 20 20" stroke="#fff" stroke-width="1.7" fill="none" stroke-linecap="round"><path d="M5 2 V18 M10 2 V18 M15 2 V18"/><circle cx="5" cy="12.5" r="2" fill="#13a9b8"/><circle cx="10" cy="7" r="2" fill="#13a9b8"/><circle cx="15" cy="12.5" r="2" fill="#13a9b8"/></svg>
<div class="card" style="left:244.8px;top:223.4px;width:324px;height:111.3px;border-radius:6px"></div>
<div class="t" style="left:256.3px;top:237.4px;font-size:10.8px;line-height:10.8px;color:#5746e0;font-weight:bold;">Available Drivers</div>
<div class="t" style="left:557.2px;top:236.8px;font-size:12px;line-height:12px;color:#5746e0;font-weight:bold;transform:translateX(-100%);">3</div>
<div class="t" style="left:256.3px;top:261.3px;font-size:10.8px;line-height:10.8px;color:#ea4660;font-weight:bold;">Busy Drivers</div>
<div class="t" style="left:557.2px;top:260.7px;font-size:12px;line-height:12px;color:#ea4660;font-weight:bold;transform:translateX(-100%);">0</div>
<div class="t" style="left:256.3px;top:285.2px;font-size:10.8px;line-height:10.8px;color:#1e2329;font-weight:bold;">Offline Drivers</div>
<div class="t" style="left:557.2px;top:284.6px;font-size:12px;line-height:12px;color:#1e2329;font-weight:bold;transform:translateX(-100%);">2</div>
<div class="t" style="left:256.3px;top:309.1px;font-size:10.8px;line-height:10.8px;color:#9ea7b0;font-weight:bold;">Trips Inprogress</div>
<div class="t" style="left:557.2px;top:308.5px;font-size:12px;line-height:12px;color:#9ea7b0;font-weight:bold;transform:translateX(-100%);">9</div>
<svg class="abs" style="left:347px;top:236px" width="13" height="13" viewBox="0 0 13 13" fill="none" stroke="#333" stroke-width="1.3"><path d="M2 6 A4.5 4.5 0 0 1 10.5 4.5 M11 7 A4.5 4.5 0 0 1 2.5 8.5"/><path d="M10.8 1.8 V4.8 H7.8 M2.2 11.2 V8.2 H5.2"/></svg>
<div class="card" style="left:245px;top:347.5px;width:323px;height:55.5px;border-radius:6px"></div>
<svg class="abs" style="left:254.6px;top:358.2px" width="34.0" height="34.0" viewBox="-50 -50 100 100"><clipPath id="chans271375"><circle r="50"/></clipPath><g clip-path="url(#chans271375)"><rect x="-50" y="-50" width="100" height="100" fill="#f6c531"/><ellipse cx="0" cy="52" rx="40" ry="24" fill="#3c3f44"/><rect x="-8" y="10" width="16" height="20" fill="#d9a07a" opacity=".9"/><ellipse cx="0" cy="-5" rx="19" ry="24" fill="#d9a07a"/><path d="M-20 -8 Q-24 -38 0 -36 Q24 -38 20 -8 Q18 -24 0 -26 Q-18 -24 -20 -8Z" fill="#3a2a20"/><path d="M-17 2 Q-16 20 0 22 Q16 20 17 2 Q12 12 0 12 Q-12 12 -17 2Z" fill="#3a2a20" opacity=".55"/><circle cx="-7" cy="-6" r="1.8" fill="#222" opacity=".7"/><circle cx="7" cy="-6" r="1.8" fill="#222" opacity=".7"/><path d="M-6 8 Q0 12 6 8" fill="none" stroke="#fff" stroke-width="2" opacity=".7"/></g></svg>
<div class="t" style="left:299.4px;top:370.3px;font-size:10.1px;line-height:10.1px;color:#2e3440;font-weight:normal;">Hans William Breitweiser</div>
<div class="abs" style="left:537.5px;top:371.5px;width:21px;height:7px;border-radius:4px;background:#7b6de0"></div>
<div class="card" style="left:245px;top:415.2px;width:323px;height:55.5px;border-radius:6px"></div>
<svg class="abs" style="left:254.6px;top:425.9px" width="34.0" height="34.0" viewBox="-50 -50 100 100"><clipPath id="cregina271442"><circle r="50"/></clipPath><g clip-path="url(#cregina271442)"><rect x="-50" y="-50" width="100" height="100" fill="#f08a24"/><path d="M-28 -6 Q-32 -46 0 -46 Q32 -46 28 -6 L34 46 L-34 46 Z" fill="#8a3b12"/><ellipse cx="0" cy="52" rx="40" ry="24" fill="#ddd"/><rect x="-8" y="10" width="16" height="20" fill="#e9b48e" opacity=".9"/><ellipse cx="0" cy="-5" rx="19" ry="24" fill="#e9b48e"/><path d="M-20 -2 Q-20 -34 2 -32 Q22 -32 20 -2 Q14 -22 -4 -24 Q-14 -20 -20 -2Z" fill="#8a3b12"/><circle cx="-7" cy="-6" r="1.8" fill="#222" opacity=".7"/><circle cx="7" cy="-6" r="1.8" fill="#222" opacity=".7"/><path d="M-6 8 Q0 12 6 8" fill="none" stroke="#fff" stroke-width="2" opacity=".7"/></g></svg>
<div class="t" style="left:299.4px;top:438.0px;font-size:10.1px;line-height:10.1px;color:#2e3440;font-weight:normal;">Regina O</div>
<div class="abs" style="left:537.5px;top:439.2px;width:21px;height:7px;border-radius:4px;background:#7b6de0"></div>
<div class="card" style="left:245px;top:483.0px;width:323px;height:55.5px;border-radius:6px"></div>
<svg class="abs" style="left:254.6px;top:493.7px" width="34.0" height="34.0" viewBox="-50 -50 100 100"><clipPath id="cmelissa271510"><circle r="50"/></clipPath><g clip-path="url(#cmelissa271510)"><rect x="-50" y="-50" width="100" height="100" fill="#1b8a3a"/><path d="M-28 -6 Q-32 -46 0 -46 Q32 -46 28 -6 L34 46 L-34 46 Z" fill="#5a3520"/><ellipse cx="0" cy="52" rx="40" ry="24" fill="#f0f0f0"/><rect x="-8" y="10" width="16" height="20" fill="#e2ad86" opacity=".9"/><ellipse cx="0" cy="-5" rx="19" ry="24" fill="#e2ad86"/><path d="M-20 -2 Q-20 -34 2 -32 Q22 -32 20 -2 Q14 -22 -4 -24 Q-14 -20 -20 -2Z" fill="#5a3520"/><circle cx="-7" cy="-6" r="1.8" fill="#222" opacity=".7"/><circle cx="7" cy="-6" r="1.8" fill="#222" opacity=".7"/><path d="M-6 8 Q0 12 6 8" fill="none" stroke="#fff" stroke-width="2" opacity=".7"/></g></svg>
<div class="t" style="left:299.4px;top:505.8px;font-size:10.1px;line-height:10.1px;color:#2e3440;font-weight:normal;">Melissa Marie</div>
<div class="abs" style="left:537.5px;top:507.0px;width:21px;height:7px;border-radius:4px;background:#7b6de0"></div>
<div class="card" style="left:245px;top:550.8px;width:323px;height:55.5px;border-radius:6px"></div>
<svg class="abs" style="left:254.6px;top:561.5px" width="34.0" height="34.0" viewBox="-50 -50 100 100"><clipPath id="ckarina271578"><circle r="50"/></clipPath><g clip-path="url(#ckarina271578)"><rect x="-50" y="-50" width="100" height="100" fill="#19b8d0"/><path d="M-28 -6 Q-32 -46 0 -46 Q32 -46 28 -6 L34 46 L-34 46 Z" fill="#111"/><ellipse cx="0" cy="52" rx="40" ry="24" fill="#c0392b"/><rect x="-8" y="10" width="16" height="20" fill="#e8b896" opacity=".9"/><ellipse cx="0" cy="-5" rx="19" ry="24" fill="#e8b896"/><path d="M-20 -2 Q-20 -34 2 -32 Q22 -32 20 -2 Q14 -22 -4 -24 Q-14 -20 -20 -2Z" fill="#111"/><circle cx="-7" cy="-6" r="1.8" fill="#222" opacity=".7"/><circle cx="7" cy="-6" r="1.8" fill="#222" opacity=".7"/><path d="M-6 8 Q0 12 6 8" fill="none" stroke="#fff" stroke-width="2" opacity=".7"/></g></svg>
<div class="t" style="left:299.4px;top:573.5px;font-size:10.1px;line-height:10.1px;color:#2e3440;font-weight:normal;">Karina Quinones</div>
<div class="abs" style="left:537.5px;top:574.8px;width:21px;height:7px;border-radius:4px;background:#5f6670"></div>
<div class="card" style="left:245px;top:618.5px;width:323px;height:55.5px;border-radius:6px"></div>
<svg class="abs" style="left:254.6px;top:629.2px" width="34.0" height="34.0" viewBox="-50 -50 100 100"><clipPath id="cbryan271646"><circle r="50"/></clipPath><g clip-path="url(#cbryan271646)"><rect x="-50" y="-50" width="100" height="100" fill="#17a98f"/><ellipse cx="0" cy="52" rx="40" ry="24" fill="#2f3a40"/><rect x="-8" y="10" width="16" height="20" fill="#d9a583" opacity=".9"/><ellipse cx="0" cy="-5" rx="19" ry="24" fill="#d9a583"/><path d="M-20 -8 Q-24 -38 0 -36 Q24 -38 20 -8 Q18 -24 0 -26 Q-18 -24 -20 -8Z" fill="#3b2a1e"/><path d="M-17 2 Q-16 20 0 22 Q16 20 17 2 Q12 12 0 12 Q-12 12 -17 2Z" fill="#3b2a1e" opacity=".55"/><circle cx="-7" cy="-6" r="1.8" fill="#222" opacity=".7"/><circle cx="7" cy="-6" r="1.8" fill="#222" opacity=".7"/><path d="M-6 8 Q0 12 6 8" fill="none" stroke="#fff" stroke-width="2" opacity=".7"/></g></svg>
<div class="t" style="left:299.4px;top:641.3px;font-size:10.1px;line-height:10.1px;color:#2e3440;font-weight:normal;">Bryan Herrera</div>
<div class="abs" style="left:537.5px;top:642.5px;width:21px;height:7px;border-radius:4px;background:#5f6670"></div>
<div class="card" style="left:592.4px;top:223.4px;width:1022.3px;height:713.6px;border-radius:6px"></div>
<svg class="abs" style="left:597.9px;top:228px" width="1010.5" height="704" viewBox="0 0 1010.5 704" font-family="Liberation Sans, sans-serif">
<rect width="1010.5" height="704" fill="#e8e8e5"/>
<ellipse cx="150" cy="150" rx="110" ry="90" fill="#e0e0dc" opacity="0.25"/>
<ellipse cx="210" cy="250" rx="90" ry="120" fill="#e0e0dc" opacity="0.23"/>
<ellipse cx="120" cy="320" rx="80" ry="60" fill="#e0e0dc" opacity="0.17"/>
<ellipse cx="250" cy="60" rx="70" ry="50" fill="#e0e0dc" opacity="0.20"/>
<ellipse cx="520" cy="40" rx="60" ry="40" fill="#e0e0dc" opacity="0.15"/>
<ellipse cx="980" cy="520" rx="60" ry="200" fill="#e0e0dc" opacity="0.45"/>
<ellipse cx="990" cy="300" rx="40" ry="150" fill="#e0e0dc" opacity="0.25"/>
<polygon points="330.0,230.0 430.0,215.0 520.0,290.0 610.0,320.0 660.0,380.0 650.0,520.0 700.0,640.0 660.0,704.0 370.0,704.0 360.0,610.0 390.0,520.0 330.0,410.0 300.0,300.0" fill="#ebebea"/>
<rect x="13" y="506" width="165" height="160" fill="#e3e3e3" opacity=".8"/>
<path d="M923 163 H980 L980 141 L1010 141 V391 H969 V293 H923Z" fill="#c5e3c4"/><path d="M975 160 Q995 200 1010 230 V391 H985 Q975 300 985 250Z" fill="#b5d8b3" opacity=".6"/>
<path d="M130 45 Q150 50 165 60 L175 95 Q150 80 130 65Z" fill="#b9dcb5"/>
<rect x="470" y="440" width="10" height="7" fill="#c8e6c9" transform="rotate(-20 470 440)"/>
<rect x="560" y="520" width="10" height="7" fill="#c8e6c9" transform="rotate(-20 560 520)"/>
<rect x="520" y="600" width="10" height="7" fill="#c8e6c9" transform="rotate(-20 520 600)"/>
<rect x="600" y="470" width="10" height="7" fill="#c8e6c9" transform="rotate(-20 600 470)"/>
<rect x="455" y="650" width="10" height="7" fill="#c8e6c9" transform="rotate(-20 455 650)"/>
<rect x="370" y="660" width="10" height="7" fill="#c8e6c9" transform="rotate(-20 370 660)"/>
<rect x="395" y="675" width="10" height="7" fill="#c8e6c9" transform="rotate(-20 395 675)"/>
<clipPath id="urb"><polygon points="330.0,230.0 430.0,215.0 520.0,290.0 610.0,320.0 660.0,380.0 650.0,520.0 700.0,640.0 660.0,704.0 370.0,704.0 360.0,610.0 390.0,520.0 330.0,410.0 300.0,300.0"/></clipPath>
<g clip-path="url(#urb)" stroke="#fff" stroke-width="2" fill="none" opacity=".9">
<path d="M710.5 -419.9 L1398.8 563.1"/>
<path d="M690.1 -405.6 L1378.4 577.4"/>
<path d="M663.1 -386.6 L1351.4 596.3"/>
<path d="M646.6 -375.1 L1334.9 607.8"/>
<path d="M620.0 -356.5 L1308.3 626.5"/>
<path d="M599.5 -342.1 L1287.8 640.8"/>
<path d="M580.4 -328.8 L1268.7 654.2"/>
<path d="M553.9 -310.2 L1242.2 672.8"/>
<path d="M536.4 -297.9 L1224.7 685.0"/>
<path d="M510.4 -279.7 L1198.7 703.2"/>
<path d="M491.8 -266.8 L1180.1 716.2"/>
<path d="M469.5 -251.1 L1157.8 731.9"/>
<path d="M444.1 -233.3 L1132.4 749.6"/>
<path d="M418.0 -215.1 L1106.3 767.9"/>
<path d="M402.8 -204.4 L1091.1 778.5"/>
<path d="M379.7 -188.3 L1068.0 794.7"/>
<path d="M353.7 -170.0 L1041.9 813.0"/>
<path d="M328.4 -152.3 L1016.7 830.7"/>
<path d="M309.9 -139.4 L998.2 843.6"/>
<path d="M289.6 -125.1 L977.9 857.9"/>
<path d="M261.8 -105.6 L950.0 877.3"/>
<path d="M248.8 -96.6 L937.1 886.4"/>
<path d="M218.7 -75.5 L907.0 907.5"/>
<path d="M202.2 -63.9 L890.4 919.1"/>
<path d="M181.5 -49.4 L869.8 933.6"/>
<path d="M159.6 -34.1 L847.9 948.9"/>
<path d="M135.6 -17.3 L823.9 965.7"/>
<path d="M108.5 1.7 L796.8 984.6"/>
<path d="M92.6 12.8 L780.9 995.8"/>
<path d="M66.6 31.0 L754.9 1014.0"/>
<path d="M43.9 46.9 L732.2 1029.9"/>
<path d="M24.4 60.5 L712.7 1043.5"/>
<path d="M0.6 77.2 L688.9 1060.2"/>
<path d="M-16.8 89.4 L671.5 1072.4"/>
<path d="M-38.9 104.9 L649.4 1087.8"/>
<path d="M-62.4 121.4 L625.9 1104.3"/>
<path d="M-89.2 140.1 L599.1 1123.1"/>
<path d="M-108.8 153.8 L579.5 1136.8"/>
<path d="M-129.8 168.6 L558.5 1151.5"/>
<path d="M-154.6 185.9 L533.7 1168.9"/>
<path d="M-175.4 200.5 L512.8 1183.5"/>
<path d="M-196.1 214.9 L492.2 1197.9"/>
<path d="M-223.0 233.8 L465.3 1216.8"/>
<path d="M-244.2 248.6 L444.1 1231.6"/>
<path d="M-261.9 261.0 L426.4 1244.0"/>
<path d="M-287.2 278.8 L401.1 1261.7"/>
<path d="M-308.9 293.9 L379.4 1276.9"/>
<path d="M-334.4 311.8 L353.9 1294.8"/>
<path d="M-355.1 326.3 L333.2 1309.3"/>
<path d="M-372.9 338.7 L315.4 1321.7"/>
<path d="M550.8 -513.5 L-432.2 174.8"/>
<path d="M561.7 -498.0 L-421.3 190.3"/>
<path d="M581.9 -469.1 L-401.1 219.2"/>
<path d="M602.4 -439.9 L-380.6 248.4"/>
<path d="M615.3 -421.4 L-367.7 266.9"/>
<path d="M635.8 -392.1 L-347.2 296.1"/>
<path d="M650.0 -371.9 L-333.0 316.4"/>
<path d="M672.8 -339.3 L-310.2 349.0"/>
<path d="M691.3 -312.8 L-291.6 375.5"/>
<path d="M707.6 -289.6 L-275.4 398.7"/>
<path d="M727.8 -260.7 L-255.2 427.5"/>
<path d="M741.1 -241.8 L-241.9 446.5"/>
<path d="M761.9 -212.0 L-221.1 476.3"/>
<path d="M778.9 -187.8 L-204.1 500.5"/>
<path d="M796.5 -162.6 L-186.4 525.7"/>
<path d="M813.3 -138.6 L-169.7 549.7"/>
<path d="M834.2 -108.8 L-148.8 579.5"/>
<path d="M852.8 -82.2 L-130.2 606.1"/>
<path d="M866.8 -62.2 L-116.2 626.1"/>
<path d="M886.1 -34.6 L-96.9 653.7"/>
<path d="M899.1 -16.2 L-83.9 672.1"/>
<path d="M922.0 16.6 L-61.0 704.9"/>
<path d="M939.3 41.4 L-43.7 729.7"/>
<path d="M959.9 70.7 L-23.1 759.0"/>
<path d="M976.3 94.2 L-6.7 782.4"/>
<path d="M989.8 113.4 L6.8 801.7"/>
<path d="M1008.4 139.9 L25.4 828.2"/>
<path d="M1028.4 168.6 L45.4 856.9"/>
<path d="M1041.0 186.6 L58.0 874.9"/>
<path d="M1062.3 217.0 L79.3 905.3"/>
<path d="M1077.7 239.0 L94.7 927.3"/>
<path d="M1095.1 263.8 L112.1 952.1"/>
<path d="M1112.4 288.6 L129.4 976.8"/>
<path d="M1135.9 322.1 L152.9 1010.4"/>
<path d="M1148.5 340.1 L165.6 1028.4"/>
<path d="M1167.3 366.9 L184.3 1055.2"/>
<path d="M1186.2 393.9 L203.2 1082.2"/>
<path d="M1207.8 424.8 L224.9 1113.1"/>
<path d="M1219.3 441.2 L236.3 1129.5"/>
<path d="M1240.0 470.8 L257.0 1159.1"/>
<path d="M1258.6 497.3 L275.6 1185.6"/>
<path d="M1279.1 526.6 L296.1 1214.8"/>
<path d="M1296.3 551.2 L313.3 1239.5"/>
<path d="M1314.5 577.1 L331.5 1265.4"/>
<path d="M1327.5 595.8 L344.6 1284.1"/>
<path d="M1346.4 622.8 L363.4 1311.0"/>
<path d="M1363.8 647.5 L380.8 1335.8"/>
<path d="M1385.8 678.9 L402.8 1367.2"/>
<path d="M1404.1 705.2 L421.1 1393.5"/>
<path d="M1415.4 721.3 L432.4 1409.6"/>
</g>
<g stroke="#fff" stroke-width="1.6" fill="none">
<path d="M504 9 L556 104 M521 43 L611 52 M556 104 L741 115 M604 0 L626 152 M741 0 V274 M591 206 H741 M591 206 V256 M674 206 V274 M695 206 V274 H741 M741 161 H808 V226 M741 115 H830 V204 M721 43 L669 117 L634 204 M924 143 V352 M880 174 H920 V196"/>
<path d="M787.0 70 V196" stroke-width="1.2"/>
<path d="M799.5 70 V184" stroke-width="1.2"/>
<path d="M812.0 70 V172" stroke-width="1.2"/>
<path d="M824.5 70 V196" stroke-width="1.2"/>
<path d="M837.0 70 V184" stroke-width="1.2"/>
<path d="M849.5 70 V172" stroke-width="1.2"/>
<path d="M862.0 70 V196" stroke-width="1.2"/>
<path d="M874.5 70 V184" stroke-width="1.2"/>
<path d="M887.0 70 V172" stroke-width="1.2"/>
<path d="M899.5 70 V196" stroke-width="1.2"/>
<path d="M787 70 H900" stroke-width="1.2"/>
<path d="M787 83 H880" stroke-width="1.2"/>
<path d="M787 96 H900" stroke-width="1.2"/>
<path d="M787 109 H880" stroke-width="1.2"/>
<path d="M787 122 H900" stroke-width="1.2"/>
<path d="M787 135 H880" stroke-width="1.2"/>
<path d="M787 148 H900" stroke-width="1.2"/>
<path d="M787 161 H880" stroke-width="1.2"/>
<path d="M787 174 H900" stroke-width="1.2"/>
<path d="M787 187 H880" stroke-width="1.2"/>
<path d="M786 526 H917 M786 526 V587 M800 526 V580 M815 526 V580 M830 526 V580 M845 526 V580 M860 526 V580 M875 526 V580 M890 526 V570 M905 526 V570 M786 560 H880" stroke-width="1.2"/>
<path d="M630 539 L765 526 L895 439 L926 395 V352"/>
<path d="M0 88 Q60 80 120 100" stroke-width="1"/>
<path d="M156 0 L217 96 L278 183 L330 261 L391 352 L430 420 L470 520 M170 0 L230 90 L290 175 M200 566 L143 704 M210 560 L290 548 M300 600 L260 704 M330 540 L400 704"/>
</g>
<path d="M143.0 0.0 L165.0 43.0 L183.0 100.0 L217.0 130.0 L243.0 139.0 L261.0 174.0 L265.0 226.0 L252.0 256.0 L261.0 283.0 L304.0 289.0 L326.0 313.0 L330.0 352.0 L330.0 395.0 L348.0 443.0 L361.0 491.0 L365.0 535.0 L356.0 622.0 L370.0 665.0 L391.0 704.0" fill="none" stroke="#8fc4f2" stroke-width="2.6" stroke-linejoin="round"/>
<path d="M0.0 630.0 L157.0 608.0 L209.0 587.0 L261.0 581.0 L417.0 545.0 L435.0 548.0 L504.0 585.0 L604.0 639.0 L625.0 660.0" fill="none" stroke="#e8bf53" stroke-width="4.8" stroke-linejoin="round" stroke-linecap="round"/><path d="M0.0 630.0 L157.0 608.0 L209.0 587.0 L261.0 581.0 L417.0 545.0 L435.0 548.0 L504.0 585.0 L604.0 639.0 L625.0 660.0" fill="none" stroke="#f8d66f" stroke-width="3.5999999999999996" stroke-linejoin="round" stroke-linecap="round"/>
<path d="M237.0 565.0 L304.0 517.0 L361.0 493.0 L483.0 478.0 L540.0 470.0" fill="none" stroke="#e8bf53" stroke-width="4.08" stroke-linejoin="round" stroke-linecap="round"/><path d="M237.0 565.0 L304.0 517.0 L361.0 493.0 L483.0 478.0 L540.0 470.0" fill="none" stroke="#f8d66f" stroke-width="2.88" stroke-linejoin="round" stroke-linecap="round"/>
<path d="M400.0 539.0 L448.0 517.0 L504.0 504.0 L565.0 487.0" fill="none" stroke="#e8bf53" stroke-width="4.08" stroke-linejoin="round" stroke-linecap="round"/><path d="M400.0 539.0 L448.0 517.0 L504.0 504.0 L565.0 487.0" fill="none" stroke="#f8d66f" stroke-width="2.88" stroke-linejoin="round" stroke-linecap="round"/>
<path d="M443.0 582.0 L455.0 620.0 L480.0 660.0 L504.0 691.0 L515.0 704.0" fill="none" stroke="#e8bf53" stroke-width="4.08" stroke-linejoin="round" stroke-linecap="round"/><path d="M443.0 582.0 L455.0 620.0 L480.0 660.0 L504.0 691.0 L515.0 704.0" fill="none" stroke="#f8d66f" stroke-width="2.88" stroke-linejoin="round" stroke-linecap="round"/>
<path d="M478.0 395.0 L485.0 440.0 L483.0 478.0 L478.0 520.0" fill="none" stroke="#e8bf53" stroke-width="4.08" stroke-linejoin="round" stroke-linecap="round"/><path d="M478.0 395.0 L485.0 440.0 L483.0 478.0 L478.0 520.0" fill="none" stroke="#f8d66f" stroke-width="2.88" stroke-linejoin="round" stroke-linecap="round"/>
<path d="M1010.0 115.0 L934.0 148.0 L713.0 237.0 L604.0 287.0 L539.0 348.0 L504.0 374.0 L470.0 430.0 L455.0 480.0" fill="none" stroke="#e8bf53" stroke-width="4.8" stroke-linejoin="round" stroke-linecap="round"/><path d="M1010.0 115.0 L934.0 148.0 L713.0 237.0 L604.0 287.0 L539.0 348.0 L504.0 374.0 L470.0 430.0 L455.0 480.0" fill="none" stroke="#f8d66f" stroke-width="3.5999999999999996" stroke-linejoin="round" stroke-linecap="round"/>
<path d="M204.0 0.0 L237.0 52.0 L278.0 93.0 L330.0 148.0 L374.0 187.0 L404.0 235.0 L430.0 265.0 L496.0 348.0 L543.0 426.0 L574.0 500.0 L600.0 587.0 L617.0 652.0 L639.0 704.0" fill="none" stroke="#e8bf53" stroke-width="4.8" stroke-linejoin="round" stroke-linecap="round"/><path d="M204.0 0.0 L237.0 52.0 L278.0 93.0 L330.0 148.0 L374.0 187.0 L404.0 235.0 L430.0 265.0 L496.0 348.0 L543.0 426.0 L574.0 500.0 L600.0 587.0 L617.0 652.0 L639.0 704.0" fill="none" stroke="#f8d66f" stroke-width="3.5999999999999996" stroke-linejoin="round" stroke-linecap="round"/>
<rect x="202.9" y="82.5" width="24.2" height="13" rx="6.5" fill="#fff" stroke="#777" stroke-width="1"/><text x="215.0" y="92.6" font-size="9" fill="#444" text-anchor="middle">185</text>
<rect x="298.6" y="195.0" width="26.8" height="12" fill="#fff" stroke="#777" stroke-width="1"/><text x="312.0" y="204.6" font-size="9" fill="#555" text-anchor="middle">D051</text>
<rect x="250.6" y="276.0" width="26.8" height="12" fill="#fff" stroke="#777" stroke-width="1"/><text x="264.0" y="285.6" font-size="9" fill="#555" text-anchor="middle">D013</text>
<rect x="348.9" y="259.5" width="24.2" height="13" rx="6.5" fill="#fff" stroke="#777" stroke-width="1"/><text x="361.0" y="269.6" font-size="9" fill="#444" text-anchor="middle">320</text>
<rect x="335.9" y="299.5" width="24.2" height="13" rx="6.5" fill="#fff" stroke="#777" stroke-width="1"/><text x="348.0" y="309.6" font-size="9" fill="#444" text-anchor="middle">185</text>
<rect x="466.6" y="232.0" width="26.8" height="12" fill="#fff" stroke="#777" stroke-width="1"/><text x="480.0" y="241.6" font-size="9" fill="#555" text-anchor="middle">D032</text>
<rect x="463.6" y="246.0" width="26.8" height="12" fill="#fff" stroke="#777" stroke-width="1"/><text x="477.0" y="255.6" font-size="9" fill="#555" text-anchor="middle">D031</text>
<path d="M422 263 Q430 260 438 263 Q439 274 430 279 Q421 274 422 263Z" fill="#3a6fc4" stroke="#fff" stroke-width="1"/><path d="M422 263 Q430 260 438 263 L438.2 266 H421.8Z" fill="#d33"/><text x="430.0" y="274.5" font-size="8.5" font-weight="bold" fill="#fff" text-anchor="middle">25</text>
<rect x="669.6" y="110.0" width="26.8" height="12" fill="#fff" stroke="#777" stroke-width="1"/><text x="683.0" y="119.6" font-size="9" fill="#555" text-anchor="middle">D066</text>
<rect x="973.6" y="87.0" width="26.8" height="12" fill="#fff" stroke="#777" stroke-width="1"/><text x="987.0" y="96.6" font-size="9" fill="#555" text-anchor="middle">D087</text>
<rect x="794.6" y="-6.0" width="26.8" height="12" fill="#fff" stroke="#777" stroke-width="1"/><text x="808.0" y="3.6" font-size="9" fill="#555" text-anchor="middle">D068</text>
<path d="M701 232 H717 Q718 240 709 249 Q700 240 701 232Z" fill="#fff" stroke="#777" stroke-width="1"/><text x="709.0" y="243.0" font-size="8.5" fill="#333" text-anchor="middle">70</text>
<rect x="327.6" y="525.0" width="26.8" height="12" fill="#fff" stroke="#777" stroke-width="1"/><text x="341.0" y="534.6" font-size="9" fill="#555" text-anchor="middle">C051</text>
<rect x="276.6" y="549.0" width="26.8" height="12" fill="#fff" stroke="#777" stroke-width="1"/><text x="290.0" y="558.6" font-size="9" fill="#555" text-anchor="middle">C045</text>
<rect x="325.9" y="604.5" width="24.2" height="13" rx="6.5" fill="#fff" stroke="#777" stroke-width="1"/><text x="338.0" y="614.6" font-size="9" fill="#444" text-anchor="middle">359</text>
<rect x="303.6" y="654.0" width="26.8" height="12" fill="#fff" stroke="#777" stroke-width="1"/><text x="317.0" y="663.6" font-size="9" fill="#555" text-anchor="middle">C041</text>
<rect x="401.9" y="633.5" width="24.2" height="13" rx="6.5" fill="#fff" stroke="#777" stroke-width="1"/><text x="414.0" y="643.6" font-size="9" fill="#444" text-anchor="middle">372</text>
<rect x="450.6" y="619.5" width="18.8" height="13" rx="6.5" fill="#fff" stroke="#777" stroke-width="1"/><text x="460.0" y="629.6" font-size="9" fill="#444" text-anchor="middle">28</text>
<rect x="480.9" y="619.5" width="24.2" height="13" rx="6.5" fill="#fff" stroke="#777" stroke-width="1"/><text x="493.0" y="629.6" font-size="9" fill="#444" text-anchor="middle">373</text>
<rect x="472.6" y="651.5" width="18.8" height="13" rx="6.5" fill="#fff" stroke="#777" stroke-width="1"/><text x="482.0" y="661.6" font-size="9" fill="#444" text-anchor="middle">28</text>
<rect x="435.9" y="511.5" width="24.2" height="13" rx="6.5" fill="#fff" stroke="#777" stroke-width="1"/><text x="448.0" y="521.6" font-size="9" fill="#444" text-anchor="middle">342</text>
<rect x="453.9" y="538.5" width="24.2" height="13" rx="6.5" fill="#fff" stroke="#777" stroke-width="1"/><text x="466.0" y="548.6" font-size="9" fill="#444" text-anchor="middle">188</text>
<path d="M429 544 Q437 541 445 544 Q446 555 437 560 Q428 555 429 544Z" fill="#3a6fc4" stroke="#fff" stroke-width="1"/><path d="M429 544 Q437 541 445 544 L445.2 547 H428.8Z" fill="#d33"/><text x="437.0" y="555.5" font-size="8.5" font-weight="bold" fill="#fff" text-anchor="middle">10</text>
<path d="M154 599 Q162 596 170 599 Q171 610 162 615 Q153 610 154 599Z" fill="#3a6fc4" stroke="#fff" stroke-width="1"/><path d="M154 599 Q162 596 170 599 L170.2 602 H153.8Z" fill="#d33"/><text x="162.0" y="610.5" font-size="8.5" font-weight="bold" fill="#fff" text-anchor="middle">10</text>
<rect x="669.6" y="432.0" width="26.8" height="12" fill="#fff" stroke="#777" stroke-width="1"/><text x="683.0" y="441.6" font-size="9" fill="#555" text-anchor="middle">C076</text>
<path d="M524 348 H540 Q541 356 532 365 Q523 356 524 348Z" fill="#fff" stroke="#777" stroke-width="1"/><text x="532.0" y="359.0" font-size="8.5" fill="#333" text-anchor="middle">70</text>
<path d="M529 416 Q537 413 545 416 Q546 427 537 432 Q528 427 529 416Z" fill="#3a6fc4" stroke="#fff" stroke-width="1"/><path d="M529 416 Q537 413 545 416 L545.2 419 H528.8Z" fill="#d33"/><text x="537.0" y="427.5" font-size="8.5" font-weight="bold" fill="#fff" text-anchor="middle">25</text>
<path d="M574 516 Q582 513 590 516 Q591 527 582 532 Q573 527 574 516Z" fill="#3a6fc4" stroke="#fff" stroke-width="1"/><path d="M574 516 Q582 513 590 516 L590.2 519 H573.8Z" fill="#d33"/><text x="582.0" y="527.5" font-size="8.5" font-weight="bold" fill="#fff" text-anchor="middle">25</text>
<path d="M605 649 Q613 646 621 649 Q622 660 613 665 Q604 660 605 649Z" fill="#3a6fc4" stroke="#fff" stroke-width="1"/><path d="M605 649 Q613 646 621 649 L621.2 652 H604.8Z" fill="#d33"/><text x="613.0" y="660.5" font-size="8.5" font-weight="bold" fill="#fff" text-anchor="middle">10</text>
<path d="M611 663 Q619 660 627 663 Q628 674 619 679 Q610 674 611 663Z" fill="#3a6fc4" stroke="#fff" stroke-width="1"/><path d="M611 663 Q619 660 627 663 L627.2 666 H610.8Z" fill="#d33"/><text x="619.0" y="674.5" font-size="8.5" font-weight="bold" fill="#fff" text-anchor="middle">25</text>
<path d="M623 688 Q631 685 639 688 Q640 699 631 704 Q622 699 623 688Z" fill="#3a6fc4" stroke="#fff" stroke-width="1"/><path d="M623 688 Q631 685 639 688 L639.2 691 H622.8Z" fill="#d33"/><text x="631.0" y="699.5" font-size="8.5" font-weight="bold" fill="#fff" text-anchor="middle">10</text>
<text x="389.0" y="241.0" font-size="11.5" fill="#555" text-anchor="middle" font-weight="normal" stroke="#f2f2f0" stroke-width="2.5" paint-order="stroke">Doña Ana</text>
<text x="403.0" y="373.0" font-size="11.5" fill="#555" text-anchor="middle" font-weight="normal" stroke="#f2f2f0" stroke-width="2.5" paint-order="stroke">San Ysidro</text>
<text x="307.0" y="521.0" font-size="11.5" fill="#555" text-anchor="middle" font-weight="normal" stroke="#f2f2f0" stroke-width="2.5" paint-order="stroke">Fairacres</text>
<text x="527.0" y="471.0" font-size="13" fill="#444" text-anchor="middle" font-weight="normal" stroke="#f2f2f0" stroke-width="2.5" paint-order="stroke">Las Cruces</text>
<text x="429.0" y="628.0" font-size="11.5" fill="#555" text-anchor="middle" font-weight="normal" stroke="#f2f2f0" stroke-width="2.5" paint-order="stroke">Mesilla</text>
<text x="553.0" y="580.0" font-size="11" fill="#555" text-anchor="middle" font-weight="normal" stroke="#f2f2f0" stroke-width="2.5" paint-order="stroke">University</text>
<text x="553.0" y="592.0" font-size="11" fill="#555" text-anchor="middle" font-weight="normal" stroke="#f2f2f0" stroke-width="2.5" paint-order="stroke">Park</text>
<text x="555.0" y="628.0" font-size="11.5" fill="#555" text-anchor="middle" font-weight="normal" stroke="#f2f2f0" stroke-width="2.5" paint-order="stroke">Tortugas</text>
<text x="505.0" y="692.0" font-size="11.5" fill="#555" text-anchor="middle" font-weight="normal" stroke="#f2f2f0" stroke-width="2.5" paint-order="stroke">San Pablo</text>
<text x="957.0" y="138.0" font-size="11.5" fill="#555" text-anchor="middle" font-weight="normal" stroke="#f2f2f0" stroke-width="2.5" paint-order="stroke">Organ</text>
<text x="991.0" y="380.0" font-size="11.5" fill="#555" text-anchor="middle" font-weight="normal" stroke="#f2f2f0" stroke-width="2.5" paint-order="stroke">Organ</text>
<text x="581.0" y="151.0" font-size="12" fill="#2f9e58" text-anchor="start" font-weight="normal" stroke="#f2f2f0" stroke-width="2.5" paint-order="stroke">Red Hawk Golf Club</text>
<text x="359.0" y="453.0" font-size="12" fill="#2f9e58" text-anchor="middle" font-weight="normal" stroke="#f2f2f0" stroke-width="2.5" paint-order="stroke">La Llorona</text>
<text x="359.0" y="465.0" font-size="12" fill="#2f9e58" text-anchor="middle" font-weight="normal" stroke="#f2f2f0" stroke-width="2.5" paint-order="stroke">Park</text>
<text x="110.0" y="503.0" font-size="12" fill="#3f80d8" text-anchor="middle" font-weight="normal" stroke="#f2f2f0" stroke-width="2.5" paint-order="stroke">Las Cruces</text>
<text x="110.0" y="515.0" font-size="12" fill="#3f80d8" text-anchor="middle" font-weight="normal" stroke="#f2f2f0" stroke-width="2.5" paint-order="stroke">International</text>
<text x="110.0" y="528.0" font-size="12" fill="#3f80d8" text-anchor="middle" font-weight="normal" stroke="#f2f2f0" stroke-width="2.5" paint-order="stroke">Airport</text>
<text x="243.0" y="571.0" font-size="12" fill="#1e9aa3" text-anchor="end" font-weight="normal" stroke="#f2f2f0" stroke-width="2.5" paint-order="stroke">Recycled Roadrunner</text>
<text x="243.0" y="584.0" font-size="12" fill="#1e9aa3" text-anchor="end" font-weight="normal" stroke="#f2f2f0" stroke-width="2.5" paint-order="stroke">Sculpture</text>
<text x="634.0" y="399.0" font-size="12" fill="#3f80d8" text-anchor="middle" font-weight="normal" stroke="#f2f2f0" stroke-width="2.5" paint-order="stroke">Walmart</text>
<text x="654.0" y="412.0" font-size="12" fill="#3f80d8" text-anchor="end" font-weight="normal" stroke="#f2f2f0" stroke-width="2.5" paint-order="stroke">Neighborhood Market</text>
<text x="975.0" y="423.0" font-size="12" fill="#2f9e58" text-anchor="end" font-weight="normal" stroke="#f2f2f0" stroke-width="2.5" paint-order="stroke">Dripping Springs</text>
<text x="975.0" y="435.0" font-size="12" fill="#2f9e58" text-anchor="end" font-weight="normal" stroke="#f2f2f0" stroke-width="2.5" paint-order="stroke">Natural Area</text>
<text x="652.0" y="516.0" font-size="12" fill="#1e9aa3" text-anchor="start" font-weight="normal" stroke="#f2f2f0" stroke-width="2.5" paint-order="stroke">New Mexico Farm and</text>
<text x="652.0" y="529.0" font-size="12" fill="#1e9aa3" text-anchor="start" font-weight="normal" stroke="#f2f2f0" stroke-width="2.5" paint-order="stroke">Ranch Heritage Museum</text>
<g transform="translate(185,95) rotate(60)"><text x="0.0" y="0.0" font-size="9.5" fill="#5f9bd5" text-anchor="middle" font-weight="normal">Rio Grande</text></g>
<g transform="translate(330,305) rotate(80)"><text x="0.0" y="0.0" font-size="9.5" fill="#5f9bd5" text-anchor="middle" font-weight="normal">Rio Grande</text></g>
<g transform="translate(363,600) rotate(-80)"><text x="0.0" y="0.0" font-size="9.5" fill="#5f9bd5" text-anchor="middle" font-weight="normal">Rio Grande</text></g>
<g transform="translate(305,108) rotate(42)"><text x="0.0" y="0.0" font-size="9.5" fill="#a0662a" text-anchor="middle" font-weight="normal">CanAm Hwy</text></g>
<path d="M570 160 Q567 154 562 149 A9 9 0 1 1 578 149 Q573 154 570 160Z" fill="#2f9e58" transform="translate(0,-9)"/><circle cx="570" cy="139" r="3.2" fill="#fff"/>
<path d="M359 501 Q356 495 351 490 A9 9 0 1 1 367 490 Q362 495 359 501Z" fill="#2f9e58" transform="translate(0,-9)"/><circle cx="359" cy="480" r="3.2" fill="#fff"/>
<path d="M110 563 Q107 557 102 552 A9 9 0 1 1 118 552 Q113 557 110 563Z" fill="#3f80d8" transform="translate(0,-9)"/><circle cx="110" cy="542" r="3.2" fill="#fff"/>
<path d="M255 589 Q252 583 247 578 A9 9 0 1 1 263 578 Q258 583 255 589Z" fill="#1e9aa3" transform="translate(0,-9)"/><circle cx="255" cy="568" r="3.2" fill="#fff"/>
<path d="M637.5 442 Q634.5 436 629.5 431 A9 9 0 1 1 645.5 431 Q640.5 436 637.5 442Z" fill="#3f80d8" transform="translate(0,-9)"/><circle cx="637.5" cy="421" r="3.2" fill="#fff"/>
<path d="M986.6 437 Q983.6 431 978.6 426 A9 9 0 1 1 994.6 426 Q989.6 431 986.6 437Z" fill="#2f9e58" transform="translate(0,-9)"/><circle cx="986.6" cy="416" r="3.2" fill="#fff"/>
<path d="M640 531 Q637 525 632 520 A9 9 0 1 1 648 520 Q643 525 640 531Z" fill="#1e9aa3" transform="translate(0,-9)"/><circle cx="640" cy="510" r="3.2" fill="#fff"/>
<g filter="none">
<rect x="9" y="9" width="154" height="37" fill="#fff" rx="2" stroke="#ddd" stroke-width=".6"/>
<line x1="73" y1="9" x2="73" y2="46" stroke="#e6e6e6"/>
<text x="41" y="33" font-size="16" font-weight="bold" fill="#111" text-anchor="middle">Map</text>
<text x="118" y="33" font-size="16" fill="#565656" text-anchor="middle">Satellite</text>
<rect x="965" y="9" width="36" height="37" fill="#fff" rx="2" stroke="#ddd" stroke-width=".6"/>
<path d="M974 22 V18 H978 M988 18 H992 V22 M992 33 V37 H988 M978 37 H974 V33" fill="none" stroke="#666" stroke-width="2"/>
<rect x="965" y="542" width="36" height="36" fill="#fff" rx="2" stroke="#ddd" stroke-width=".6"/>
<circle cx="983" cy="551" r="4" fill="#f4b400"/><path d="M978 556 H988 L989 566 H986 L985 572 H981 L980 566 H977Z" fill="#f4b400"/>
<rect x="965" y="607" width="36" height="74" fill="#fff" rx="2" stroke="#ddd" stroke-width=".6"/>
<line x1="969" y1="644" x2="997" y2="644" stroke="#e6e6e6"/>
<path d="M976 626 H990 M983 619 V633 M976 662 H990" stroke="#666" stroke-width="2.6"/>
</g>
<g transform="translate(6,697) scale(1.0)" font-size="16" font-weight="bold" stroke="#fff" stroke-width="2" paint-order="stroke"><text x="0" y="0" fill="#4285f4">G</text><text x="12.2" y="0" fill="#ea4335">o</text><text x="22.5" y="0" fill="#fbbc05">o</text><text x="33.3" y="0" fill="#4285f4">g</text><text x="44" y="0" fill="#34a853">l</text><text x="48.7" y="0" fill="#ea4335">e</text></g>
<rect x="660" y="691" width="350" height="13" fill="#f5f5f5" opacity=".8"/>
<text y="701" font-size="8.8" fill="#222"><tspan x="665">Keyboard shortcuts</tspan><tspan x="754">Map data ©2021 Google</tspan><tspan x="864">Terms of Use</tspan><tspan x="928">Report a map error</tspan></text>
</svg>
<svg class="abs" style="left:909.3px;top:326.0px" width="52.6" height="52.6" viewBox="-50 -50 100 100"><circle r="50" fill="#4b3fd6"/><g transform="scale(0.8555)"><clipPath id="chans935352"><circle r="50"/></clipPath><g clip-path="url(#chans935352)"><rect x="-50" y="-50" width="100" height="100" fill="#f6c531"/><ellipse cx="0" cy="52" rx="40" ry="24" fill="#3c3f44"/><rect x="-8" y="10" width="16" height="20" fill="#d9a07a" opacity=".9"/><ellipse cx="0" cy="-5" rx="19" ry="24" fill="#d9a07a"/><path d="M-20 -8 Q-24 -38 0 -36 Q24 -38 20 -8 Q18 -24 0 -26 Q-18 -24 -20 -8Z" fill="#3a2a20"/><path d="M-17 2 Q-16 20 0 22 Q16 20 17 2 Q12 12 0 12 Q-12 12 -17 2Z" fill="#3a2a20" opacity=".55"/><circle cx="-7" cy="-6" r="1.8" fill="#222" opacity=".7"/><circle cx="7" cy="-6" r="1.8" fill="#222" opacity=".7"/><path d="M-6 8 Q0 12 6 8" fill="none" stroke="#fff" stroke-width="2" opacity=".7"/></g></g></svg>
<svg class="abs" style="left:1216.9px;top:377.7px" width="52.6" height="52.6" viewBox="-50 -50 100 100"><circle r="50" fill="#1d1d1d"/><g transform="scale(0.8555)"><clipPath id="ckarina1243404"><circle r="50"/></clipPath><g clip-path="url(#ckarina1243404)"><rect x="-50" y="-50" width="100" height="100" fill="#19b8d0"/><path d="M-28 -6 Q-32 -46 0 -46 Q32 -46 28 -6 L34 46 L-34 46 Z" fill="#111"/><ellipse cx="0" cy="52" rx="40" ry="24" fill="#c0392b"/><rect x="-8" y="10" width="16" height="20" fill="#e8b896" opacity=".9"/><ellipse cx="0" cy="-5" rx="19" ry="24" fill="#e8b896"/><path d="M-20 -2 Q-20 -34 2 -32 Q22 -32 20 -2 Q14 -22 -4 -24 Q-14 -20 -20 -2Z" fill="#111"/><circle cx="-7" cy="-6" r="1.8" fill="#222" opacity=".7"/><circle cx="7" cy="-6" r="1.8" fill="#222" opacity=".7"/><path d="M-6 8 Q0 12 6 8" fill="none" stroke="#fff" stroke-width="2" opacity=".7"/></g></g></svg>
<svg class="abs" style="left:1173.9px;top:466.5px" width="52.6" height="52.6" viewBox="-50 -50 100 100"><circle r="50" fill="#1d1d1d"/><g transform="scale(0.8555)"><clipPath id="cbryan1200492"><circle r="50"/></clipPath><g clip-path="url(#cbryan1200492)"><rect x="-50" y="-50" width="100" height="100" fill="#17a98f"/><ellipse cx="0" cy="52" rx="40" ry="24" fill="#2f3a40"/><rect x="-8" y="10" width="16" height="20" fill="#d9a583" opacity=".9"/><ellipse cx="0" cy="-5" rx="19" ry="24" fill="#d9a583"/><path d="M-20 -8 Q-24 -38 0 -36 Q24 -38 20 -8 Q18 -24 0 -26 Q-18 -24 -20 -8Z" fill="#3b2a1e"/><path d="M-17 2 Q-16 20 0 22 Q16 20 17 2 Q12 12 0 12 Q-12 12 -17 2Z" fill="#3b2a1e" opacity=".55"/><circle cx="-7" cy="-6" r="1.8" fill="#222" opacity=".7"/><circle cx="7" cy="-6" r="1.8" fill="#222" opacity=".7"/><path d="M-6 8 Q0 12 6 8" fill="none" stroke="#fff" stroke-width="2" opacity=".7"/></g></g></svg>
<svg class="abs" style="left:991.9px;top:623.7px" width="52.6" height="52.6" viewBox="-50 -50 100 100"><circle r="50" fill="#4b3fd6"/><g transform="scale(0.8555)"><clipPath id="cmelissa1018650"><circle r="50"/></clipPath><g clip-path="url(#cmelissa1018650)"><rect x="-50" y="-50" width="100" height="100" fill="#1b8a3a"/><path d="M-28 -6 Q-32 -46 0 -46 Q32 -46 28 -6 L34 46 L-34 46 Z" fill="#5a3520"/><ellipse cx="0" cy="52" rx="40" ry="24" fill="#f0f0f0"/><rect x="-8" y="10" width="16" height="20" fill="#e2ad86" opacity=".9"/><ellipse cx="0" cy="-5" rx="19" ry="24" fill="#e2ad86"/><path d="M-20 -2 Q-20 -34 2 -32 Q22 -32 20 -2 Q14 -22 -4 -24 Q-14 -20 -20 -2Z" fill="#5a3520"/><circle cx="-7" cy="-6" r="1.8" fill="#222" opacity=".7"/><circle cx="7" cy="-6" r="1.8" fill="#222" opacity=".7"/><path d="M-6 8 Q0 12 6 8" fill="none" stroke="#fff" stroke-width="2" opacity=".7"/></g></g></svg>
<svg class="abs" style="left:1194.6px;top:822.0px" width="52.6" height="52.6" viewBox="-50 -50 100 100"><circle r="50" fill="#4b3fd6"/><g transform="scale(0.8555)"><clipPath id="cbryan1220848"><circle r="50"/></clipPath><g clip-path="url(#cbryan1220848)"><rect x="-50" y="-50" width="100" height="100" fill="#17a98f"/><ellipse cx="0" cy="52" rx="40" ry="24" fill="#2f3a40"/><rect x="-8" y="10" width="16" height="20" fill="#d9a583" opacity=".9"/><ellipse cx="0" cy="-5" rx="19" ry="24" fill="#d9a583"/><path d="M-20 -8 Q-24 -38 0 -36 Q24 -38 20 -8 Q18 -24 0 -26 Q-18 -24 -20 -8Z" fill="#3b2a1e"/><path d="M-17 2 Q-16 20 0 22 Q16 20 17 2 Q12 12 0 12 Q-12 12 -17 2Z" fill="#3b2a1e" opacity=".55"/><circle cx="-7" cy="-6" r="1.8" fill="#222" opacity=".7"/><circle cx="7" cy="-6" r="1.8" fill="#222" opacity=".7"/><path d="M-6 8 Q0 12 6 8" fill="none" stroke="#fff" stroke-width="2" opacity=".7"/></g></g></svg>
<div class="abs" style="left:219.0px;top:1018.0px;width:1420.0px;height:54.0px;background:#edeef1;"></div>
<div class="t" style="left:1625.0px;top:1038.7px;font-size:12.8px;line-height:12.8px;color:#9ba6ae;font-weight:normal;transform:translateX(-100%);">&copy; 2021. All rights reserved.</div>
</div>
</body></html>
